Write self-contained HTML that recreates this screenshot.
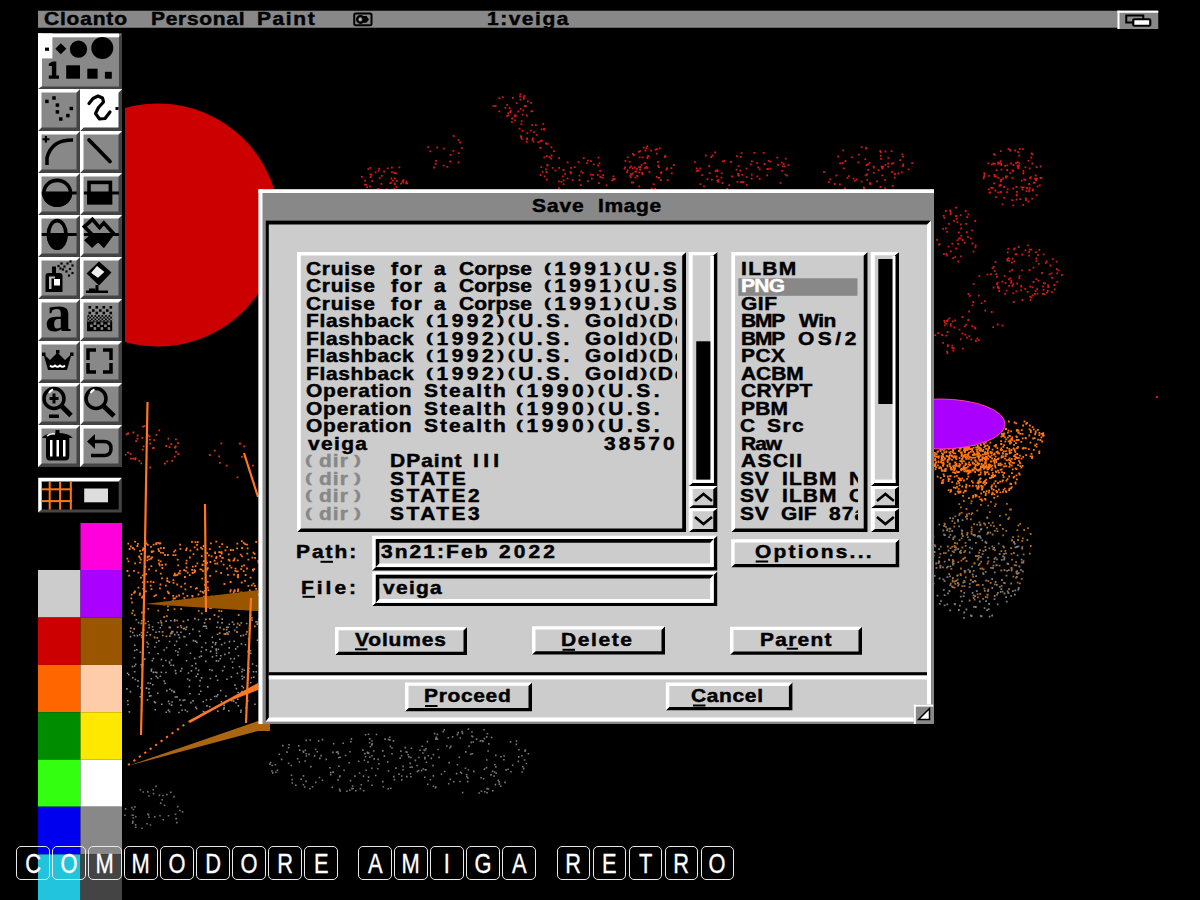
<!DOCTYPE html>
<html><head><meta charset="utf-8"><style>
html,body{margin:0;padding:0;background:#000;}
body{width:1200px;height:900px;position:relative;overflow:hidden;}
.p{display:inline-block;font-weight:bold;transform:translateY(-1.6px) scaleY(0.72);transform-origin:50% 50%;}
</style></head><body>
<svg width="1200" height="900" style="position:absolute;left:0;top:0"><rect x="0.00" y="0.00" width="1200.00" height="900.00" fill="#000"/><clipPath id="cc"><rect x="125" y="0" width="400" height="900"/></clipPath><circle cx="158" cy="225" r="121.5" fill="#cc0000" clip-path="url(#cc)"/><path fill="#d51818" d="M380.5 182.9h1.8v1.8h-1.8zM380.9 174.9h1.8v1.8h-1.8zM369.7 176.1h1.8v1.8h-1.8zM402.3 181.6h1.8v1.8h-1.8zM401.6 180.2h1.8v1.8h-1.8zM392.1 179.8h1.8v1.8h-1.8zM364.0 183.8h1.8v1.8h-1.8zM393.8 182.6h1.8v1.8h-1.8zM367.4 168.2h1.8v1.8h-1.8zM370.5 173.9h1.8v1.8h-1.8zM390.5 177.6h1.8v1.8h-1.8zM393.8 172.1h1.8v1.8h-1.8zM390.5 181.8h1.8v1.8h-1.8zM376.6 189.8h1.8v1.8h-1.8zM393.4 187.7h1.8v1.8h-1.8zM374.8 171.5h1.8v1.8h-1.8zM378.8 177.0h1.8v1.8h-1.8zM396.0 180.3h1.8v1.8h-1.8zM377.8 169.7h1.8v1.8h-1.8zM377.2 187.9h1.8v1.8h-1.8zM371.4 180.2h1.8v1.8h-1.8zM391.0 166.7h1.8v1.8h-1.8zM385.7 188.6h1.8v1.8h-1.8zM361.0 175.9h1.8v1.8h-1.8zM383.2 170.6h1.8v1.8h-1.8zM393.9 177.4h1.8v1.8h-1.8zM365.3 184.0h1.8v1.8h-1.8zM395.5 186.0h1.8v1.8h-1.8zM405.6 180.8h1.8v1.8h-1.8zM386.8 167.4h1.8v1.8h-1.8zM395.3 172.5h1.8v1.8h-1.8zM378.2 167.8h1.8v1.8h-1.8zM369.6 173.4h1.8v1.8h-1.8zM398.5 166.5h1.8v1.8h-1.8zM364.1 179.8h1.8v1.8h-1.8zM405.2 182.4h1.8v1.8h-1.8zM369.4 166.9h1.8v1.8h-1.8zM391.1 171.3h1.8v1.8h-1.8zM369.0 185.5h1.8v1.8h-1.8zM402.5 179.3h1.8v1.8h-1.8zM389.4 182.2h1.8v1.8h-1.8zM406.2 182.4h1.8v1.8h-1.8zM393.9 183.1h1.8v1.8h-1.8zM366.2 186.3h1.8v1.8h-1.8zM400.2 182.6h1.8v1.8h-1.8z"/><path fill="#d51818" d="M427.1 146.3h1.8v1.8h-1.8zM452.8 135.1h1.8v1.8h-1.8zM442.7 164.7h1.8v1.8h-1.8zM433.1 166.6h1.8v1.8h-1.8zM452.5 150.0h1.8v1.8h-1.8zM449.3 160.6h1.8v1.8h-1.8zM446.5 165.9h1.8v1.8h-1.8zM436.3 146.6h1.8v1.8h-1.8zM457.9 152.3h1.8v1.8h-1.8zM434.7 163.0h1.8v1.8h-1.8zM460.9 147.2h1.8v1.8h-1.8zM429.4 150.5h1.8v1.8h-1.8zM442.9 147.8h1.8v1.8h-1.8zM459.3 141.6h1.8v1.8h-1.8zM457.6 139.3h1.8v1.8h-1.8zM435.1 159.9h1.8v1.8h-1.8zM457.7 161.6h1.8v1.8h-1.8zM449.8 154.0h1.8v1.8h-1.8z"/><path fill="#d51818" d="M514.1 114.2h1.8v1.8h-1.8zM509.5 111.1h1.8v1.8h-1.8zM519.8 108.0h1.8v1.8h-1.8zM521.7 113.7h1.8v1.8h-1.8zM530.5 110.4h1.8v1.8h-1.8zM506.2 103.9h1.8v1.8h-1.8zM511.8 117.4h1.8v1.8h-1.8zM507.4 112.2h1.8v1.8h-1.8zM523.6 95.0h1.8v1.8h-1.8zM498.4 110.4h1.8v1.8h-1.8zM517.5 110.6h1.8v1.8h-1.8zM506.3 114.9h1.8v1.8h-1.8zM515.8 102.3h1.8v1.8h-1.8zM531.3 110.3h1.8v1.8h-1.8zM504.5 106.9h1.8v1.8h-1.8zM508.8 107.3h1.8v1.8h-1.8zM492.5 105.2h1.8v1.8h-1.8zM522.9 97.9h1.8v1.8h-1.8zM511.2 117.7h1.8v1.8h-1.8zM520.8 120.2h1.8v1.8h-1.8zM494.7 105.1h1.8v1.8h-1.8zM507.5 114.6h1.8v1.8h-1.8zM519.5 93.3h1.8v1.8h-1.8zM522.8 96.5h1.8v1.8h-1.8zM519.2 95.5h1.8v1.8h-1.8zM514.1 119.4h1.8v1.8h-1.8zM509.9 110.1h1.8v1.8h-1.8zM522.4 109.5h1.8v1.8h-1.8zM511.0 121.3h1.8v1.8h-1.8zM524.9 105.1h1.8v1.8h-1.8zM530.3 101.9h1.8v1.8h-1.8zM523.6 105.3h1.8v1.8h-1.8zM513.8 115.5h1.8v1.8h-1.8zM515.0 114.8h1.8v1.8h-1.8zM498.5 97.3h1.8v1.8h-1.8zM519.5 98.7h1.8v1.8h-1.8zM501.8 96.3h1.8v1.8h-1.8zM526.0 114.6h1.8v1.8h-1.8zM526.9 100.4h1.8v1.8h-1.8zM512.0 96.9h1.8v1.8h-1.8z"/><path fill="#d51818" d="M537.4 141.2h1.8v1.8h-1.8zM525.8 140.9h1.8v1.8h-1.8zM540.7 128.4h1.8v1.8h-1.8zM520.9 137.9h1.8v1.8h-1.8zM531.1 124.3h1.8v1.8h-1.8zM535.8 133.9h1.8v1.8h-1.8zM542.4 122.9h1.8v1.8h-1.8zM539.7 140.1h1.8v1.8h-1.8zM543.3 128.6h1.8v1.8h-1.8zM525.9 138.4h1.8v1.8h-1.8zM533.1 131.2h1.8v1.8h-1.8zM543.1 127.9h1.8v1.8h-1.8zM518.7 127.8h1.8v1.8h-1.8zM520.0 135.3h1.8v1.8h-1.8zM535.0 124.3h1.8v1.8h-1.8zM531.9 137.6h1.8v1.8h-1.8zM532.6 140.7h1.8v1.8h-1.8zM531.5 139.0h1.8v1.8h-1.8zM541.1 139.8h1.8v1.8h-1.8zM526.2 137.5h1.8v1.8h-1.8zM520.5 123.3h1.8v1.8h-1.8zM520.2 136.4h1.8v1.8h-1.8zM521.8 129.9h1.8v1.8h-1.8zM530.1 129.7h1.8v1.8h-1.8zM526.4 132.2h1.8v1.8h-1.8z"/><path fill="#d51818" d="M553.1 150.2h1.8v1.8h-1.8zM548.6 156.1h1.8v1.8h-1.8zM545.1 142.6h1.8v1.8h-1.8zM543.4 156.4h1.8v1.8h-1.8zM539.3 147.0h1.8v1.8h-1.8zM550.7 154.6h1.8v1.8h-1.8zM546.0 155.3h1.8v1.8h-1.8zM546.8 142.9h1.8v1.8h-1.8zM539.5 146.7h1.8v1.8h-1.8zM550.5 146.5h1.8v1.8h-1.8z"/><path fill="#d51818" d="M546.4 164.6h1.8v1.8h-1.8zM541.7 171.0h1.8v1.8h-1.8zM543.8 175.4h1.8v1.8h-1.8zM539.6 174.1h1.8v1.8h-1.8zM550.3 157.8h1.8v1.8h-1.8zM562.6 169.1h1.8v1.8h-1.8zM540.5 166.3h1.8v1.8h-1.8zM558.2 167.0h1.8v1.8h-1.8zM562.7 179.4h1.8v1.8h-1.8zM562.0 175.5h1.8v1.8h-1.8zM566.7 177.8h1.8v1.8h-1.8zM558.2 157.2h1.8v1.8h-1.8zM562.6 183.2h1.8v1.8h-1.8zM551.8 166.9h1.8v1.8h-1.8zM566.7 161.4h1.8v1.8h-1.8zM558.0 187.3h1.8v1.8h-1.8zM546.0 178.7h1.8v1.8h-1.8zM569.6 171.1h1.8v1.8h-1.8zM560.5 180.9h1.8v1.8h-1.8zM545.7 171.1h1.8v1.8h-1.8zM558.0 180.5h1.8v1.8h-1.8zM554.6 169.8h1.8v1.8h-1.8zM545.0 168.5h1.8v1.8h-1.8zM564.2 173.0h1.8v1.8h-1.8zM546.8 164.0h1.8v1.8h-1.8z"/><path fill="#d51818" d="M613.9 178.2h1.8v1.8h-1.8zM597.6 156.7h1.8v1.8h-1.8zM601.8 177.0h1.8v1.8h-1.8zM612.5 175.5h1.8v1.8h-1.8zM590.9 177.7h1.8v1.8h-1.8zM571.8 179.2h1.8v1.8h-1.8zM597.1 164.6h1.8v1.8h-1.8zM605.6 184.4h1.8v1.8h-1.8zM573.9 166.3h1.8v1.8h-1.8zM596.9 174.0h1.8v1.8h-1.8zM586.1 162.3h1.8v1.8h-1.8zM612.9 178.8h1.8v1.8h-1.8zM577.7 161.3h1.8v1.8h-1.8zM611.2 179.4h1.8v1.8h-1.8zM612.4 178.0h1.8v1.8h-1.8zM578.6 174.7h1.8v1.8h-1.8zM570.2 167.0h1.8v1.8h-1.8zM591.0 177.7h1.8v1.8h-1.8zM580.4 170.7h1.8v1.8h-1.8zM599.5 176.1h1.8v1.8h-1.8zM602.2 174.2h1.8v1.8h-1.8zM587.0 180.2h1.8v1.8h-1.8zM592.8 163.4h1.8v1.8h-1.8zM581.9 172.0h1.8v1.8h-1.8zM590.1 173.8h1.8v1.8h-1.8zM592.0 174.0h1.8v1.8h-1.8zM590.1 160.2h1.8v1.8h-1.8zM598.1 182.2h1.8v1.8h-1.8zM599.2 169.9h1.8v1.8h-1.8zM598.6 162.5h1.8v1.8h-1.8zM570.1 172.5h1.8v1.8h-1.8zM578.6 179.1h1.8v1.8h-1.8zM582.9 157.3h1.8v1.8h-1.8zM580.0 184.2h1.8v1.8h-1.8zM586.9 159.7h1.8v1.8h-1.8z"/><path fill="#d51818" d="M626.2 171.3h1.8v1.8h-1.8zM636.1 167.9h1.8v1.8h-1.8zM641.3 171.9h1.8v1.8h-1.8zM631.8 172.5h1.8v1.8h-1.8zM641.5 173.4h1.8v1.8h-1.8zM638.8 156.5h1.8v1.8h-1.8zM630.8 173.7h1.8v1.8h-1.8zM629.8 176.5h1.8v1.8h-1.8zM636.4 174.9h1.8v1.8h-1.8zM631.0 181.6h1.8v1.8h-1.8zM640.7 164.0h1.8v1.8h-1.8zM632.4 181.7h1.8v1.8h-1.8zM629.4 174.9h1.8v1.8h-1.8zM639.4 166.1h1.8v1.8h-1.8zM623.6 167.8h1.8v1.8h-1.8zM634.6 176.8h1.8v1.8h-1.8zM638.2 166.3h1.8v1.8h-1.8zM638.4 171.4h1.8v1.8h-1.8zM633.7 166.6h1.8v1.8h-1.8zM630.1 173.3h1.8v1.8h-1.8zM624.5 160.0h1.8v1.8h-1.8zM632.0 153.0h1.8v1.8h-1.8z"/><path fill="#d51818" d="M642.8 146.8h1.8v1.8h-1.8zM636.6 175.0h1.8v1.8h-1.8zM658.0 166.2h1.8v1.8h-1.8zM644.6 149.6h1.8v1.8h-1.8zM670.9 172.5h1.8v1.8h-1.8zM664.0 156.1h1.8v1.8h-1.8zM645.6 147.3h1.8v1.8h-1.8zM660.1 179.2h1.8v1.8h-1.8zM624.3 166.4h1.8v1.8h-1.8zM656.0 148.2h1.8v1.8h-1.8zM626.8 156.5h1.8v1.8h-1.8zM639.1 150.3h1.8v1.8h-1.8zM648.6 170.9h1.8v1.8h-1.8zM658.5 176.8h1.8v1.8h-1.8zM666.8 179.3h1.8v1.8h-1.8zM628.8 160.7h1.8v1.8h-1.8zM632.9 154.1h1.8v1.8h-1.8zM646.5 167.1h1.8v1.8h-1.8zM654.6 148.8h1.8v1.8h-1.8zM629.0 166.7h1.8v1.8h-1.8zM644.4 162.2h1.8v1.8h-1.8zM646.9 156.0h1.8v1.8h-1.8zM660.0 172.1h1.8v1.8h-1.8zM646.5 157.1h1.8v1.8h-1.8zM646.4 145.3h1.8v1.8h-1.8zM631.9 167.5h1.8v1.8h-1.8zM626.7 169.4h1.8v1.8h-1.8zM650.2 149.8h1.8v1.8h-1.8zM643.5 162.2h1.8v1.8h-1.8zM655.9 175.9h1.8v1.8h-1.8zM647.4 154.9h1.8v1.8h-1.8zM645.4 166.0h1.8v1.8h-1.8zM660.5 171.2h1.8v1.8h-1.8zM637.8 150.9h1.8v1.8h-1.8zM641.7 156.4h1.8v1.8h-1.8zM630.4 165.4h1.8v1.8h-1.8zM639.2 168.6h1.8v1.8h-1.8zM657.1 160.9h1.8v1.8h-1.8zM672.9 164.1h1.8v1.8h-1.8zM665.5 168.6h1.8v1.8h-1.8zM658.9 147.4h1.8v1.8h-1.8zM635.2 170.6h1.8v1.8h-1.8zM654.3 187.7h1.8v1.8h-1.8zM652.8 183.3h1.8v1.8h-1.8zM659.8 179.4h1.8v1.8h-1.8zM657.1 164.7h1.8v1.8h-1.8zM655.9 152.8h1.8v1.8h-1.8zM664.5 155.0h1.8v1.8h-1.8zM650.9 187.7h1.8v1.8h-1.8zM643.9 167.3h1.8v1.8h-1.8zM666.2 167.3h1.8v1.8h-1.8zM634.4 170.7h1.8v1.8h-1.8zM657.7 177.0h1.8v1.8h-1.8zM638.4 185.5h1.8v1.8h-1.8zM670.5 167.2h1.8v1.8h-1.8z"/><path fill="#d51818" d="M749.9 163.5h1.8v1.8h-1.8zM780.8 161.7h1.8v1.8h-1.8zM763.7 163.1h1.8v1.8h-1.8zM716.5 179.9h1.8v1.8h-1.8zM781.4 169.9h1.8v1.8h-1.8zM717.4 181.0h1.8v1.8h-1.8zM738.1 174.8h1.8v1.8h-1.8zM779.6 182.0h1.8v1.8h-1.8zM728.4 190.7h1.8v1.8h-1.8zM740.1 181.3h1.8v1.8h-1.8zM716.5 169.3h1.8v1.8h-1.8zM703.1 185.4h1.8v1.8h-1.8zM776.4 156.8h1.8v1.8h-1.8zM704.9 154.6h1.8v1.8h-1.8zM777.3 164.1h1.8v1.8h-1.8zM737.7 165.2h1.8v1.8h-1.8zM736.0 155.3h1.8v1.8h-1.8zM740.7 152.3h1.8v1.8h-1.8zM737.3 174.7h1.8v1.8h-1.8zM757.3 166.5h1.8v1.8h-1.8zM708.8 172.2h1.8v1.8h-1.8zM726.3 188.1h1.8v1.8h-1.8zM767.2 168.3h1.8v1.8h-1.8zM723.5 160.0h1.8v1.8h-1.8zM708.3 165.1h1.8v1.8h-1.8zM750.8 177.7h1.8v1.8h-1.8zM753.4 190.2h1.8v1.8h-1.8zM714.7 170.2h1.8v1.8h-1.8zM784.8 157.8h1.8v1.8h-1.8zM720.8 172.5h1.8v1.8h-1.8zM745.8 176.2h1.8v1.8h-1.8zM731.1 175.6h1.8v1.8h-1.8zM741.9 181.2h1.8v1.8h-1.8zM693.9 161.2h1.8v1.8h-1.8zM739.9 155.9h1.8v1.8h-1.8zM706.5 178.2h1.8v1.8h-1.8zM717.5 178.9h1.8v1.8h-1.8zM766.3 174.4h1.8v1.8h-1.8zM758.8 168.4h1.8v1.8h-1.8zM697.2 169.6h1.8v1.8h-1.8zM756.3 162.2h1.8v1.8h-1.8zM736.5 180.9h1.8v1.8h-1.8zM710.9 178.7h1.8v1.8h-1.8zM787.7 164.2h1.8v1.8h-1.8zM745.6 167.7h1.8v1.8h-1.8zM784.6 173.7h1.8v1.8h-1.8zM769.5 160.8h1.8v1.8h-1.8zM739.4 169.8h1.8v1.8h-1.8zM699.6 183.3h1.8v1.8h-1.8zM762.8 151.9h1.8v1.8h-1.8zM766.5 168.1h1.8v1.8h-1.8zM756.4 175.5h1.8v1.8h-1.8zM695.8 167.5h1.8v1.8h-1.8zM782.8 163.3h1.8v1.8h-1.8zM711.6 154.6h1.8v1.8h-1.8zM701.3 174.3h1.8v1.8h-1.8zM786.3 174.8h1.8v1.8h-1.8zM745.7 191.0h1.8v1.8h-1.8zM721.8 160.4h1.8v1.8h-1.8zM758.8 178.0h1.8v1.8h-1.8zM710.4 156.1h1.8v1.8h-1.8zM750.9 173.8h1.8v1.8h-1.8zM699.3 167.4h1.8v1.8h-1.8zM720.5 176.7h1.8v1.8h-1.8zM735.6 168.7h1.8v1.8h-1.8zM728.3 184.2h1.8v1.8h-1.8zM781.9 165.5h1.8v1.8h-1.8zM767.7 159.9h1.8v1.8h-1.8zM742.6 180.9h1.8v1.8h-1.8zM783.9 165.5h1.8v1.8h-1.8zM737.2 173.0h1.8v1.8h-1.8zM695.7 170.2h1.8v1.8h-1.8zM716.0 175.4h1.8v1.8h-1.8zM714.2 151.6h1.8v1.8h-1.8zM741.4 174.0h1.8v1.8h-1.8zM721.6 182.1h1.8v1.8h-1.8zM730.1 161.1h1.8v1.8h-1.8zM753.5 151.9h1.8v1.8h-1.8zM715.5 169.7h1.8v1.8h-1.8zM769.6 167.7h1.8v1.8h-1.8zM751.0 160.4h1.8v1.8h-1.8zM748.4 188.9h1.8v1.8h-1.8zM725.3 190.6h1.8v1.8h-1.8zM716.6 170.3h1.8v1.8h-1.8zM745.8 184.0h1.8v1.8h-1.8z"/><path fill="#d51818" d="M842.3 149.5h1.8v1.8h-1.8zM884.2 179.0h1.8v1.8h-1.8zM876.9 189.1h1.8v1.8h-1.8zM872.9 171.9h1.8v1.8h-1.8zM894.0 173.1h1.8v1.8h-1.8zM902.2 155.7h1.8v1.8h-1.8zM860.8 146.2h1.8v1.8h-1.8zM891.0 162.7h1.8v1.8h-1.8zM884.3 187.6h1.8v1.8h-1.8zM865.8 164.1h1.8v1.8h-1.8zM850.9 156.4h1.8v1.8h-1.8zM846.6 177.0h1.8v1.8h-1.8zM867.2 169.0h1.8v1.8h-1.8zM860.7 180.8h1.8v1.8h-1.8zM882.2 165.9h1.8v1.8h-1.8zM887.3 165.8h1.8v1.8h-1.8zM839.0 183.6h1.8v1.8h-1.8zM879.8 155.0h1.8v1.8h-1.8zM897.5 172.6h1.8v1.8h-1.8zM833.9 183.1h1.8v1.8h-1.8zM876.2 180.4h1.8v1.8h-1.8zM872.7 165.7h1.8v1.8h-1.8zM829.4 178.5h1.8v1.8h-1.8zM867.0 163.6h1.8v1.8h-1.8zM877.7 169.2h1.8v1.8h-1.8zM887.3 162.6h1.8v1.8h-1.8zM865.2 147.1h1.8v1.8h-1.8zM852.7 177.7h1.8v1.8h-1.8zM902.4 163.5h1.8v1.8h-1.8zM862.9 186.6h1.8v1.8h-1.8zM855.8 178.6h1.8v1.8h-1.8zM907.7 168.5h1.8v1.8h-1.8zM899.1 159.2h1.8v1.8h-1.8zM873.0 166.8h1.8v1.8h-1.8zM869.3 183.1h1.8v1.8h-1.8zM911.2 162.2h1.8v1.8h-1.8zM847.8 175.2h1.8v1.8h-1.8zM835.5 174.6h1.8v1.8h-1.8zM884.5 163.9h1.8v1.8h-1.8zM879.4 150.1h1.8v1.8h-1.8zM884.6 150.6h1.8v1.8h-1.8zM844.5 160.1h1.8v1.8h-1.8zM853.8 180.0h1.8v1.8h-1.8zM868.7 161.9h1.8v1.8h-1.8zM879.5 186.1h1.8v1.8h-1.8zM866.2 173.6h1.8v1.8h-1.8zM900.9 171.5h1.8v1.8h-1.8zM844.2 187.4h1.8v1.8h-1.8zM901.5 153.4h1.8v1.8h-1.8zM864.7 174.4h1.8v1.8h-1.8zM893.9 176.8h1.8v1.8h-1.8zM858.0 153.8h1.8v1.8h-1.8zM869.1 182.1h1.8v1.8h-1.8zM837.3 155.6h1.8v1.8h-1.8zM865.4 147.8h1.8v1.8h-1.8zM857.4 161.4h1.8v1.8h-1.8zM880.1 158.0h1.8v1.8h-1.8zM839.2 162.5h1.8v1.8h-1.8zM864.4 158.2h1.8v1.8h-1.8zM866.4 178.9h1.8v1.8h-1.8zM891.8 185.0h1.8v1.8h-1.8zM841.8 162.1h1.8v1.8h-1.8zM828.0 181.3h1.8v1.8h-1.8zM842.9 167.5h1.8v1.8h-1.8zM879.9 151.4h1.8v1.8h-1.8zM881.3 167.6h1.8v1.8h-1.8zM823.1 171.1h1.8v1.8h-1.8zM890.7 150.3h1.8v1.8h-1.8zM891.2 171.0h1.8v1.8h-1.8zM881.3 174.5h1.8v1.8h-1.8zM902.1 165.2h1.8v1.8h-1.8zM892.5 162.3h1.8v1.8h-1.8zM887.4 157.0h1.8v1.8h-1.8zM863.4 187.4h1.8v1.8h-1.8zM880.7 165.6h1.8v1.8h-1.8z"/><path fill="#d51818" d="M992.6 162.6h1.8v1.8h-1.8zM1015.7 193.8h1.8v1.8h-1.8zM1020.5 186.5h1.8v1.8h-1.8zM1011.3 199.2h1.8v1.8h-1.8zM1004.2 165.0h1.8v1.8h-1.8zM1029.1 177.2h1.8v1.8h-1.8zM1006.4 164.4h1.8v1.8h-1.8zM1006.8 188.5h1.8v1.8h-1.8zM1018.2 154.7h1.8v1.8h-1.8zM1020.8 179.7h1.8v1.8h-1.8zM994.4 189.6h1.8v1.8h-1.8zM1006.2 169.1h1.8v1.8h-1.8zM1024.9 197.4h1.8v1.8h-1.8zM998.5 184.6h1.8v1.8h-1.8zM1001.6 203.4h1.8v1.8h-1.8zM1003.4 196.9h1.8v1.8h-1.8zM999.9 191.1h1.8v1.8h-1.8zM1031.7 153.4h1.8v1.8h-1.8zM1003.3 186.1h1.8v1.8h-1.8zM1010.1 162.6h1.8v1.8h-1.8zM1040.5 177.1h1.8v1.8h-1.8zM987.9 188.5h1.8v1.8h-1.8zM988.6 191.7h1.8v1.8h-1.8zM1000.3 178.9h1.8v1.8h-1.8zM1034.2 178.1h1.8v1.8h-1.8zM993.9 153.9h1.8v1.8h-1.8zM1032.1 188.6h1.8v1.8h-1.8zM997.3 191.5h1.8v1.8h-1.8zM1021.7 188.7h1.8v1.8h-1.8zM983.4 172.2h1.8v1.8h-1.8zM1028.3 189.3h1.8v1.8h-1.8zM1022.0 148.2h1.8v1.8h-1.8zM1015.5 186.1h1.8v1.8h-1.8zM1039.8 165.6h1.8v1.8h-1.8zM1005.1 176.8h1.8v1.8h-1.8zM1028.7 167.6h1.8v1.8h-1.8zM1031.5 162.6h1.8v1.8h-1.8zM1017.4 165.3h1.8v1.8h-1.8zM1015.2 162.2h1.8v1.8h-1.8zM989.2 191.6h1.8v1.8h-1.8zM1018.1 164.7h1.8v1.8h-1.8zM1015.8 194.6h1.8v1.8h-1.8zM993.5 173.9h1.8v1.8h-1.8zM1022.7 186.4h1.8v1.8h-1.8zM1007.5 147.9h1.8v1.8h-1.8zM1033.8 181.7h1.8v1.8h-1.8zM1012.3 170.1h1.8v1.8h-1.8zM1017.4 167.2h1.8v1.8h-1.8zM994.0 163.0h1.8v1.8h-1.8zM1000.4 164.1h1.8v1.8h-1.8zM991.9 187.0h1.8v1.8h-1.8zM990.3 187.0h1.8v1.8h-1.8zM993.2 182.5h1.8v1.8h-1.8zM1035.3 179.5h1.8v1.8h-1.8zM997.5 177.0h1.8v1.8h-1.8zM1014.3 149.6h1.8v1.8h-1.8zM999.7 179.3h1.8v1.8h-1.8zM1002.3 177.6h1.8v1.8h-1.8zM1025.6 190.2h1.8v1.8h-1.8zM1028.7 186.9h1.8v1.8h-1.8zM1006.0 175.6h1.8v1.8h-1.8zM1006.4 169.5h1.8v1.8h-1.8zM1009.3 149.7h1.8v1.8h-1.8zM1005.0 175.5h1.8v1.8h-1.8zM993.6 175.5h1.8v1.8h-1.8zM1022.5 172.6h1.8v1.8h-1.8zM1030.7 152.6h1.8v1.8h-1.8zM1009.0 149.1h1.8v1.8h-1.8zM1022.3 203.9h1.8v1.8h-1.8zM982.7 177.5h1.8v1.8h-1.8zM1022.5 169.9h1.8v1.8h-1.8zM1018.9 147.9h1.8v1.8h-1.8zM1028.3 183.1h1.8v1.8h-1.8zM1012.5 164.1h1.8v1.8h-1.8zM1024.5 166.5h1.8v1.8h-1.8zM1016.6 165.6h1.8v1.8h-1.8zM983.2 175.6h1.8v1.8h-1.8zM1016.0 190.9h1.8v1.8h-1.8zM995.1 175.4h1.8v1.8h-1.8zM1024.5 178.9h1.8v1.8h-1.8zM1027.4 200.6h1.8v1.8h-1.8zM999.9 150.3h1.8v1.8h-1.8zM1025.0 199.2h1.8v1.8h-1.8zM1028.4 190.5h1.8v1.8h-1.8zM1000.2 162.4h1.8v1.8h-1.8zM1027.6 160.0h1.8v1.8h-1.8zM987.3 162.4h1.8v1.8h-1.8zM1035.7 194.3h1.8v1.8h-1.8zM999.1 162.3h1.8v1.8h-1.8zM1016.6 161.3h1.8v1.8h-1.8zM1034.8 174.6h1.8v1.8h-1.8zM995.2 196.2h1.8v1.8h-1.8zM1000.2 180.5h1.8v1.8h-1.8zM1011.7 169.4h1.8v1.8h-1.8zM1018.4 162.3h1.8v1.8h-1.8zM992.9 153.2h1.8v1.8h-1.8zM991.0 163.4h1.8v1.8h-1.8zM1011.5 177.2h1.8v1.8h-1.8zM1023.3 178.4h1.8v1.8h-1.8zM997.3 162.9h1.8v1.8h-1.8zM983.7 173.7h1.8v1.8h-1.8zM1021.7 186.5h1.8v1.8h-1.8zM1009.4 172.3h1.8v1.8h-1.8zM1029.9 176.3h1.8v1.8h-1.8zM1026.1 187.1h1.8v1.8h-1.8zM1015.7 198.6h1.8v1.8h-1.8zM1000.5 168.8h1.8v1.8h-1.8zM997.3 161.5h1.8v1.8h-1.8zM1031.2 197.7h1.8v1.8h-1.8zM1012.5 187.6h1.8v1.8h-1.8zM1031.8 189.6h1.8v1.8h-1.8zM1030.3 156.8h1.8v1.8h-1.8zM999.4 184.9h1.8v1.8h-1.8zM1036.0 177.7h1.8v1.8h-1.8zM995.6 169.2h1.8v1.8h-1.8zM999.8 160.2h1.8v1.8h-1.8zM1035.7 166.1h1.8v1.8h-1.8zM1012.3 204.5h1.8v1.8h-1.8zM1033.0 182.0h1.8v1.8h-1.8zM999.9 184.1h1.8v1.8h-1.8zM1036.7 185.5h1.8v1.8h-1.8zM1034.2 177.7h1.8v1.8h-1.8zM1022.5 171.9h1.8v1.8h-1.8zM1019.3 198.2h1.8v1.8h-1.8zM988.0 175.0h1.8v1.8h-1.8zM1016.9 164.4h1.8v1.8h-1.8zM1006.0 191.3h1.8v1.8h-1.8zM1039.0 184.5h1.8v1.8h-1.8zM1017.2 151.2h1.8v1.8h-1.8zM1039.5 177.1h1.8v1.8h-1.8z"/><path fill="#d51818" d="M955.5 214.9h1.8v1.8h-1.8zM955.2 215.2h1.8v1.8h-1.8zM957.1 243.0h1.8v1.8h-1.8zM956.5 239.5h1.8v1.8h-1.8zM946.3 254.8h1.8v1.8h-1.8zM949.2 209.8h1.8v1.8h-1.8zM953.3 220.0h1.8v1.8h-1.8zM942.3 227.9h1.8v1.8h-1.8zM959.8 214.3h1.8v1.8h-1.8zM954.3 256.3h1.8v1.8h-1.8zM966.0 231.2h1.8v1.8h-1.8zM958.0 231.6h1.8v1.8h-1.8zM955.3 247.6h1.8v1.8h-1.8zM955.2 206.8h1.8v1.8h-1.8zM955.7 218.0h1.8v1.8h-1.8zM965.2 223.0h1.8v1.8h-1.8zM957.4 260.6h1.8v1.8h-1.8zM943.5 216.9h1.8v1.8h-1.8zM944.9 210.1h1.8v1.8h-1.8zM936.2 238.9h1.8v1.8h-1.8zM949.4 209.5h1.8v1.8h-1.8zM938.7 243.2h1.8v1.8h-1.8zM945.0 227.4h1.8v1.8h-1.8zM960.1 255.5h1.8v1.8h-1.8zM974.5 246.5h1.8v1.8h-1.8zM958.2 237.6h1.8v1.8h-1.8zM972.6 250.8h1.8v1.8h-1.8zM951.3 242.7h1.8v1.8h-1.8zM960.4 235.0h1.8v1.8h-1.8zM949.8 213.1h1.8v1.8h-1.8zM949.8 211.3h1.8v1.8h-1.8zM971.5 242.6h1.8v1.8h-1.8zM943.0 253.2h1.8v1.8h-1.8zM964.8 210.1h1.8v1.8h-1.8zM974.8 244.5h1.8v1.8h-1.8zM974.4 220.1h1.8v1.8h-1.8zM963.8 241.9h1.8v1.8h-1.8zM959.1 237.4h1.8v1.8h-1.8zM967.4 213.4h1.8v1.8h-1.8zM942.7 215.0h1.8v1.8h-1.8zM948.0 223.0h1.8v1.8h-1.8zM961.6 239.1h1.8v1.8h-1.8zM956.5 221.3h1.8v1.8h-1.8zM950.0 250.5h1.8v1.8h-1.8zM967.1 235.9h1.8v1.8h-1.8zM952.2 257.2h1.8v1.8h-1.8zM947.6 245.7h1.8v1.8h-1.8zM971.2 229.5h1.8v1.8h-1.8zM966.3 216.3h1.8v1.8h-1.8zM969.9 237.5h1.8v1.8h-1.8zM938.2 243.6h1.8v1.8h-1.8zM945.4 253.3h1.8v1.8h-1.8zM946.1 230.9h1.8v1.8h-1.8zM960.3 227.6h1.8v1.8h-1.8zM959.9 223.5h1.8v1.8h-1.8z"/><path fill="#d51818" d="M1041.1 272.1h1.8v1.8h-1.8zM1026.9 244.4h1.8v1.8h-1.8zM1050.6 272.5h1.8v1.8h-1.8zM990.1 273.3h1.8v1.8h-1.8zM1034.7 290.0h1.8v1.8h-1.8zM1004.1 292.9h1.8v1.8h-1.8zM1021.5 299.1h1.8v1.8h-1.8zM1020.3 284.7h1.8v1.8h-1.8zM1015.6 253.2h1.8v1.8h-1.8zM1047.4 286.2h1.8v1.8h-1.8zM1053.5 284.1h1.8v1.8h-1.8zM1013.0 248.5h1.8v1.8h-1.8zM1008.3 260.0h1.8v1.8h-1.8zM1004.6 282.2h1.8v1.8h-1.8zM1032.6 266.8h1.8v1.8h-1.8zM1028.6 269.1h1.8v1.8h-1.8zM1029.3 285.8h1.8v1.8h-1.8zM1045.9 260.5h1.8v1.8h-1.8zM998.1 290.1h1.8v1.8h-1.8zM1026.7 290.9h1.8v1.8h-1.8zM991.6 267.2h1.8v1.8h-1.8zM1024.6 249.5h1.8v1.8h-1.8zM1011.4 285.0h1.8v1.8h-1.8zM1043.6 293.3h1.8v1.8h-1.8zM1006.8 251.5h1.8v1.8h-1.8zM1036.2 288.2h1.8v1.8h-1.8zM1028.2 250.9h1.8v1.8h-1.8zM1042.1 285.5h1.8v1.8h-1.8zM1037.9 263.0h1.8v1.8h-1.8zM1031.5 286.4h1.8v1.8h-1.8zM1013.9 247.4h1.8v1.8h-1.8zM1032.5 281.1h1.8v1.8h-1.8zM1024.3 288.0h1.8v1.8h-1.8zM1008.9 270.4h1.8v1.8h-1.8zM1016.2 282.7h1.8v1.8h-1.8zM1056.0 268.3h1.8v1.8h-1.8zM1053.9 288.4h1.8v1.8h-1.8zM1042.9 282.3h1.8v1.8h-1.8zM1057.7 269.5h1.8v1.8h-1.8zM1021.4 253.6h1.8v1.8h-1.8zM1034.1 293.1h1.8v1.8h-1.8zM1037.5 279.9h1.8v1.8h-1.8zM1018.7 275.3h1.8v1.8h-1.8zM996.8 286.8h1.8v1.8h-1.8zM1014.6 253.4h1.8v1.8h-1.8zM1006.6 257.9h1.8v1.8h-1.8zM1042.6 288.9h1.8v1.8h-1.8zM997.0 285.6h1.8v1.8h-1.8zM1044.9 262.0h1.8v1.8h-1.8zM994.6 261.1h1.8v1.8h-1.8zM1008.0 278.4h1.8v1.8h-1.8zM1017.8 246.1h1.8v1.8h-1.8zM1028.8 248.8h1.8v1.8h-1.8zM1042.8 253.5h1.8v1.8h-1.8zM1007.9 257.3h1.8v1.8h-1.8zM1012.4 292.5h1.8v1.8h-1.8zM1044.1 282.5h1.8v1.8h-1.8zM1030.5 248.8h1.8v1.8h-1.8zM1011.0 261.8h1.8v1.8h-1.8zM1001.3 280.7h1.8v1.8h-1.8zM1006.4 259.6h1.8v1.8h-1.8zM1007.4 247.9h1.8v1.8h-1.8zM1036.6 292.7h1.8v1.8h-1.8zM1028.2 254.8h1.8v1.8h-1.8zM986.6 273.8h1.8v1.8h-1.8zM1051.2 276.9h1.8v1.8h-1.8zM1041.9 293.0h1.8v1.8h-1.8zM1049.5 264.6h1.8v1.8h-1.8zM1047.2 284.6h1.8v1.8h-1.8zM992.9 266.0h1.8v1.8h-1.8zM993.7 270.3h1.8v1.8h-1.8zM1037.1 254.2h1.8v1.8h-1.8zM992.7 286.6h1.8v1.8h-1.8zM1031.8 294.4h1.8v1.8h-1.8zM998.1 287.3h1.8v1.8h-1.8zM1051.1 291.3h1.8v1.8h-1.8zM1018.4 277.3h1.8v1.8h-1.8zM1020.3 289.5h1.8v1.8h-1.8zM1048.5 273.5h1.8v1.8h-1.8zM996.1 283.2h1.8v1.8h-1.8zM1012.3 283.6h1.8v1.8h-1.8zM1029.2 295.8h1.8v1.8h-1.8zM1049.6 264.5h1.8v1.8h-1.8zM1030.6 296.6h1.8v1.8h-1.8zM1010.4 280.1h1.8v1.8h-1.8zM1047.0 289.9h1.8v1.8h-1.8zM1035.1 251.2h1.8v1.8h-1.8zM996.0 276.0h1.8v1.8h-1.8zM1029.6 299.2h1.8v1.8h-1.8zM1005.7 289.8h1.8v1.8h-1.8zM1038.4 249.0h1.8v1.8h-1.8zM1003.8 275.0h1.8v1.8h-1.8zM1011.2 269.0h1.8v1.8h-1.8zM1035.4 257.6h1.8v1.8h-1.8zM1035.6 260.3h1.8v1.8h-1.8zM1010.4 281.9h1.8v1.8h-1.8zM1009.4 277.4h1.8v1.8h-1.8zM1056.3 272.4h1.8v1.8h-1.8zM1020.3 285.6h1.8v1.8h-1.8zM1015.6 290.4h1.8v1.8h-1.8zM996.7 281.7h1.8v1.8h-1.8zM1011.7 257.8h1.8v1.8h-1.8zM1055.7 260.8h1.8v1.8h-1.8zM1056.4 280.9h1.8v1.8h-1.8zM1051.9 258.2h1.8v1.8h-1.8zM1046.0 291.7h1.8v1.8h-1.8zM1020.9 269.5h1.8v1.8h-1.8zM1061.0 274.0h1.8v1.8h-1.8zM1013.4 260.4h1.8v1.8h-1.8zM1035.5 278.3h1.8v1.8h-1.8z"/><path fill="#d51818" d="M992.3 326.3h1.8v1.8h-1.8zM984.4 309.6h1.8v1.8h-1.8zM1008.3 284.9h1.8v1.8h-1.8zM1001.6 324.6h1.8v1.8h-1.8zM972.8 283.3h1.8v1.8h-1.8zM978.4 275.3h1.8v1.8h-1.8zM995.4 273.3h1.8v1.8h-1.8zM996.8 323.6h1.8v1.8h-1.8zM968.9 295.0h1.8v1.8h-1.8zM968.2 310.6h1.8v1.8h-1.8zM977.9 294.8h1.8v1.8h-1.8zM990.9 311.1h1.8v1.8h-1.8zM984.0 300.3h1.8v1.8h-1.8zM980.7 302.3h1.8v1.8h-1.8zM972.4 301.1h1.8v1.8h-1.8zM967.5 293.1h1.8v1.8h-1.8zM1012.9 301.1h1.8v1.8h-1.8zM971.6 304.5h1.8v1.8h-1.8z"/><path fill="#d51818" d="M946.8 319.2h1.8v1.8h-1.8zM947.0 344.2h1.8v1.8h-1.8zM964.4 333.7h1.8v1.8h-1.8zM945.5 322.9h1.8v1.8h-1.8zM976.4 337.8h1.8v1.8h-1.8zM948.5 317.4h1.8v1.8h-1.8zM946.5 352.3h1.8v1.8h-1.8zM941.3 334.1h1.8v1.8h-1.8zM961.5 332.8h1.8v1.8h-1.8zM954.2 319.5h1.8v1.8h-1.8zM946.2 350.8h1.8v1.8h-1.8zM947.0 345.3h1.8v1.8h-1.8zM937.2 332.2h1.8v1.8h-1.8zM961.9 347.8h1.8v1.8h-1.8zM942.2 342.0h1.8v1.8h-1.8zM964.0 325.4h1.8v1.8h-1.8zM965.2 323.8h1.8v1.8h-1.8zM945.5 334.8h1.8v1.8h-1.8zM934.3 334.2h1.8v1.8h-1.8zM945.9 320.3h1.8v1.8h-1.8zM951.4 344.8h1.8v1.8h-1.8zM952.4 349.6h1.8v1.8h-1.8zM943.9 321.7h1.8v1.8h-1.8zM977.8 339.2h1.8v1.8h-1.8zM971.3 325.3h1.8v1.8h-1.8zM970.5 338.4h1.8v1.8h-1.8zM968.5 335.3h1.8v1.8h-1.8zM974.5 327.6h1.8v1.8h-1.8zM946.4 320.1h1.8v1.8h-1.8zM973.8 326.6h1.8v1.8h-1.8zM943.9 324.4h1.8v1.8h-1.8zM951.9 320.4h1.8v1.8h-1.8zM953.4 326.6h1.8v1.8h-1.8zM949.9 323.3h1.8v1.8h-1.8zM958.6 328.7h1.8v1.8h-1.8zM959.9 338.5h1.8v1.8h-1.8zM961.5 316.1h1.8v1.8h-1.8zM949.9 324.9h1.8v1.8h-1.8zM967.4 319.1h1.8v1.8h-1.8zM946.7 331.1h1.8v1.8h-1.8zM953.0 347.3h1.8v1.8h-1.8zM951.4 346.9h1.8v1.8h-1.8zM943.4 320.0h1.8v1.8h-1.8zM975.0 340.1h1.8v1.8h-1.8zM966.0 336.7h1.8v1.8h-1.8z"/><rect x="1156.00" y="396.00" width="2.00" height="2.00" fill="#d51818"/><path fill="#dd3311" d="M158.4 429.5h1.8v1.8h-1.8zM167.5 437.8h1.8v1.8h-1.8zM168.6 446.2h1.8v1.8h-1.8zM125.7 433.4h1.8v1.8h-1.8zM170.5 443.2h1.8v1.8h-1.8zM141.8 448.7h1.8v1.8h-1.8zM141.5 437.0h1.8v1.8h-1.8zM152.2 447.2h1.8v1.8h-1.8zM174.8 445.5h1.8v1.8h-1.8zM171.3 460.0h1.8v1.8h-1.8zM173.8 455.8h1.8v1.8h-1.8zM152.8 447.1h1.8v1.8h-1.8zM147.2 434.4h1.8v1.8h-1.8zM148.7 435.5h1.8v1.8h-1.8zM175.1 451.0h1.8v1.8h-1.8zM143.7 425.2h1.8v1.8h-1.8zM148.9 438.7h1.8v1.8h-1.8zM132.5 431.6h1.8v1.8h-1.8zM121.9 450.2h1.8v1.8h-1.8zM149.3 466.6h1.8v1.8h-1.8zM149.3 442.7h1.8v1.8h-1.8zM174.1 446.6h1.8v1.8h-1.8zM153.5 439.3h1.8v1.8h-1.8zM140.4 462.4h1.8v1.8h-1.8zM164.0 462.6h1.8v1.8h-1.8zM142.7 445.5h1.8v1.8h-1.8zM134.7 457.3h1.8v1.8h-1.8zM127.1 451.8h1.8v1.8h-1.8zM166.4 460.5h1.8v1.8h-1.8zM134.3 458.4h1.8v1.8h-1.8zM136.7 434.6h1.8v1.8h-1.8zM130.0 457.8h1.8v1.8h-1.8zM175.0 438.4h1.8v1.8h-1.8zM135.2 440.2h1.8v1.8h-1.8zM177.5 453.1h1.8v1.8h-1.8zM142.1 425.8h1.8v1.8h-1.8zM138.5 459.9h1.8v1.8h-1.8zM177.1 442.2h1.8v1.8h-1.8zM136.6 437.7h1.8v1.8h-1.8zM124.5 454.0h1.8v1.8h-1.8zM132.3 457.7h1.8v1.8h-1.8zM127.2 432.6h1.8v1.8h-1.8zM155.6 434.0h1.8v1.8h-1.8zM165.4 445.1h1.8v1.8h-1.8zM129.7 452.9h1.8v1.8h-1.8z"/><path fill="#dd3311" d="M239.5 442.8h1.8v1.8h-1.8zM252.0 464.8h1.8v1.8h-1.8zM238.8 442.8h1.8v1.8h-1.8zM218.2 455.4h1.8v1.8h-1.8zM243.3 445.5h1.8v1.8h-1.8zM220.5 442.5h1.8v1.8h-1.8zM225.8 464.8h1.8v1.8h-1.8zM208.9 454.1h1.8v1.8h-1.8zM236.6 476.5h1.8v1.8h-1.8zM241.0 456.0h1.8v1.8h-1.8zM213.9 449.8h1.8v1.8h-1.8zM218.9 462.0h1.8v1.8h-1.8z"/><path fill="#ff7722" d="M159.6 583.6h1.8v1.8h-1.8zM230.5 566.7h1.8v1.8h-1.8zM137.6 586.8h1.8v1.8h-1.8zM227.9 553.5h1.8v1.8h-1.8zM202.5 592.0h1.8v1.8h-1.8zM242.8 570.3h1.8v1.8h-1.8zM188.9 574.2h1.8v1.8h-1.8zM151.0 551.2h1.8v1.8h-1.8zM149.9 580.7h1.8v1.8h-1.8zM173.9 572.7h1.8v1.8h-1.8zM179.1 570.0h1.8v1.8h-1.8zM145.7 542.6h1.8v1.8h-1.8zM257.6 561.7h1.8v1.8h-1.8zM140.0 576.7h1.8v1.8h-1.8zM229.9 549.1h1.8v1.8h-1.8zM204.8 560.0h1.8v1.8h-1.8zM194.6 541.2h1.8v1.8h-1.8zM130.4 597.4h1.8v1.8h-1.8zM240.3 568.2h1.8v1.8h-1.8zM200.9 555.2h1.8v1.8h-1.8zM228.9 564.7h1.8v1.8h-1.8zM250.9 584.5h1.8v1.8h-1.8zM234.1 595.9h1.8v1.8h-1.8zM159.5 542.2h1.8v1.8h-1.8zM152.5 550.5h1.8v1.8h-1.8zM137.0 543.0h1.8v1.8h-1.8zM199.6 590.5h1.8v1.8h-1.8zM186.5 594.9h1.8v1.8h-1.8zM246.1 543.7h1.8v1.8h-1.8zM204.9 563.0h1.8v1.8h-1.8zM141.8 595.6h1.8v1.8h-1.8zM159.9 572.7h1.8v1.8h-1.8zM210.6 595.5h1.8v1.8h-1.8zM214.4 562.8h1.8v1.8h-1.8zM185.2 549.3h1.8v1.8h-1.8zM253.5 597.5h1.8v1.8h-1.8zM155.3 542.2h1.8v1.8h-1.8zM159.8 560.4h1.8v1.8h-1.8zM245.2 592.5h1.8v1.8h-1.8zM236.5 542.7h1.8v1.8h-1.8zM229.8 581.2h1.8v1.8h-1.8zM211.4 597.2h1.8v1.8h-1.8zM133.4 548.4h1.8v1.8h-1.8zM225.7 594.5h1.8v1.8h-1.8zM215.3 557.3h1.8v1.8h-1.8zM204.1 584.0h1.8v1.8h-1.8zM139.9 558.8h1.8v1.8h-1.8zM159.9 547.2h1.8v1.8h-1.8zM189.5 549.8h1.8v1.8h-1.8zM157.5 548.3h1.8v1.8h-1.8zM215.4 540.7h1.8v1.8h-1.8zM220.7 551.3h1.8v1.8h-1.8zM130.8 593.8h1.8v1.8h-1.8zM155.1 594.2h1.8v1.8h-1.8zM240.4 591.5h1.8v1.8h-1.8zM144.4 565.9h1.8v1.8h-1.8zM138.8 593.9h1.8v1.8h-1.8zM237.2 576.4h1.8v1.8h-1.8zM185.7 559.7h1.8v1.8h-1.8zM234.6 567.7h1.8v1.8h-1.8zM208.9 548.3h1.8v1.8h-1.8zM155.3 543.3h1.8v1.8h-1.8zM220.2 572.1h1.8v1.8h-1.8zM145.1 590.5h1.8v1.8h-1.8zM161.2 563.9h1.8v1.8h-1.8zM146.6 555.7h1.8v1.8h-1.8zM236.8 559.4h1.8v1.8h-1.8zM148.1 568.5h1.8v1.8h-1.8zM168.0 592.4h1.8v1.8h-1.8zM141.1 596.8h1.8v1.8h-1.8zM133.5 591.9h1.8v1.8h-1.8zM214.2 552.2h1.8v1.8h-1.8zM189.0 556.6h1.8v1.8h-1.8zM160.0 551.7h1.8v1.8h-1.8zM174.1 597.5h1.8v1.8h-1.8zM257.7 593.7h1.8v1.8h-1.8zM138.9 556.8h1.8v1.8h-1.8zM244.3 543.3h1.8v1.8h-1.8zM221.9 557.0h1.8v1.8h-1.8zM255.2 540.9h1.8v1.8h-1.8zM232.5 559.8h1.8v1.8h-1.8zM144.5 540.1h1.8v1.8h-1.8zM235.9 570.5h1.8v1.8h-1.8zM150.5 565.2h1.8v1.8h-1.8zM246.4 552.7h1.8v1.8h-1.8zM201.4 548.0h1.8v1.8h-1.8zM149.8 584.7h1.8v1.8h-1.8zM219.9 551.4h1.8v1.8h-1.8zM136.5 545.1h1.8v1.8h-1.8zM206.3 568.7h1.8v1.8h-1.8zM162.2 551.9h1.8v1.8h-1.8zM206.8 581.0h1.8v1.8h-1.8zM233.1 573.8h1.8v1.8h-1.8zM152.7 543.8h1.8v1.8h-1.8zM222.7 563.7h1.8v1.8h-1.8zM221.3 543.2h1.8v1.8h-1.8zM233.0 559.4h1.8v1.8h-1.8zM237.1 590.1h1.8v1.8h-1.8zM191.1 540.9h1.8v1.8h-1.8zM246.1 567.6h1.8v1.8h-1.8zM241.1 555.4h1.8v1.8h-1.8zM150.6 588.2h1.8v1.8h-1.8zM174.5 549.5h1.8v1.8h-1.8zM175.0 574.5h1.8v1.8h-1.8zM126.6 570.1h1.8v1.8h-1.8zM184.8 569.9h1.8v1.8h-1.8zM141.9 581.4h1.8v1.8h-1.8zM233.8 590.2h1.8v1.8h-1.8zM168.4 581.2h1.8v1.8h-1.8zM176.3 583.6h1.8v1.8h-1.8zM134.1 590.6h1.8v1.8h-1.8zM251.9 568.7h1.8v1.8h-1.8zM193.8 570.8h1.8v1.8h-1.8zM196.9 541.2h1.8v1.8h-1.8zM253.7 553.0h1.8v1.8h-1.8zM150.1 546.0h1.8v1.8h-1.8zM159.1 587.4h1.8v1.8h-1.8zM130.0 545.6h1.8v1.8h-1.8zM218.3 551.3h1.8v1.8h-1.8zM128.3 574.8h1.8v1.8h-1.8zM202.1 570.3h1.8v1.8h-1.8zM218.7 546.0h1.8v1.8h-1.8zM240.8 581.6h1.8v1.8h-1.8zM132.0 547.1h1.8v1.8h-1.8zM191.2 569.0h1.8v1.8h-1.8zM162.9 547.1h1.8v1.8h-1.8zM179.5 547.9h1.8v1.8h-1.8zM204.1 589.9h1.8v1.8h-1.8zM145.4 573.2h1.8v1.8h-1.8zM224.5 549.5h1.8v1.8h-1.8zM235.0 594.4h1.8v1.8h-1.8zM177.3 564.4h1.8v1.8h-1.8zM236.8 570.5h1.8v1.8h-1.8zM178.2 594.6h1.8v1.8h-1.8zM228.6 559.6h1.8v1.8h-1.8zM157.7 559.4h1.8v1.8h-1.8zM183.5 596.9h1.8v1.8h-1.8zM232.2 592.9h1.8v1.8h-1.8zM233.6 589.2h1.8v1.8h-1.8zM133.1 570.0h1.8v1.8h-1.8zM252.4 594.2h1.8v1.8h-1.8zM158.9 564.5h1.8v1.8h-1.8zM209.5 561.1h1.8v1.8h-1.8zM196.1 544.0h1.8v1.8h-1.8zM183.2 569.3h1.8v1.8h-1.8zM128.7 548.1h1.8v1.8h-1.8zM254.0 585.0h1.8v1.8h-1.8zM249.7 576.7h1.8v1.8h-1.8zM232.8 591.3h1.8v1.8h-1.8zM242.8 542.0h1.8v1.8h-1.8zM210.7 555.4h1.8v1.8h-1.8zM215.6 555.9h1.8v1.8h-1.8zM197.6 593.6h1.8v1.8h-1.8zM208.0 554.5h1.8v1.8h-1.8zM194.7 565.2h1.8v1.8h-1.8zM251.5 556.7h1.8v1.8h-1.8zM166.3 577.6h1.8v1.8h-1.8zM141.9 574.5h1.8v1.8h-1.8zM252.2 569.8h1.8v1.8h-1.8zM161.4 567.1h1.8v1.8h-1.8zM196.5 548.6h1.8v1.8h-1.8zM142.4 547.6h1.8v1.8h-1.8zM164.8 563.6h1.8v1.8h-1.8zM164.1 554.1h1.8v1.8h-1.8zM137.6 571.7h1.8v1.8h-1.8zM236.8 575.4h1.8v1.8h-1.8zM201.3 577.7h1.8v1.8h-1.8zM152.6 581.2h1.8v1.8h-1.8zM186.8 571.8h1.8v1.8h-1.8zM206.9 567.2h1.8v1.8h-1.8zM167.0 554.1h1.8v1.8h-1.8zM155.2 569.7h1.8v1.8h-1.8zM176.6 574.0h1.8v1.8h-1.8zM127.6 560.5h1.8v1.8h-1.8zM239.8 553.8h1.8v1.8h-1.8zM199.5 568.5h1.8v1.8h-1.8zM163.6 597.3h1.8v1.8h-1.8zM165.0 584.8h1.8v1.8h-1.8zM146.9 543.9h1.8v1.8h-1.8zM241.0 565.5h1.8v1.8h-1.8zM134.2 562.5h1.8v1.8h-1.8zM184.1 582.7h1.8v1.8h-1.8zM140.4 553.1h1.8v1.8h-1.8zM252.6 582.8h1.8v1.8h-1.8zM146.4 559.5h1.8v1.8h-1.8zM172.5 579.2h1.8v1.8h-1.8zM207.4 589.3h1.8v1.8h-1.8zM234.4 570.0h1.8v1.8h-1.8zM223.5 583.1h1.8v1.8h-1.8zM226.3 567.6h1.8v1.8h-1.8zM229.6 581.1h1.8v1.8h-1.8zM246.7 547.4h1.8v1.8h-1.8zM240.9 540.3h1.8v1.8h-1.8zM227.1 574.0h1.8v1.8h-1.8zM191.7 595.8h1.8v1.8h-1.8zM201.5 564.2h1.8v1.8h-1.8zM229.4 590.6h1.8v1.8h-1.8zM206.2 562.0h1.8v1.8h-1.8zM185.7 566.6h1.8v1.8h-1.8zM221.4 557.0h1.8v1.8h-1.8zM177.6 572.2h1.8v1.8h-1.8zM176.8 558.7h1.8v1.8h-1.8zM229.9 589.3h1.8v1.8h-1.8zM191.9 565.8h1.8v1.8h-1.8zM150.3 557.6h1.8v1.8h-1.8zM145.1 573.4h1.8v1.8h-1.8zM202.8 545.1h1.8v1.8h-1.8zM247.5 558.8h1.8v1.8h-1.8zM237.3 588.6h1.8v1.8h-1.8zM252.6 551.8h1.8v1.8h-1.8zM182.3 592.8h1.8v1.8h-1.8zM127.4 542.8h1.8v1.8h-1.8zM200.6 568.8h1.8v1.8h-1.8zM247.5 584.9h1.8v1.8h-1.8zM197.1 597.9h1.8v1.8h-1.8zM194.3 570.0h1.8v1.8h-1.8zM216.5 562.6h1.8v1.8h-1.8zM173.2 574.5h1.8v1.8h-1.8zM172.3 595.0h1.8v1.8h-1.8zM215.3 570.5h1.8v1.8h-1.8zM139.1 561.7h1.8v1.8h-1.8zM178.9 572.6h1.8v1.8h-1.8zM201.8 591.0h1.8v1.8h-1.8zM253.3 568.2h1.8v1.8h-1.8zM184.1 576.2h1.8v1.8h-1.8zM257.5 559.9h1.8v1.8h-1.8zM196.0 587.3h1.8v1.8h-1.8zM148.5 558.4h1.8v1.8h-1.8zM255.2 587.9h1.8v1.8h-1.8zM193.7 546.4h1.8v1.8h-1.8zM244.1 580.0h1.8v1.8h-1.8zM234.3 597.4h1.8v1.8h-1.8zM243.2 564.4h1.8v1.8h-1.8zM146.6 556.8h1.8v1.8h-1.8zM193.5 569.3h1.8v1.8h-1.8zM150.8 550.6h1.8v1.8h-1.8zM209.2 575.0h1.8v1.8h-1.8zM172.6 597.6h1.8v1.8h-1.8zM210.0 542.5h1.8v1.8h-1.8zM180.3 585.7h1.8v1.8h-1.8zM166.5 580.1h1.8v1.8h-1.8zM126.5 557.7h1.8v1.8h-1.8zM237.2 574.0h1.8v1.8h-1.8zM214.2 551.4h1.8v1.8h-1.8zM191.7 572.1h1.8v1.8h-1.8zM161.1 577.5h1.8v1.8h-1.8zM196.2 597.8h1.8v1.8h-1.8zM201.8 563.8h1.8v1.8h-1.8zM142.0 549.1h1.8v1.8h-1.8zM226.3 546.2h1.8v1.8h-1.8zM139.2 549.9h1.8v1.8h-1.8zM195.0 587.7h1.8v1.8h-1.8zM206.9 586.8h1.8v1.8h-1.8zM134.2 540.7h1.8v1.8h-1.8zM227.7 558.7h1.8v1.8h-1.8zM220.4 560.5h1.8v1.8h-1.8zM148.4 555.5h1.8v1.8h-1.8zM139.1 592.4h1.8v1.8h-1.8zM202.9 560.2h1.8v1.8h-1.8zM185.4 562.4h1.8v1.8h-1.8zM133.2 591.7h1.8v1.8h-1.8zM202.9 595.7h1.8v1.8h-1.8zM184.0 576.0h1.8v1.8h-1.8zM158.9 542.6h1.8v1.8h-1.8zM248.9 589.6h1.8v1.8h-1.8zM167.6 592.1h1.8v1.8h-1.8zM233.7 557.6h1.8v1.8h-1.8zM205.5 595.7h1.8v1.8h-1.8zM191.4 595.1h1.8v1.8h-1.8zM158.1 562.6h1.8v1.8h-1.8zM220.8 552.8h1.8v1.8h-1.8zM166.8 590.8h1.8v1.8h-1.8zM189.9 586.0h1.8v1.8h-1.8zM158.1 550.1h1.8v1.8h-1.8zM173.3 550.8h1.8v1.8h-1.8zM254.2 556.9h1.8v1.8h-1.8zM200.1 546.7h1.8v1.8h-1.8zM196.5 562.4h1.8v1.8h-1.8zM179.2 543.8h1.8v1.8h-1.8zM142.3 587.9h1.8v1.8h-1.8zM172.4 554.2h1.8v1.8h-1.8zM151.2 556.4h1.8v1.8h-1.8zM157.3 542.0h1.8v1.8h-1.8zM213.7 559.8h1.8v1.8h-1.8zM146.6 580.9h1.8v1.8h-1.8zM138.2 555.6h1.8v1.8h-1.8zM236.2 547.4h1.8v1.8h-1.8zM184.5 588.5h1.8v1.8h-1.8zM232.3 549.2h1.8v1.8h-1.8zM172.6 581.9h1.8v1.8h-1.8zM175.7 595.6h1.8v1.8h-1.8zM153.5 595.2h1.8v1.8h-1.8zM192.6 553.2h1.8v1.8h-1.8zM185.8 547.6h1.8v1.8h-1.8zM219.3 555.1h1.8v1.8h-1.8zM244.7 574.1h1.8v1.8h-1.8zM174.6 554.3h1.8v1.8h-1.8zM206.3 552.3h1.8v1.8h-1.8zM241.2 547.1h1.8v1.8h-1.8zM193.7 571.5h1.8v1.8h-1.8z"/><path fill="#cc7722" d="M161.7 630.9h1.8v1.8h-1.8zM176.8 626.3h1.8v1.8h-1.8zM200.9 612.4h1.8v1.8h-1.8zM177.5 603.4h1.8v1.8h-1.8zM149.4 634.0h1.8v1.8h-1.8zM168.4 626.5h1.8v1.8h-1.8zM140.4 622.5h1.8v1.8h-1.8zM173.7 620.0h1.8v1.8h-1.8zM165.2 602.6h1.8v1.8h-1.8zM167.1 609.1h1.8v1.8h-1.8zM142.6 628.7h1.8v1.8h-1.8zM163.3 616.1h1.8v1.8h-1.8zM246.0 631.0h1.8v1.8h-1.8zM242.5 634.5h1.8v1.8h-1.8zM143.4 611.1h1.8v1.8h-1.8zM129.9 627.2h1.8v1.8h-1.8zM213.6 614.1h1.8v1.8h-1.8zM180.5 626.4h1.8v1.8h-1.8zM218.3 609.9h1.8v1.8h-1.8zM237.8 614.1h1.8v1.8h-1.8zM209.0 607.3h1.8v1.8h-1.8zM141.2 636.5h1.8v1.8h-1.8zM222.9 628.5h1.8v1.8h-1.8zM131.3 601.6h1.8v1.8h-1.8zM147.4 607.9h1.8v1.8h-1.8zM166.0 615.2h1.8v1.8h-1.8zM131.2 612.4h1.8v1.8h-1.8zM210.3 607.2h1.8v1.8h-1.8zM236.8 622.8h1.8v1.8h-1.8zM220.6 610.2h1.8v1.8h-1.8zM183.4 627.4h1.8v1.8h-1.8zM172.1 600.0h1.8v1.8h-1.8zM236.1 631.1h1.8v1.8h-1.8zM163.8 601.7h1.8v1.8h-1.8zM238.7 624.3h1.8v1.8h-1.8zM132.2 609.8h1.8v1.8h-1.8zM140.7 631.7h1.8v1.8h-1.8zM153.7 636.6h1.8v1.8h-1.8zM224.9 603.4h1.8v1.8h-1.8zM217.7 615.7h1.8v1.8h-1.8zM224.7 633.1h1.8v1.8h-1.8zM163.1 603.6h1.8v1.8h-1.8zM250.9 617.0h1.8v1.8h-1.8zM248.8 627.7h1.8v1.8h-1.8zM223.5 633.2h1.8v1.8h-1.8zM208.9 618.1h1.8v1.8h-1.8zM133.2 627.9h1.8v1.8h-1.8zM182.5 620.5h1.8v1.8h-1.8zM248.5 605.1h1.8v1.8h-1.8zM226.6 601.7h1.8v1.8h-1.8zM218.8 632.2h1.8v1.8h-1.8zM160.5 621.9h1.8v1.8h-1.8zM254.0 625.5h1.8v1.8h-1.8zM197.8 610.0h1.8v1.8h-1.8zM133.8 614.3h1.8v1.8h-1.8zM180.3 608.1h1.8v1.8h-1.8zM167.0 605.5h1.8v1.8h-1.8zM219.3 626.8h1.8v1.8h-1.8zM157.4 609.7h1.8v1.8h-1.8zM194.0 617.8h1.8v1.8h-1.8zM249.5 614.1h1.8v1.8h-1.8zM165.5 635.4h1.8v1.8h-1.8zM144.7 622.5h1.8v1.8h-1.8zM170.0 632.6h1.8v1.8h-1.8zM198.4 630.4h1.8v1.8h-1.8zM148.3 626.7h1.8v1.8h-1.8zM205.0 618.4h1.8v1.8h-1.8zM227.1 633.2h1.8v1.8h-1.8zM141.1 611.6h1.8v1.8h-1.8zM173.6 608.3h1.8v1.8h-1.8z"/><path fill="#8c8c8c" d="M134.0 644.4h1.6v1.6h-1.6zM152.0 684.0h1.6v1.6h-1.6zM185.1 628.6h1.6v1.6h-1.6zM168.8 662.1h1.6v1.6h-1.6zM173.9 633.8h1.6v1.6h-1.6zM135.5 619.0h1.6v1.6h-1.6zM257.0 688.5h1.6v1.6h-1.6zM137.1 685.4h1.6v1.6h-1.6zM255.4 671.0h1.6v1.6h-1.6zM140.4 664.0h1.6v1.6h-1.6zM183.3 635.8h1.6v1.6h-1.6zM197.7 618.8h1.6v1.6h-1.6zM247.4 678.6h1.6v1.6h-1.6zM208.9 705.9h1.6v1.6h-1.6zM212.1 641.6h1.6v1.6h-1.6zM158.5 631.0h1.6v1.6h-1.6zM129.7 690.8h1.6v1.6h-1.6zM236.8 645.9h1.6v1.6h-1.6zM150.5 678.0h1.6v1.6h-1.6zM237.6 705.1h1.6v1.6h-1.6zM148.2 691.8h1.6v1.6h-1.6zM235.6 687.8h1.6v1.6h-1.6zM169.1 635.3h1.6v1.6h-1.6zM234.9 648.1h1.6v1.6h-1.6zM174.6 669.8h1.6v1.6h-1.6zM174.7 696.2h1.6v1.6h-1.6zM157.6 621.9h1.6v1.6h-1.6zM200.8 677.1h1.6v1.6h-1.6zM234.2 684.3h1.6v1.6h-1.6zM245.5 706.8h1.6v1.6h-1.6zM191.3 665.0h1.6v1.6h-1.6zM146.8 646.2h1.6v1.6h-1.6zM202.7 625.5h1.6v1.6h-1.6zM216.8 633.4h1.6v1.6h-1.6zM184.5 709.2h1.6v1.6h-1.6zM137.8 621.8h1.6v1.6h-1.6zM184.0 635.9h1.6v1.6h-1.6zM221.4 618.3h1.6v1.6h-1.6zM237.0 698.4h1.6v1.6h-1.6zM229.9 658.0h1.6v1.6h-1.6zM163.4 680.2h1.6v1.6h-1.6zM193.9 657.6h1.6v1.6h-1.6zM170.7 659.2h1.6v1.6h-1.6zM213.9 695.7h1.6v1.6h-1.6zM245.3 633.5h1.6v1.6h-1.6zM165.0 659.7h1.6v1.6h-1.6zM200.4 650.7h1.6v1.6h-1.6zM151.8 626.0h1.6v1.6h-1.6zM168.7 661.3h1.6v1.6h-1.6zM254.2 703.4h1.6v1.6h-1.6zM240.2 709.6h1.6v1.6h-1.6zM253.0 676.3h1.6v1.6h-1.6zM233.1 623.6h1.6v1.6h-1.6zM215.3 675.3h1.6v1.6h-1.6zM165.2 671.7h1.6v1.6h-1.6zM251.8 663.2h1.6v1.6h-1.6zM211.5 646.1h1.6v1.6h-1.6zM171.3 701.2h1.6v1.6h-1.6zM129.7 635.8h1.6v1.6h-1.6zM215.6 660.1h1.6v1.6h-1.6zM137.2 680.1h1.6v1.6h-1.6zM175.1 672.6h1.6v1.6h-1.6zM181.0 667.8h1.6v1.6h-1.6zM200.6 655.3h1.6v1.6h-1.6zM141.1 635.0h1.6v1.6h-1.6zM243.5 669.5h1.6v1.6h-1.6zM140.8 699.0h1.6v1.6h-1.6zM159.5 626.9h1.6v1.6h-1.6zM196.1 641.6h1.6v1.6h-1.6zM190.6 670.1h1.6v1.6h-1.6zM155.9 671.8h1.6v1.6h-1.6zM140.9 666.2h1.6v1.6h-1.6zM203.7 625.5h1.6v1.6h-1.6zM179.9 624.9h1.6v1.6h-1.6zM184.0 699.2h1.6v1.6h-1.6zM198.7 685.2h1.6v1.6h-1.6zM225.9 628.8h1.6v1.6h-1.6zM256.8 685.8h1.6v1.6h-1.6zM139.5 696.0h1.6v1.6h-1.6zM177.7 634.1h1.6v1.6h-1.6zM252.7 670.9h1.6v1.6h-1.6zM228.3 630.9h1.6v1.6h-1.6zM228.5 623.4h1.6v1.6h-1.6zM157.3 653.0h1.6v1.6h-1.6zM128.0 673.9h1.6v1.6h-1.6zM154.1 646.2h1.6v1.6h-1.6zM219.4 658.0h1.6v1.6h-1.6zM243.3 676.4h1.6v1.6h-1.6zM241.1 670.9h1.6v1.6h-1.6zM247.1 699.9h1.6v1.6h-1.6zM148.2 688.1h1.6v1.6h-1.6zM171.1 689.8h1.6v1.6h-1.6zM215.8 695.6h1.6v1.6h-1.6zM142.2 653.1h1.6v1.6h-1.6zM223.3 707.1h1.6v1.6h-1.6zM221.3 622.1h1.6v1.6h-1.6zM205.7 627.4h1.6v1.6h-1.6zM198.4 693.5h1.6v1.6h-1.6zM140.9 705.0h1.6v1.6h-1.6zM215.1 641.9h1.6v1.6h-1.6zM151.5 660.0h1.6v1.6h-1.6zM236.6 672.6h1.6v1.6h-1.6zM141.0 620.0h1.6v1.6h-1.6zM140.6 693.3h1.6v1.6h-1.6zM150.5 670.1h1.6v1.6h-1.6zM164.3 682.6h1.6v1.6h-1.6zM176.3 631.6h1.6v1.6h-1.6zM241.6 668.6h1.6v1.6h-1.6zM217.0 694.0h1.6v1.6h-1.6zM251.2 619.3h1.6v1.6h-1.6zM171.2 632.2h1.6v1.6h-1.6zM192.2 700.1h1.6v1.6h-1.6zM231.7 621.3h1.6v1.6h-1.6zM150.1 694.9h1.6v1.6h-1.6zM215.7 654.9h1.6v1.6h-1.6zM188.8 632.9h1.6v1.6h-1.6zM237.6 655.0h1.6v1.6h-1.6zM241.2 675.4h1.6v1.6h-1.6zM136.0 649.0h1.6v1.6h-1.6zM154.6 702.0h1.6v1.6h-1.6zM203.8 622.1h1.6v1.6h-1.6zM148.4 651.9h1.6v1.6h-1.6zM187.7 672.2h1.6v1.6h-1.6zM177.2 651.2h1.6v1.6h-1.6zM126.8 672.4h1.6v1.6h-1.6zM170.1 619.9h1.6v1.6h-1.6zM186.6 710.7h1.6v1.6h-1.6zM132.0 631.7h1.6v1.6h-1.6zM214.6 643.6h1.6v1.6h-1.6zM162.1 665.0h1.6v1.6h-1.6zM160.6 671.5h1.6v1.6h-1.6zM195.7 708.0h1.6v1.6h-1.6zM257.0 621.2h1.6v1.6h-1.6zM200.0 690.5h1.6v1.6h-1.6zM241.2 690.8h1.6v1.6h-1.6zM209.6 677.7h1.6v1.6h-1.6zM173.9 644.5h1.6v1.6h-1.6zM231.0 700.0h1.6v1.6h-1.6zM249.9 682.0h1.6v1.6h-1.6zM166.1 689.8h1.6v1.6h-1.6zM223.6 665.8h1.6v1.6h-1.6zM209.8 650.9h1.6v1.6h-1.6zM198.7 656.2h1.6v1.6h-1.6zM134.0 649.7h1.6v1.6h-1.6zM168.7 710.9h1.6v1.6h-1.6zM189.6 652.5h1.6v1.6h-1.6zM158.1 640.1h1.6v1.6h-1.6zM172.1 630.7h1.6v1.6h-1.6zM127.0 699.9h1.6v1.6h-1.6zM185.8 659.9h1.6v1.6h-1.6zM201.1 646.4h1.6v1.6h-1.6zM148.3 624.2h1.6v1.6h-1.6zM165.8 647.0h1.6v1.6h-1.6zM221.9 669.8h1.6v1.6h-1.6zM249.7 650.0h1.6v1.6h-1.6zM247.6 672.8h1.6v1.6h-1.6zM136.6 634.8h1.6v1.6h-1.6zM202.6 710.8h1.6v1.6h-1.6zM173.1 690.8h1.6v1.6h-1.6zM182.5 699.6h1.6v1.6h-1.6zM134.9 663.5h1.6v1.6h-1.6zM244.7 643.9h1.6v1.6h-1.6zM160.0 620.2h1.6v1.6h-1.6zM147.7 643.2h1.6v1.6h-1.6zM219.0 638.5h1.6v1.6h-1.6zM178.7 636.8h1.6v1.6h-1.6zM205.6 699.2h1.6v1.6h-1.6zM211.5 636.5h1.6v1.6h-1.6zM222.9 708.5h1.6v1.6h-1.6zM205.3 625.5h1.6v1.6h-1.6zM232.9 700.3h1.6v1.6h-1.6zM171.0 630.8h1.6v1.6h-1.6zM150.8 668.5h1.6v1.6h-1.6zM241.6 678.1h1.6v1.6h-1.6zM247.8 637.9h1.6v1.6h-1.6zM169.1 688.4h1.6v1.6h-1.6zM211.7 656.1h1.6v1.6h-1.6zM215.6 649.8h1.6v1.6h-1.6zM133.6 656.9h1.6v1.6h-1.6zM132.0 676.9h1.6v1.6h-1.6zM170.2 664.5h1.6v1.6h-1.6zM204.9 642.2h1.6v1.6h-1.6zM187.2 619.3h1.6v1.6h-1.6zM248.1 671.0h1.6v1.6h-1.6zM256.4 623.3h1.6v1.6h-1.6zM207.0 686.1h1.6v1.6h-1.6zM169.4 626.8h1.6v1.6h-1.6zM146.6 631.4h1.6v1.6h-1.6zM227.3 626.4h1.6v1.6h-1.6zM233.5 657.8h1.6v1.6h-1.6zM197.1 673.3h1.6v1.6h-1.6zM199.3 679.8h1.6v1.6h-1.6zM205.4 649.1h1.6v1.6h-1.6zM223.8 642.2h1.6v1.6h-1.6zM219.9 689.8h1.6v1.6h-1.6zM228.4 647.1h1.6v1.6h-1.6zM228.0 709.9h1.6v1.6h-1.6zM185.8 644.2h1.6v1.6h-1.6zM195.1 706.4h1.6v1.6h-1.6zM143.4 618.8h1.6v1.6h-1.6zM188.8 679.6h1.6v1.6h-1.6zM228.2 652.1h1.6v1.6h-1.6zM256.6 639.4h1.6v1.6h-1.6zM225.9 626.5h1.6v1.6h-1.6zM129.7 630.6h1.6v1.6h-1.6zM133.9 665.2h1.6v1.6h-1.6zM199.3 635.1h1.6v1.6h-1.6zM250.0 652.4h1.6v1.6h-1.6zM145.7 634.7h1.6v1.6h-1.6zM223.4 704.6h1.6v1.6h-1.6zM147.4 620.7h1.6v1.6h-1.6zM228.7 640.8h1.6v1.6h-1.6zM255.7 664.9h1.6v1.6h-1.6zM210.0 650.4h1.6v1.6h-1.6zM231.7 661.2h1.6v1.6h-1.6zM168.7 702.9h1.6v1.6h-1.6zM140.2 686.9h1.6v1.6h-1.6zM134.6 678.7h1.6v1.6h-1.6zM179.0 699.2h1.6v1.6h-1.6zM133.9 671.0h1.6v1.6h-1.6zM180.1 704.4h1.6v1.6h-1.6zM250.7 676.9h1.6v1.6h-1.6zM155.6 641.7h1.6v1.6h-1.6zM160.6 658.8h1.6v1.6h-1.6zM156.5 637.1h1.6v1.6h-1.6zM226.2 678.4h1.6v1.6h-1.6zM165.4 711.5h1.6v1.6h-1.6zM154.6 671.5h1.6v1.6h-1.6zM146.7 699.1h1.6v1.6h-1.6zM240.7 643.1h1.6v1.6h-1.6zM225.2 695.3h1.6v1.6h-1.6zM163.3 649.2h1.6v1.6h-1.6zM190.1 701.8h1.6v1.6h-1.6zM147.3 682.2h1.6v1.6h-1.6zM204.9 660.6h1.6v1.6h-1.6zM202.5 701.0h1.6v1.6h-1.6zM153.7 701.1h1.6v1.6h-1.6zM173.6 691.3h1.6v1.6h-1.6zM240.0 635.1h1.6v1.6h-1.6zM240.0 711.5h1.6v1.6h-1.6zM165.3 620.3h1.6v1.6h-1.6zM140.7 709.6h1.6v1.6h-1.6zM127.2 703.7h1.6v1.6h-1.6zM145.9 687.2h1.6v1.6h-1.6zM138.9 633.9h1.6v1.6h-1.6zM216.1 626.5h1.6v1.6h-1.6zM170.8 704.3h1.6v1.6h-1.6zM220.6 700.9h1.6v1.6h-1.6zM255.3 621.1h1.6v1.6h-1.6zM157.0 692.5h1.6v1.6h-1.6zM217.0 621.6h1.6v1.6h-1.6zM192.6 639.8h1.6v1.6h-1.6zM182.8 627.9h1.6v1.6h-1.6zM128.6 711.1h1.6v1.6h-1.6zM167.8 700.6h1.6v1.6h-1.6zM141.9 663.8h1.6v1.6h-1.6zM143.9 658.3h1.6v1.6h-1.6zM149.6 682.4h1.6v1.6h-1.6zM145.5 687.4h1.6v1.6h-1.6zM192.1 628.6h1.6v1.6h-1.6zM172.7 664.6h1.6v1.6h-1.6zM247.3 650.8h1.6v1.6h-1.6zM154.4 708.9h1.6v1.6h-1.6zM242.6 686.8h1.6v1.6h-1.6zM162.0 634.7h1.6v1.6h-1.6zM160.9 624.5h1.6v1.6h-1.6zM131.7 665.8h1.6v1.6h-1.6zM179.9 670.3h1.6v1.6h-1.6zM173.9 619.0h1.6v1.6h-1.6zM216.8 679.4h1.6v1.6h-1.6zM197.8 669.6h1.6v1.6h-1.6zM217.1 710.3h1.6v1.6h-1.6zM241.4 685.5h1.6v1.6h-1.6zM178.7 647.9h1.6v1.6h-1.6zM181.3 709.5h1.6v1.6h-1.6zM177.1 654.2h1.6v1.6h-1.6zM180.1 631.4h1.6v1.6h-1.6zM257.8 618.5h1.6v1.6h-1.6zM206.2 705.1h1.6v1.6h-1.6zM159.6 675.4h1.6v1.6h-1.6zM175.8 640.6h1.6v1.6h-1.6zM152.2 628.9h1.6v1.6h-1.6zM237.3 691.7h1.6v1.6h-1.6zM245.9 622.7h1.6v1.6h-1.6zM217.6 648.5h1.6v1.6h-1.6zM211.3 669.6h1.6v1.6h-1.6zM167.7 709.3h1.6v1.6h-1.6zM126.1 688.1h1.6v1.6h-1.6zM238.7 666.0h1.6v1.6h-1.6zM204.2 711.5h1.6v1.6h-1.6zM156.9 677.2h1.6v1.6h-1.6zM224.1 653.6h1.6v1.6h-1.6zM220.0 655.0h1.6v1.6h-1.6zM195.5 675.6h1.6v1.6h-1.6zM215.4 648.3h1.6v1.6h-1.6zM209.0 669.0h1.6v1.6h-1.6zM155.5 675.6h1.6v1.6h-1.6zM161.0 703.4h1.6v1.6h-1.6zM188.5 685.8h1.6v1.6h-1.6zM194.9 662.8h1.6v1.6h-1.6zM155.2 631.4h1.6v1.6h-1.6zM248.4 667.7h1.6v1.6h-1.6zM195.2 667.6h1.6v1.6h-1.6zM233.4 640.4h1.6v1.6h-1.6zM148.8 695.3h1.6v1.6h-1.6zM186.8 678.2h1.6v1.6h-1.6zM235.2 702.0h1.6v1.6h-1.6zM240.5 622.1h1.6v1.6h-1.6zM176.3 696.2h1.6v1.6h-1.6zM233.9 629.6h1.6v1.6h-1.6zM146.3 641.6h1.6v1.6h-1.6zM139.6 651.5h1.6v1.6h-1.6zM232.0 667.0h1.6v1.6h-1.6zM185.8 626.3h1.6v1.6h-1.6zM178.2 711.7h1.6v1.6h-1.6zM217.7 660.2h1.6v1.6h-1.6zM189.1 693.0h1.6v1.6h-1.6zM226.2 632.1h1.6v1.6h-1.6zM215.8 652.5h1.6v1.6h-1.6zM194.7 640.3h1.6v1.6h-1.6zM174.9 650.0h1.6v1.6h-1.6zM176.3 619.7h1.6v1.6h-1.6zM152.5 671.6h1.6v1.6h-1.6zM133.6 634.8h1.6v1.6h-1.6zM220.8 643.8h1.6v1.6h-1.6zM168.8 640.7h1.6v1.6h-1.6zM236.1 626.6h1.6v1.6h-1.6zM210.0 698.7h1.6v1.6h-1.6zM152.6 657.8h1.6v1.6h-1.6zM230.6 676.1h1.6v1.6h-1.6z"/><path fill="#707070" d="M147.7 814.2h1.6v1.6h-1.6zM135.0 816.0h1.6v1.6h-1.6zM148.2 795.2h1.6v1.6h-1.6zM131.8 822.3h1.6v1.6h-1.6zM158.6 794.6h1.6v1.6h-1.6zM134.8 824.1h1.6v1.6h-1.6zM163.7 804.4h1.6v1.6h-1.6zM176.9 805.8h1.6v1.6h-1.6zM135.0 826.4h1.6v1.6h-1.6zM148.2 816.5h1.6v1.6h-1.6zM152.7 792.8h1.6v1.6h-1.6zM131.1 806.8h1.6v1.6h-1.6zM173.2 795.8h1.6v1.6h-1.6zM174.8 813.5h1.6v1.6h-1.6zM132.2 814.4h1.6v1.6h-1.6zM162.3 794.7h1.6v1.6h-1.6zM124.1 814.4h1.6v1.6h-1.6zM132.5 817.2h1.6v1.6h-1.6zM124.8 808.1h1.6v1.6h-1.6zM139.6 788.9h1.6v1.6h-1.6zM147.1 813.3h1.6v1.6h-1.6zM142.5 791.2h1.6v1.6h-1.6zM155.2 785.6h1.6v1.6h-1.6zM162.4 818.9h1.6v1.6h-1.6zM176.0 821.8h1.6v1.6h-1.6zM159.2 815.0h1.6v1.6h-1.6zM152.5 789.0h1.6v1.6h-1.6zM175.3 817.8h1.6v1.6h-1.6zM147.0 791.1h1.6v1.6h-1.6zM175.5 817.9h1.6v1.6h-1.6zM132.1 820.6h1.6v1.6h-1.6zM179.1 809.7h1.6v1.6h-1.6zM159.9 802.3h1.6v1.6h-1.6zM141.1 827.4h1.6v1.6h-1.6zM181.8 811.1h1.6v1.6h-1.6zM149.6 824.2h1.6v1.6h-1.6zM146.2 823.0h1.6v1.6h-1.6zM166.1 793.8h1.6v1.6h-1.6zM132.6 808.7h1.6v1.6h-1.6zM167.7 814.9h1.6v1.6h-1.6zM170.0 791.4h1.6v1.6h-1.6zM161.4 798.9h1.6v1.6h-1.6zM154.0 816.1h1.6v1.6h-1.6zM134.1 806.1h1.6v1.6h-1.6zM131.5 814.4h1.6v1.6h-1.6z"/><path fill="#787878" d="M305.6 752.9h1.6v1.6h-1.6zM362.1 749.3h1.6v1.6h-1.6zM405.4 751.1h1.6v1.6h-1.6zM395.2 767.3h1.6v1.6h-1.6zM296.8 758.0h1.6v1.6h-1.6zM305.6 755.2h1.6v1.6h-1.6zM338.8 788.5h1.6v1.6h-1.6zM331.5 786.4h1.6v1.6h-1.6zM371.2 740.2h1.6v1.6h-1.6zM271.1 770.2h1.6v1.6h-1.6zM275.1 771.5h1.6v1.6h-1.6zM402.3 769.0h1.6v1.6h-1.6zM337.9 756.9h1.6v1.6h-1.6zM364.8 755.9h1.6v1.6h-1.6zM320.3 754.8h1.6v1.6h-1.6zM406.2 751.5h1.6v1.6h-1.6zM368.8 741.9h1.6v1.6h-1.6zM317.8 740.1h1.6v1.6h-1.6zM339.1 775.2h1.6v1.6h-1.6zM367.1 752.3h1.6v1.6h-1.6zM383.6 755.3h1.6v1.6h-1.6zM371.1 767.5h1.6v1.6h-1.6zM367.7 733.4h1.6v1.6h-1.6zM290.7 774.4h1.6v1.6h-1.6zM346.1 790.5h1.6v1.6h-1.6zM336.9 751.1h1.6v1.6h-1.6zM416.5 770.7h1.6v1.6h-1.6zM425.1 769.1h1.6v1.6h-1.6zM338.9 775.9h1.6v1.6h-1.6zM308.3 753.6h1.6v1.6h-1.6zM319.0 757.6h1.6v1.6h-1.6zM391.2 753.0h1.6v1.6h-1.6zM368.0 752.2h1.6v1.6h-1.6zM375.7 733.7h1.6v1.6h-1.6zM338.0 765.4h1.6v1.6h-1.6zM300.4 778.4h1.6v1.6h-1.6zM360.5 783.9h1.6v1.6h-1.6zM398.2 773.3h1.6v1.6h-1.6zM342.4 742.5h1.6v1.6h-1.6zM337.6 752.8h1.6v1.6h-1.6zM364.1 752.8h1.6v1.6h-1.6zM425.2 748.1h1.6v1.6h-1.6zM407.3 753.9h1.6v1.6h-1.6zM337.3 779.1h1.6v1.6h-1.6zM350.1 740.9h1.6v1.6h-1.6zM373.4 758.1h1.6v1.6h-1.6zM271.4 764.7h1.6v1.6h-1.6zM298.9 749.3h1.6v1.6h-1.6zM377.0 767.9h1.6v1.6h-1.6zM339.3 790.1h1.6v1.6h-1.6zM372.9 750.2h1.6v1.6h-1.6zM363.6 759.5h1.6v1.6h-1.6zM282.0 744.8h1.6v1.6h-1.6zM303.9 786.2h1.6v1.6h-1.6zM339.5 756.4h1.6v1.6h-1.6zM321.6 779.4h1.6v1.6h-1.6zM351.2 787.8h1.6v1.6h-1.6zM382.6 786.0h1.6v1.6h-1.6zM343.3 769.5h1.6v1.6h-1.6zM325.5 758.6h1.6v1.6h-1.6zM278.5 753.5h1.6v1.6h-1.6zM302.4 750.5h1.6v1.6h-1.6zM409.5 766.5h1.6v1.6h-1.6zM406.0 775.8h1.6v1.6h-1.6zM393.7 778.8h1.6v1.6h-1.6zM318.7 776.7h1.6v1.6h-1.6zM332.1 751.6h1.6v1.6h-1.6zM389.9 787.5h1.6v1.6h-1.6zM311.7 786.0h1.6v1.6h-1.6zM391.2 747.2h1.6v1.6h-1.6zM365.4 769.4h1.6v1.6h-1.6zM371.1 754.9h1.6v1.6h-1.6zM287.8 762.5h1.6v1.6h-1.6zM393.0 775.8h1.6v1.6h-1.6zM382.0 780.8h1.6v1.6h-1.6zM298.6 761.2h1.6v1.6h-1.6zM367.4 780.0h1.6v1.6h-1.6zM358.7 772.2h1.6v1.6h-1.6zM355.0 790.0h1.6v1.6h-1.6zM269.8 761.7h1.6v1.6h-1.6zM432.2 764.8h1.6v1.6h-1.6zM274.6 763.9h1.6v1.6h-1.6zM286.2 751.3h1.6v1.6h-1.6zM359.6 787.8h1.6v1.6h-1.6zM374.9 774.7h1.6v1.6h-1.6zM402.3 765.6h1.6v1.6h-1.6zM304.4 760.2h1.6v1.6h-1.6zM369.1 756.5h1.6v1.6h-1.6zM313.8 755.1h1.6v1.6h-1.6zM287.8 747.0h1.6v1.6h-1.6zM344.8 754.7h1.6v1.6h-1.6zM351.8 785.2h1.6v1.6h-1.6zM367.2 761.3h1.6v1.6h-1.6zM297.9 745.1h1.6v1.6h-1.6zM369.6 745.9h1.6v1.6h-1.6zM371.4 743.1h1.6v1.6h-1.6zM357.8 760.5h1.6v1.6h-1.6zM400.8 754.9h1.6v1.6h-1.6zM329.0 766.9h1.6v1.6h-1.6zM352.4 787.7h1.6v1.6h-1.6zM335.7 751.5h1.6v1.6h-1.6zM332.2 771.3h1.6v1.6h-1.6zM362.7 775.3h1.6v1.6h-1.6zM309.1 787.9h1.6v1.6h-1.6zM425.6 761.5h1.6v1.6h-1.6zM290.5 764.7h1.6v1.6h-1.6zM364.8 733.9h1.6v1.6h-1.6zM350.6 738.1h1.6v1.6h-1.6zM371.2 784.5h1.6v1.6h-1.6zM392.7 740.1h1.6v1.6h-1.6zM410.2 775.9h1.6v1.6h-1.6zM330.0 771.8h1.6v1.6h-1.6zM418.1 756.7h1.6v1.6h-1.6zM349.1 751.0h1.6v1.6h-1.6zM388.9 736.4h1.6v1.6h-1.6zM410.6 747.4h1.6v1.6h-1.6zM387.7 738.7h1.6v1.6h-1.6zM302.7 751.4h1.6v1.6h-1.6zM384.3 738.3h1.6v1.6h-1.6zM382.0 750.1h1.6v1.6h-1.6zM410.1 756.7h1.6v1.6h-1.6zM377.3 758.6h1.6v1.6h-1.6zM424.0 756.8h1.6v1.6h-1.6zM349.0 789.5h1.6v1.6h-1.6zM354.2 775.3h1.6v1.6h-1.6zM310.1 765.8h1.6v1.6h-1.6zM269.1 763.3h1.6v1.6h-1.6zM321.7 738.8h1.6v1.6h-1.6zM291.4 778.7h1.6v1.6h-1.6zM369.0 738.1h1.6v1.6h-1.6zM422.1 752.2h1.6v1.6h-1.6zM329.1 766.9h1.6v1.6h-1.6zM305.3 739.6h1.6v1.6h-1.6zM315.0 781.6h1.6v1.6h-1.6zM389.1 739.1h1.6v1.6h-1.6zM409.4 762.6h1.6v1.6h-1.6zM378.1 763.0h1.6v1.6h-1.6zM371.0 744.1h1.6v1.6h-1.6zM304.5 749.6h1.6v1.6h-1.6zM329.9 773.9h1.6v1.6h-1.6zM302.6 783.9h1.6v1.6h-1.6zM316.4 751.0h1.6v1.6h-1.6zM387.7 770.2h1.6v1.6h-1.6zM332.9 743.0h1.6v1.6h-1.6zM309.5 739.2h1.6v1.6h-1.6zM401.0 779.1h1.6v1.6h-1.6zM424.5 769.0h1.6v1.6h-1.6zM367.8 776.3h1.6v1.6h-1.6zM399.4 757.3h1.6v1.6h-1.6zM362.9 789.9h1.6v1.6h-1.6zM288.2 743.9h1.6v1.6h-1.6zM302.7 775.1h1.6v1.6h-1.6zM408.2 756.1h1.6v1.6h-1.6zM386.9 761.1h1.6v1.6h-1.6zM366.6 751.4h1.6v1.6h-1.6zM348.4 761.9h1.6v1.6h-1.6zM387.4 788.0h1.6v1.6h-1.6zM276.6 769.6h1.6v1.6h-1.6zM349.7 779.8h1.6v1.6h-1.6zM400.9 775.2h1.6v1.6h-1.6zM389.5 745.6h1.6v1.6h-1.6zM291.5 782.2h1.6v1.6h-1.6zM404.5 746.8h1.6v1.6h-1.6zM409.7 772.9h1.6v1.6h-1.6zM271.9 772.1h1.6v1.6h-1.6zM305.3 780.6h1.6v1.6h-1.6zM314.8 748.4h1.6v1.6h-1.6zM280.8 758.6h1.6v1.6h-1.6zM400.1 750.3h1.6v1.6h-1.6zM295.0 784.4h1.6v1.6h-1.6z"/><path fill="#787878" d="M521.3 771.2h1.6v1.6h-1.6zM451.8 736.1h1.6v1.6h-1.6zM420.8 769.8h1.6v1.6h-1.6zM509.7 741.1h1.6v1.6h-1.6zM470.0 753.4h1.6v1.6h-1.6zM459.9 771.5h1.6v1.6h-1.6zM524.2 750.4h1.6v1.6h-1.6zM498.3 781.1h1.6v1.6h-1.6zM458.5 756.5h1.6v1.6h-1.6zM429.6 779.0h1.6v1.6h-1.6zM450.0 745.6h1.6v1.6h-1.6zM472.5 741.2h1.6v1.6h-1.6zM432.6 753.8h1.6v1.6h-1.6zM517.9 756.1h1.6v1.6h-1.6zM486.7 732.9h1.6v1.6h-1.6zM427.0 783.4h1.6v1.6h-1.6zM457.5 731.8h1.6v1.6h-1.6zM465.9 773.9h1.6v1.6h-1.6zM421.4 745.5h1.6v1.6h-1.6zM479.6 740.1h1.6v1.6h-1.6zM497.5 779.4h1.6v1.6h-1.6zM487.3 750.2h1.6v1.6h-1.6zM468.2 745.6h1.6v1.6h-1.6zM464.7 767.5h1.6v1.6h-1.6zM459.1 780.7h1.6v1.6h-1.6zM527.6 752.9h1.6v1.6h-1.6zM482.8 778.0h1.6v1.6h-1.6zM495.0 754.6h1.6v1.6h-1.6zM452.9 780.9h1.6v1.6h-1.6zM493.8 771.2h1.6v1.6h-1.6zM440.7 773.4h1.6v1.6h-1.6zM500.2 755.9h1.6v1.6h-1.6zM486.3 792.0h1.6v1.6h-1.6zM417.8 769.8h1.6v1.6h-1.6zM435.5 736.6h1.6v1.6h-1.6zM460.7 772.5h1.6v1.6h-1.6zM471.8 736.0h1.6v1.6h-1.6zM424.2 749.7h1.6v1.6h-1.6zM470.5 741.6h1.6v1.6h-1.6zM432.6 785.5h1.6v1.6h-1.6zM438.3 756.6h1.6v1.6h-1.6zM449.1 747.0h1.6v1.6h-1.6zM471.6 752.9h1.6v1.6h-1.6zM490.9 736.7h1.6v1.6h-1.6zM434.7 787.0h1.6v1.6h-1.6zM467.1 777.2h1.6v1.6h-1.6zM510.2 771.0h1.6v1.6h-1.6zM471.2 731.2h1.6v1.6h-1.6zM424.0 776.4h1.6v1.6h-1.6zM495.4 772.5h1.6v1.6h-1.6zM433.8 732.8h1.6v1.6h-1.6zM436.7 738.3h1.6v1.6h-1.6zM475.8 738.3h1.6v1.6h-1.6zM518.1 749.0h1.6v1.6h-1.6zM449.5 778.4h1.6v1.6h-1.6zM482.2 740.6h1.6v1.6h-1.6zM492.0 790.0h1.6v1.6h-1.6zM427.5 755.0h1.6v1.6h-1.6zM442.4 730.9h1.6v1.6h-1.6zM493.3 775.2h1.6v1.6h-1.6zM505.3 769.1h1.6v1.6h-1.6zM414.6 759.6h1.6v1.6h-1.6zM447.5 736.9h1.6v1.6h-1.6zM432.6 775.1h1.6v1.6h-1.6zM461.8 791.8h1.6v1.6h-1.6zM483.2 728.9h1.6v1.6h-1.6zM498.6 783.3h1.6v1.6h-1.6zM471.1 735.2h1.6v1.6h-1.6zM515.7 740.2h1.6v1.6h-1.6zM467.6 728.3h1.6v1.6h-1.6zM436.6 733.6h1.6v1.6h-1.6zM504.2 781.6h1.6v1.6h-1.6zM456.6 733.8h1.6v1.6h-1.6zM467.6 769.0h1.6v1.6h-1.6zM426.6 740.8h1.6v1.6h-1.6zM466.0 776.0h1.6v1.6h-1.6zM473.0 770.6h1.6v1.6h-1.6zM443.4 729.1h1.6v1.6h-1.6zM481.6 740.1h1.6v1.6h-1.6zM465.0 751.1h1.6v1.6h-1.6zM488.1 743.1h1.6v1.6h-1.6zM517.6 760.6h1.6v1.6h-1.6zM490.2 774.1h1.6v1.6h-1.6zM507.3 768.5h1.6v1.6h-1.6zM419.3 749.4h1.6v1.6h-1.6zM522.9 767.8h1.6v1.6h-1.6zM491.8 770.6h1.6v1.6h-1.6zM446.0 745.2h1.6v1.6h-1.6zM447.9 783.0h1.6v1.6h-1.6zM480.7 790.5h1.6v1.6h-1.6zM484.0 791.0h1.6v1.6h-1.6zM485.9 736.1h1.6v1.6h-1.6zM522.0 765.9h1.6v1.6h-1.6zM511.9 764.4h1.6v1.6h-1.6zM456.6 764.0h1.6v1.6h-1.6zM435.0 738.3h1.6v1.6h-1.6zM437.3 748.7h1.6v1.6h-1.6zM424.1 758.0h1.6v1.6h-1.6zM478.3 792.2h1.6v1.6h-1.6zM523.8 759.2h1.6v1.6h-1.6zM503.4 755.2h1.6v1.6h-1.6zM486.0 759.2h1.6v1.6h-1.6zM448.3 761.8h1.6v1.6h-1.6zM422.5 768.2h1.6v1.6h-1.6zM459.5 737.2h1.6v1.6h-1.6zM455.8 772.8h1.6v1.6h-1.6zM443.9 770.7h1.6v1.6h-1.6zM487.7 788.2h1.6v1.6h-1.6zM430.5 757.6h1.6v1.6h-1.6zM486.2 787.8h1.6v1.6h-1.6zM480.2 777.0h1.6v1.6h-1.6zM423.3 749.2h1.6v1.6h-1.6zM521.1 754.9h1.6v1.6h-1.6zM524.5 749.3h1.6v1.6h-1.6zM461.3 730.8h1.6v1.6h-1.6zM495.1 766.1h1.6v1.6h-1.6zM525.6 762.7h1.6v1.6h-1.6zM461.7 732.6h1.6v1.6h-1.6zM466.9 780.8h1.6v1.6h-1.6zM494.6 783.8h1.6v1.6h-1.6zM503.1 759.0h1.6v1.6h-1.6zM494.1 764.0h1.6v1.6h-1.6zM435.1 786.2h1.6v1.6h-1.6zM483.6 737.8h1.6v1.6h-1.6zM485.7 766.8h1.6v1.6h-1.6zM500.0 785.4h1.6v1.6h-1.6zM411.3 766.3h1.6v1.6h-1.6zM515.5 743.6h1.6v1.6h-1.6zM416.2 764.7h1.6v1.6h-1.6zM483.7 768.3h1.6v1.6h-1.6z"/><polygon points="145,604 258,590 258,611" fill="#995500"/><polygon points="127.5,766 258,721 270,721 270,731 258,731" fill="#aa6611"/><polyline points="147.5,402 144,600 141,735" stroke="#ff7722" stroke-width="2.2" fill="none"/><line x1="205" y1="504" x2="206" y2="612" stroke="#ff7722" stroke-width="2.2"/><line x1="251" y1="598" x2="246" y2="723" stroke="#ff7722" stroke-width="2.2"/><line x1="244" y1="453" x2="258" y2="497" stroke="#ff7722" stroke-width="2.2"/><line x1="128" y1="765" x2="188" y2="722" stroke="#ff7722" stroke-width="2" stroke-dasharray="2.2 4.5"/><polygon points="188,721 258,683 258,690 230,701 190,723" fill="#ff7722"/><path fill="#ff7711" d="M948.4 451.5h1.8v1.8h-1.8zM983.7 480.5h1.8v1.8h-1.8zM1020.5 466.8h1.8v1.8h-1.8zM967.2 426.2h1.8v1.8h-1.8zM1007.5 458.9h1.8v1.8h-1.8zM974.9 438.6h1.8v1.8h-1.8zM993.6 429.7h1.8v1.8h-1.8zM981.4 465.2h1.8v1.8h-1.8zM985.7 490.3h1.8v1.8h-1.8zM974.9 464.5h1.8v1.8h-1.8zM997.3 432.5h1.8v1.8h-1.8zM968.9 463.8h1.8v1.8h-1.8zM1003.2 444.2h1.8v1.8h-1.8zM1001.1 471.3h1.8v1.8h-1.8zM948.0 436.8h1.8v1.8h-1.8zM942.2 464.9h1.8v1.8h-1.8zM984.1 480.0h1.8v1.8h-1.8zM1001.1 448.9h1.8v1.8h-1.8zM1005.5 479.8h1.8v1.8h-1.8zM992.1 474.1h1.8v1.8h-1.8zM944.8 469.9h1.8v1.8h-1.8zM953.2 437.9h1.8v1.8h-1.8zM967.1 465.7h1.8v1.8h-1.8zM976.3 453.3h1.8v1.8h-1.8zM950.0 466.4h1.8v1.8h-1.8zM960.3 433.6h1.8v1.8h-1.8zM980.3 492.6h1.8v1.8h-1.8zM967.0 437.6h1.8v1.8h-1.8zM1005.0 490.2h1.8v1.8h-1.8zM968.8 456.5h1.8v1.8h-1.8zM981.2 499.7h1.8v1.8h-1.8zM981.8 485.6h1.8v1.8h-1.8zM987.7 428.5h1.8v1.8h-1.8zM952.2 437.6h1.8v1.8h-1.8zM991.4 464.8h1.8v1.8h-1.8zM1017.9 456.9h1.8v1.8h-1.8zM987.6 464.0h1.8v1.8h-1.8zM980.6 498.6h1.8v1.8h-1.8zM985.0 492.6h1.8v1.8h-1.8zM1010.6 449.1h1.8v1.8h-1.8zM998.2 452.5h1.8v1.8h-1.8zM981.5 466.2h1.8v1.8h-1.8zM978.6 449.8h1.8v1.8h-1.8zM1015.4 456.6h1.8v1.8h-1.8zM993.6 493.5h1.8v1.8h-1.8zM994.8 485.2h1.8v1.8h-1.8zM1009.4 482.8h1.8v1.8h-1.8zM1011.1 438.8h1.8v1.8h-1.8zM1019.5 462.5h1.8v1.8h-1.8zM939.7 450.2h1.8v1.8h-1.8zM942.6 461.5h1.8v1.8h-1.8zM944.7 443.0h1.8v1.8h-1.8zM987.3 466.1h1.8v1.8h-1.8zM954.7 456.2h1.8v1.8h-1.8zM974.9 464.0h1.8v1.8h-1.8zM977.8 456.1h1.8v1.8h-1.8zM997.5 432.0h1.8v1.8h-1.8zM962.8 465.5h1.8v1.8h-1.8zM966.0 448.0h1.8v1.8h-1.8zM964.5 467.4h1.8v1.8h-1.8zM1010.9 457.9h1.8v1.8h-1.8zM969.7 471.3h1.8v1.8h-1.8zM972.8 427.2h1.8v1.8h-1.8zM986.3 452.1h1.8v1.8h-1.8zM961.3 477.5h1.8v1.8h-1.8zM979.3 447.4h1.8v1.8h-1.8zM943.1 438.7h1.8v1.8h-1.8zM978.4 458.9h1.8v1.8h-1.8zM991.5 467.8h1.8v1.8h-1.8zM965.7 434.5h1.8v1.8h-1.8zM947.9 458.8h1.8v1.8h-1.8zM948.6 478.3h1.8v1.8h-1.8zM952.4 432.8h1.8v1.8h-1.8zM973.6 428.3h1.8v1.8h-1.8zM1013.2 443.9h1.8v1.8h-1.8zM976.4 455.5h1.8v1.8h-1.8zM960.5 430.2h1.8v1.8h-1.8zM939.8 477.0h1.8v1.8h-1.8zM996.7 495.4h1.8v1.8h-1.8zM942.7 473.4h1.8v1.8h-1.8zM977.6 482.8h1.8v1.8h-1.8zM963.1 479.6h1.8v1.8h-1.8zM1002.8 476.2h1.8v1.8h-1.8zM1014.1 458.3h1.8v1.8h-1.8zM1013.8 448.3h1.8v1.8h-1.8zM1001.3 429.6h1.8v1.8h-1.8zM978.4 442.1h1.8v1.8h-1.8zM978.0 486.4h1.8v1.8h-1.8zM999.4 464.4h1.8v1.8h-1.8zM1010.6 438.1h1.8v1.8h-1.8zM959.3 491.4h1.8v1.8h-1.8zM984.6 426.6h1.8v1.8h-1.8zM987.1 435.4h1.8v1.8h-1.8zM1010.3 483.1h1.8v1.8h-1.8zM964.1 489.7h1.8v1.8h-1.8zM955.9 482.6h1.8v1.8h-1.8zM995.6 458.7h1.8v1.8h-1.8zM942.4 456.1h1.8v1.8h-1.8zM935.7 453.2h1.8v1.8h-1.8zM942.0 481.9h1.8v1.8h-1.8zM961.7 427.3h1.8v1.8h-1.8zM995.5 471.3h1.8v1.8h-1.8zM968.0 497.2h1.8v1.8h-1.8zM1000.9 463.7h1.8v1.8h-1.8zM968.5 425.1h1.8v1.8h-1.8zM991.3 484.5h1.8v1.8h-1.8zM963.6 432.9h1.8v1.8h-1.8zM977.0 429.0h1.8v1.8h-1.8zM978.2 481.3h1.8v1.8h-1.8zM1014.8 467.5h1.8v1.8h-1.8zM983.8 480.7h1.8v1.8h-1.8zM1013.2 455.2h1.8v1.8h-1.8zM947.4 445.3h1.8v1.8h-1.8zM947.4 443.7h1.8v1.8h-1.8zM974.2 471.1h1.8v1.8h-1.8zM983.0 463.9h1.8v1.8h-1.8zM967.1 473.0h1.8v1.8h-1.8zM1002.0 479.4h1.8v1.8h-1.8zM1014.6 456.0h1.8v1.8h-1.8zM972.2 495.0h1.8v1.8h-1.8zM984.2 472.8h1.8v1.8h-1.8zM968.6 485.0h1.8v1.8h-1.8zM966.9 438.5h1.8v1.8h-1.8zM976.1 450.4h1.8v1.8h-1.8zM1002.0 452.8h1.8v1.8h-1.8zM981.9 456.2h1.8v1.8h-1.8zM988.2 446.1h1.8v1.8h-1.8zM1002.7 435.1h1.8v1.8h-1.8zM966.7 444.4h1.8v1.8h-1.8zM997.6 463.0h1.8v1.8h-1.8zM992.8 453.5h1.8v1.8h-1.8zM959.4 437.5h1.8v1.8h-1.8zM967.9 448.3h1.8v1.8h-1.8zM986.7 471.3h1.8v1.8h-1.8zM1005.7 459.4h1.8v1.8h-1.8zM958.4 438.6h1.8v1.8h-1.8zM979.9 471.5h1.8v1.8h-1.8zM1019.4 465.3h1.8v1.8h-1.8zM1008.2 489.2h1.8v1.8h-1.8zM952.9 486.4h1.8v1.8h-1.8zM1003.8 487.8h1.8v1.8h-1.8zM977.7 485.0h1.8v1.8h-1.8zM963.1 460.2h1.8v1.8h-1.8zM978.4 495.9h1.8v1.8h-1.8zM971.9 484.9h1.8v1.8h-1.8zM980.0 444.1h1.8v1.8h-1.8zM985.3 478.7h1.8v1.8h-1.8zM957.7 477.3h1.8v1.8h-1.8zM958.5 441.7h1.8v1.8h-1.8zM984.9 455.8h1.8v1.8h-1.8zM956.7 432.2h1.8v1.8h-1.8zM978.7 468.5h1.8v1.8h-1.8zM963.8 466.9h1.8v1.8h-1.8zM941.2 470.0h1.8v1.8h-1.8zM990.8 469.2h1.8v1.8h-1.8zM959.4 464.0h1.8v1.8h-1.8zM981.6 487.0h1.8v1.8h-1.8zM986.6 468.7h1.8v1.8h-1.8zM958.2 481.9h1.8v1.8h-1.8zM1008.9 451.0h1.8v1.8h-1.8zM997.1 469.8h1.8v1.8h-1.8zM976.8 433.5h1.8v1.8h-1.8zM1008.3 434.9h1.8v1.8h-1.8zM987.4 452.2h1.8v1.8h-1.8zM1008.6 452.5h1.8v1.8h-1.8zM979.2 477.7h1.8v1.8h-1.8zM991.7 448.8h1.8v1.8h-1.8zM998.1 471.8h1.8v1.8h-1.8zM1005.1 450.2h1.8v1.8h-1.8zM976.6 451.7h1.8v1.8h-1.8zM953.7 468.2h1.8v1.8h-1.8zM988.1 491.7h1.8v1.8h-1.8zM968.0 472.1h1.8v1.8h-1.8zM1009.1 459.4h1.8v1.8h-1.8zM980.0 465.6h1.8v1.8h-1.8zM959.5 439.7h1.8v1.8h-1.8zM1008.5 466.0h1.8v1.8h-1.8zM976.0 434.2h1.8v1.8h-1.8zM981.2 488.7h1.8v1.8h-1.8zM949.3 443.2h1.8v1.8h-1.8zM1002.7 488.9h1.8v1.8h-1.8zM1014.5 451.0h1.8v1.8h-1.8zM995.0 444.0h1.8v1.8h-1.8zM993.7 452.7h1.8v1.8h-1.8zM983.0 491.1h1.8v1.8h-1.8zM988.5 455.7h1.8v1.8h-1.8zM979.8 469.0h1.8v1.8h-1.8zM962.4 467.3h1.8v1.8h-1.8zM992.0 492.7h1.8v1.8h-1.8zM940.2 443.6h1.8v1.8h-1.8zM947.7 480.1h1.8v1.8h-1.8zM1021.7 464.9h1.8v1.8h-1.8zM981.3 488.1h1.8v1.8h-1.8zM934.3 459.3h1.8v1.8h-1.8zM933.2 463.9h1.8v1.8h-1.8zM962.9 449.8h1.8v1.8h-1.8zM988.2 447.2h1.8v1.8h-1.8zM1008.4 461.9h1.8v1.8h-1.8zM984.6 498.8h1.8v1.8h-1.8zM965.5 483.8h1.8v1.8h-1.8zM957.7 487.9h1.8v1.8h-1.8zM1005.2 465.3h1.8v1.8h-1.8zM999.5 491.4h1.8v1.8h-1.8zM1013.1 462.0h1.8v1.8h-1.8zM976.5 487.6h1.8v1.8h-1.8zM942.9 449.8h1.8v1.8h-1.8zM992.3 476.2h1.8v1.8h-1.8zM1010.0 487.6h1.8v1.8h-1.8zM987.9 473.3h1.8v1.8h-1.8zM944.0 458.0h1.8v1.8h-1.8zM986.1 456.1h1.8v1.8h-1.8zM979.8 477.5h1.8v1.8h-1.8zM952.0 448.9h1.8v1.8h-1.8zM942.3 481.4h1.8v1.8h-1.8zM956.0 432.0h1.8v1.8h-1.8zM1000.5 456.7h1.8v1.8h-1.8zM1004.8 453.4h1.8v1.8h-1.8zM1018.8 473.6h1.8v1.8h-1.8zM982.7 465.1h1.8v1.8h-1.8zM972.0 481.8h1.8v1.8h-1.8zM1019.1 454.7h1.8v1.8h-1.8zM949.3 475.3h1.8v1.8h-1.8zM1001.5 434.2h1.8v1.8h-1.8zM959.6 439.6h1.8v1.8h-1.8zM994.5 474.5h1.8v1.8h-1.8zM959.2 437.6h1.8v1.8h-1.8zM991.5 427.8h1.8v1.8h-1.8zM997.2 458.1h1.8v1.8h-1.8zM1015.9 478.5h1.8v1.8h-1.8zM960.7 455.1h1.8v1.8h-1.8zM969.9 444.0h1.8v1.8h-1.8zM980.3 484.9h1.8v1.8h-1.8zM941.4 457.3h1.8v1.8h-1.8zM1012.7 476.6h1.8v1.8h-1.8zM956.0 443.6h1.8v1.8h-1.8zM959.1 432.0h1.8v1.8h-1.8zM1009.0 463.6h1.8v1.8h-1.8zM961.4 433.2h1.8v1.8h-1.8zM966.5 449.1h1.8v1.8h-1.8zM1016.5 453.3h1.8v1.8h-1.8zM981.2 486.8h1.8v1.8h-1.8zM997.8 457.5h1.8v1.8h-1.8zM940.9 482.1h1.8v1.8h-1.8zM995.6 451.2h1.8v1.8h-1.8zM975.5 439.3h1.8v1.8h-1.8zM957.6 433.5h1.8v1.8h-1.8zM992.8 474.9h1.8v1.8h-1.8zM983.1 481.1h1.8v1.8h-1.8zM994.2 465.1h1.8v1.8h-1.8zM953.7 475.7h1.8v1.8h-1.8zM1008.3 475.6h1.8v1.8h-1.8zM1010.0 451.8h1.8v1.8h-1.8zM954.7 487.1h1.8v1.8h-1.8zM960.6 468.1h1.8v1.8h-1.8zM972.1 462.6h1.8v1.8h-1.8zM969.9 448.4h1.8v1.8h-1.8zM947.8 489.2h1.8v1.8h-1.8zM982.3 427.5h1.8v1.8h-1.8zM955.5 438.4h1.8v1.8h-1.8zM965.6 426.1h1.8v1.8h-1.8zM991.0 493.4h1.8v1.8h-1.8zM970.9 480.2h1.8v1.8h-1.8zM993.2 435.5h1.8v1.8h-1.8zM1002.7 433.2h1.8v1.8h-1.8zM961.0 453.0h1.8v1.8h-1.8zM1010.8 464.6h1.8v1.8h-1.8zM974.4 442.4h1.8v1.8h-1.8zM980.8 463.1h1.8v1.8h-1.8zM995.4 490.1h1.8v1.8h-1.8zM999.6 462.5h1.8v1.8h-1.8zM974.4 493.9h1.8v1.8h-1.8zM984.2 461.6h1.8v1.8h-1.8zM1010.8 486.2h1.8v1.8h-1.8zM995.0 459.3h1.8v1.8h-1.8zM961.4 485.6h1.8v1.8h-1.8zM965.6 484.2h1.8v1.8h-1.8zM955.3 464.6h1.8v1.8h-1.8zM990.3 465.7h1.8v1.8h-1.8zM985.1 471.8h1.8v1.8h-1.8zM951.3 439.7h1.8v1.8h-1.8zM974.7 495.7h1.8v1.8h-1.8zM974.5 440.0h1.8v1.8h-1.8zM958.5 462.9h1.8v1.8h-1.8zM1008.4 449.7h1.8v1.8h-1.8zM994.7 466.7h1.8v1.8h-1.8zM968.1 439.9h1.8v1.8h-1.8zM973.6 444.2h1.8v1.8h-1.8zM989.8 429.5h1.8v1.8h-1.8zM1006.6 478.2h1.8v1.8h-1.8zM991.6 491.8h1.8v1.8h-1.8zM991.3 430.1h1.8v1.8h-1.8zM979.6 473.5h1.8v1.8h-1.8zM960.5 437.6h1.8v1.8h-1.8zM990.8 474.7h1.8v1.8h-1.8zM965.2 455.8h1.8v1.8h-1.8zM963.3 448.1h1.8v1.8h-1.8zM976.4 486.7h1.8v1.8h-1.8zM940.5 455.3h1.8v1.8h-1.8zM1015.6 468.2h1.8v1.8h-1.8zM982.4 482.2h1.8v1.8h-1.8zM954.1 437.7h1.8v1.8h-1.8zM945.9 438.2h1.8v1.8h-1.8zM985.1 482.3h1.8v1.8h-1.8zM966.0 445.5h1.8v1.8h-1.8zM989.8 477.1h1.8v1.8h-1.8zM983.5 427.8h1.8v1.8h-1.8zM968.7 425.6h1.8v1.8h-1.8zM984.9 441.7h1.8v1.8h-1.8zM962.7 491.6h1.8v1.8h-1.8zM1011.0 472.2h1.8v1.8h-1.8zM986.4 466.5h1.8v1.8h-1.8zM960.6 460.7h1.8v1.8h-1.8zM1016.3 447.2h1.8v1.8h-1.8zM958.6 466.0h1.8v1.8h-1.8zM1001.4 480.5h1.8v1.8h-1.8zM951.1 458.9h1.8v1.8h-1.8zM971.1 435.0h1.8v1.8h-1.8zM980.3 449.8h1.8v1.8h-1.8zM1003.3 472.1h1.8v1.8h-1.8zM955.5 464.0h1.8v1.8h-1.8zM967.6 446.4h1.8v1.8h-1.8zM965.1 485.9h1.8v1.8h-1.8zM968.7 429.6h1.8v1.8h-1.8zM957.2 480.3h1.8v1.8h-1.8zM1017.1 445.9h1.8v1.8h-1.8zM967.3 453.6h1.8v1.8h-1.8zM943.5 470.3h1.8v1.8h-1.8zM976.4 469.2h1.8v1.8h-1.8zM1020.6 457.7h1.8v1.8h-1.8zM999.2 480.8h1.8v1.8h-1.8zM960.0 447.8h1.8v1.8h-1.8zM1013.4 475.7h1.8v1.8h-1.8zM981.9 437.1h1.8v1.8h-1.8zM1002.2 474.2h1.8v1.8h-1.8zM1014.7 482.8h1.8v1.8h-1.8zM1000.9 468.5h1.8v1.8h-1.8zM979.9 448.1h1.8v1.8h-1.8zM987.4 468.3h1.8v1.8h-1.8zM994.9 485.8h1.8v1.8h-1.8zM987.2 448.5h1.8v1.8h-1.8zM996.2 491.5h1.8v1.8h-1.8zM954.6 471.9h1.8v1.8h-1.8zM993.8 475.1h1.8v1.8h-1.8zM993.1 459.7h1.8v1.8h-1.8zM975.7 494.6h1.8v1.8h-1.8zM1011.3 439.3h1.8v1.8h-1.8zM934.6 468.3h1.8v1.8h-1.8zM958.8 449.6h1.8v1.8h-1.8zM940.8 469.0h1.8v1.8h-1.8zM976.4 448.4h1.8v1.8h-1.8zM993.3 496.9h1.8v1.8h-1.8zM1009.8 483.3h1.8v1.8h-1.8zM966.1 478.0h1.8v1.8h-1.8zM977.0 488.0h1.8v1.8h-1.8zM995.3 461.1h1.8v1.8h-1.8zM993.6 444.9h1.8v1.8h-1.8zM996.1 491.0h1.8v1.8h-1.8zM967.4 475.8h1.8v1.8h-1.8zM942.5 478.9h1.8v1.8h-1.8zM1000.2 440.2h1.8v1.8h-1.8zM1017.2 464.2h1.8v1.8h-1.8zM944.5 439.6h1.8v1.8h-1.8zM1002.6 455.5h1.8v1.8h-1.8zM1001.6 434.0h1.8v1.8h-1.8zM975.3 484.9h1.8v1.8h-1.8zM959.1 478.0h1.8v1.8h-1.8zM967.2 470.7h1.8v1.8h-1.8zM984.1 497.9h1.8v1.8h-1.8zM947.6 478.1h1.8v1.8h-1.8zM1007.7 440.5h1.8v1.8h-1.8zM979.5 498.4h1.8v1.8h-1.8zM993.0 426.3h1.8v1.8h-1.8zM972.6 429.3h1.8v1.8h-1.8zM986.7 444.4h1.8v1.8h-1.8zM962.5 442.5h1.8v1.8h-1.8zM986.8 450.3h1.8v1.8h-1.8zM952.7 456.6h1.8v1.8h-1.8zM989.4 441.8h1.8v1.8h-1.8zM1001.0 432.9h1.8v1.8h-1.8zM990.2 452.2h1.8v1.8h-1.8zM1013.9 449.6h1.8v1.8h-1.8zM961.9 434.5h1.8v1.8h-1.8zM1018.1 472.5h1.8v1.8h-1.8zM949.0 454.4h1.8v1.8h-1.8zM956.8 490.5h1.8v1.8h-1.8zM986.4 427.3h1.8v1.8h-1.8zM983.9 483.6h1.8v1.8h-1.8zM978.1 474.0h1.8v1.8h-1.8zM974.6 467.4h1.8v1.8h-1.8zM984.2 444.7h1.8v1.8h-1.8zM988.6 466.2h1.8v1.8h-1.8zM976.9 445.1h1.8v1.8h-1.8zM950.3 467.7h1.8v1.8h-1.8zM992.2 426.9h1.8v1.8h-1.8zM964.9 490.1h1.8v1.8h-1.8zM1002.4 446.0h1.8v1.8h-1.8zM1009.1 442.8h1.8v1.8h-1.8zM962.1 494.9h1.8v1.8h-1.8zM964.9 456.5h1.8v1.8h-1.8zM943.1 443.9h1.8v1.8h-1.8zM946.9 458.9h1.8v1.8h-1.8zM941.5 479.9h1.8v1.8h-1.8zM967.6 447.1h1.8v1.8h-1.8zM960.4 479.4h1.8v1.8h-1.8zM1014.3 453.9h1.8v1.8h-1.8zM1008.5 487.7h1.8v1.8h-1.8zM1011.8 468.4h1.8v1.8h-1.8zM943.3 475.3h1.8v1.8h-1.8zM965.7 467.0h1.8v1.8h-1.8zM937.7 456.9h1.8v1.8h-1.8zM984.5 440.0h1.8v1.8h-1.8zM984.7 494.3h1.8v1.8h-1.8zM984.7 445.1h1.8v1.8h-1.8zM1011.3 436.6h1.8v1.8h-1.8zM952.6 471.5h1.8v1.8h-1.8zM967.2 426.5h1.8v1.8h-1.8zM985.4 481.9h1.8v1.8h-1.8zM959.7 490.6h1.8v1.8h-1.8zM990.9 487.9h1.8v1.8h-1.8zM941.2 461.9h1.8v1.8h-1.8zM1005.4 491.1h1.8v1.8h-1.8zM1011.7 462.0h1.8v1.8h-1.8zM983.4 446.4h1.8v1.8h-1.8zM1006.2 446.9h1.8v1.8h-1.8zM980.5 426.7h1.8v1.8h-1.8zM950.1 489.9h1.8v1.8h-1.8zM979.8 467.6h1.8v1.8h-1.8zM935.3 461.5h1.8v1.8h-1.8zM1013.6 440.3h1.8v1.8h-1.8zM934.6 459.5h1.8v1.8h-1.8zM962.1 456.7h1.8v1.8h-1.8zM950.6 437.0h1.8v1.8h-1.8zM947.0 475.6h1.8v1.8h-1.8zM976.6 481.9h1.8v1.8h-1.8zM949.7 475.1h1.8v1.8h-1.8zM964.6 464.3h1.8v1.8h-1.8zM1004.2 462.8h1.8v1.8h-1.8zM970.0 429.8h1.8v1.8h-1.8zM979.8 481.1h1.8v1.8h-1.8zM959.3 460.3h1.8v1.8h-1.8zM943.9 440.2h1.8v1.8h-1.8zM988.2 489.8h1.8v1.8h-1.8zM970.9 429.7h1.8v1.8h-1.8zM969.0 430.9h1.8v1.8h-1.8zM972.2 496.4h1.8v1.8h-1.8zM987.2 458.0h1.8v1.8h-1.8zM1006.1 453.3h1.8v1.8h-1.8zM988.2 467.2h1.8v1.8h-1.8zM988.8 432.1h1.8v1.8h-1.8zM997.1 482.1h1.8v1.8h-1.8zM949.1 433.0h1.8v1.8h-1.8zM957.7 490.5h1.8v1.8h-1.8zM978.6 478.9h1.8v1.8h-1.8zM993.3 482.6h1.8v1.8h-1.8zM959.7 447.8h1.8v1.8h-1.8zM989.1 477.1h1.8v1.8h-1.8zM995.0 470.5h1.8v1.8h-1.8zM965.2 486.7h1.8v1.8h-1.8zM990.6 486.1h1.8v1.8h-1.8zM936.7 475.8h1.8v1.8h-1.8zM934.4 465.2h1.8v1.8h-1.8zM958.3 465.0h1.8v1.8h-1.8zM963.7 454.1h1.8v1.8h-1.8zM983.9 471.0h1.8v1.8h-1.8zM964.7 426.4h1.8v1.8h-1.8zM956.0 474.9h1.8v1.8h-1.8zM954.2 472.2h1.8v1.8h-1.8zM967.7 439.8h1.8v1.8h-1.8zM1002.1 490.9h1.8v1.8h-1.8zM974.8 460.7h1.8v1.8h-1.8zM1000.5 435.7h1.8v1.8h-1.8zM956.2 485.9h1.8v1.8h-1.8zM1003.0 450.4h1.8v1.8h-1.8zM955.6 470.5h1.8v1.8h-1.8zM943.5 451.7h1.8v1.8h-1.8zM973.9 425.1h1.8v1.8h-1.8zM994.6 480.2h1.8v1.8h-1.8zM1001.8 434.9h1.8v1.8h-1.8zM946.7 445.2h1.8v1.8h-1.8zM954.5 493.2h1.8v1.8h-1.8zM950.8 454.6h1.8v1.8h-1.8zM984.3 473.8h1.8v1.8h-1.8zM1010.2 441.6h1.8v1.8h-1.8zM1003.2 465.6h1.8v1.8h-1.8zM946.6 465.4h1.8v1.8h-1.8zM950.2 489.2h1.8v1.8h-1.8zM958.7 484.4h1.8v1.8h-1.8zM1010.5 449.0h1.8v1.8h-1.8zM952.3 465.2h1.8v1.8h-1.8zM951.3 481.3h1.8v1.8h-1.8zM983.1 443.1h1.8v1.8h-1.8zM958.8 479.2h1.8v1.8h-1.8zM950.0 489.6h1.8v1.8h-1.8zM955.1 457.2h1.8v1.8h-1.8zM957.8 491.9h1.8v1.8h-1.8zM998.0 488.7h1.8v1.8h-1.8zM997.6 464.3h1.8v1.8h-1.8zM1015.6 474.5h1.8v1.8h-1.8zM991.0 476.5h1.8v1.8h-1.8zM999.6 468.9h1.8v1.8h-1.8zM974.0 429.9h1.8v1.8h-1.8zM1015.0 442.3h1.8v1.8h-1.8zM937.0 450.5h1.8v1.8h-1.8zM1014.6 481.5h1.8v1.8h-1.8zM959.9 468.7h1.8v1.8h-1.8zM977.5 426.8h1.8v1.8h-1.8zM967.7 469.6h1.8v1.8h-1.8zM1005.3 438.4h1.8v1.8h-1.8zM941.5 440.5h1.8v1.8h-1.8zM988.3 464.1h1.8v1.8h-1.8zM982.7 465.9h1.8v1.8h-1.8zM968.7 432.9h1.8v1.8h-1.8zM991.8 471.9h1.8v1.8h-1.8zM992.8 488.9h1.8v1.8h-1.8zM957.3 428.9h1.8v1.8h-1.8zM949.5 490.9h1.8v1.8h-1.8zM952.2 471.5h1.8v1.8h-1.8zM977.5 480.3h1.8v1.8h-1.8zM1022.3 456.0h1.8v1.8h-1.8zM972.8 446.7h1.8v1.8h-1.8z"/><path fill="#ff7711" d="M1022.3 447.8h1.8v1.8h-1.8zM1004.8 455.2h1.8v1.8h-1.8zM1035.6 445.8h1.8v1.8h-1.8zM1016.0 436.3h1.8v1.8h-1.8zM996.5 447.3h1.8v1.8h-1.8zM1002.5 433.2h1.8v1.8h-1.8zM1032.8 428.4h1.8v1.8h-1.8zM1009.5 451.8h1.8v1.8h-1.8zM1040.6 432.9h1.8v1.8h-1.8zM1034.7 431.6h1.8v1.8h-1.8zM1024.8 447.2h1.8v1.8h-1.8zM1001.9 452.2h1.8v1.8h-1.8zM1041.3 440.6h1.8v1.8h-1.8zM1022.2 424.6h1.8v1.8h-1.8zM1041.2 440.7h1.8v1.8h-1.8zM999.8 449.2h1.8v1.8h-1.8zM997.9 432.0h1.8v1.8h-1.8zM996.6 451.7h1.8v1.8h-1.8zM1042.1 434.1h1.8v1.8h-1.8zM1007.0 431.8h1.8v1.8h-1.8zM1008.4 448.0h1.8v1.8h-1.8zM1037.0 428.9h1.8v1.8h-1.8zM1023.6 420.6h1.8v1.8h-1.8zM1039.5 438.9h1.8v1.8h-1.8zM1008.6 457.4h1.8v1.8h-1.8zM1016.4 457.1h1.8v1.8h-1.8zM1031.1 457.1h1.8v1.8h-1.8zM1004.4 440.8h1.8v1.8h-1.8zM1024.6 437.0h1.8v1.8h-1.8zM1038.5 431.9h1.8v1.8h-1.8zM1031.4 455.5h1.8v1.8h-1.8zM995.8 430.7h1.8v1.8h-1.8zM1003.5 432.6h1.8v1.8h-1.8zM1025.0 437.4h1.8v1.8h-1.8zM1019.4 433.0h1.8v1.8h-1.8zM1016.5 447.3h1.8v1.8h-1.8zM1029.9 429.4h1.8v1.8h-1.8zM1016.1 429.0h1.8v1.8h-1.8zM1015.4 422.4h1.8v1.8h-1.8zM1032.9 448.9h1.8v1.8h-1.8zM1015.9 430.0h1.8v1.8h-1.8zM1010.2 430.4h1.8v1.8h-1.8zM1000.9 455.3h1.8v1.8h-1.8zM1042.3 432.3h1.8v1.8h-1.8zM1000.4 447.4h1.8v1.8h-1.8zM1026.1 422.1h1.8v1.8h-1.8zM994.7 445.6h1.8v1.8h-1.8zM997.4 452.5h1.8v1.8h-1.8zM1009.2 441.3h1.8v1.8h-1.8zM1017.9 431.6h1.8v1.8h-1.8zM1015.4 435.4h1.8v1.8h-1.8zM1037.1 438.8h1.8v1.8h-1.8zM1017.4 432.0h1.8v1.8h-1.8zM1007.6 429.8h1.8v1.8h-1.8zM1018.1 459.9h1.8v1.8h-1.8zM1035.6 443.2h1.8v1.8h-1.8zM1038.5 450.5h1.8v1.8h-1.8zM1021.8 437.5h1.8v1.8h-1.8zM1000.6 443.3h1.8v1.8h-1.8zM1013.7 421.6h1.8v1.8h-1.8zM1004.1 457.7h1.8v1.8h-1.8zM1021.8 447.5h1.8v1.8h-1.8zM1021.6 433.0h1.8v1.8h-1.8zM1025.2 454.3h1.8v1.8h-1.8zM1012.6 447.6h1.8v1.8h-1.8zM1034.2 433.5h1.8v1.8h-1.8zM1020.9 429.3h1.8v1.8h-1.8zM1028.4 434.6h1.8v1.8h-1.8zM1034.9 430.4h1.8v1.8h-1.8zM1040.5 436.5h1.8v1.8h-1.8zM1005.1 428.2h1.8v1.8h-1.8zM1028.6 428.4h1.8v1.8h-1.8zM1038.3 452.2h1.8v1.8h-1.8zM1025.3 422.9h1.8v1.8h-1.8zM1017.6 429.4h1.8v1.8h-1.8zM995.0 444.6h1.8v1.8h-1.8zM1042.3 435.0h1.8v1.8h-1.8zM1029.5 455.4h1.8v1.8h-1.8zM1002.4 435.3h1.8v1.8h-1.8zM1022.8 447.1h1.8v1.8h-1.8zM1000.1 442.9h1.8v1.8h-1.8zM1016.2 453.3h1.8v1.8h-1.8zM996.6 433.6h1.8v1.8h-1.8zM1009.1 435.3h1.8v1.8h-1.8zM1029.9 431.2h1.8v1.8h-1.8zM1042.9 434.5h1.8v1.8h-1.8zM1030.6 453.0h1.8v1.8h-1.8zM1033.8 437.2h1.8v1.8h-1.8zM1004.1 436.4h1.8v1.8h-1.8zM1029.6 441.8h1.8v1.8h-1.8zM1027.9 448.2h1.8v1.8h-1.8zM1004.6 428.0h1.8v1.8h-1.8zM1038.4 434.2h1.8v1.8h-1.8zM1001.6 456.3h1.8v1.8h-1.8zM1005.2 427.9h1.8v1.8h-1.8zM1031.8 426.3h1.8v1.8h-1.8zM1005.1 453.2h1.8v1.8h-1.8zM1010.0 460.6h1.8v1.8h-1.8zM1018.9 461.7h1.8v1.8h-1.8zM1020.4 440.9h1.8v1.8h-1.8zM1006.9 436.7h1.8v1.8h-1.8zM1009.1 439.6h1.8v1.8h-1.8zM1029.0 424.6h1.8v1.8h-1.8zM1007.9 420.6h1.8v1.8h-1.8zM1039.4 439.1h1.8v1.8h-1.8zM1017.7 439.1h1.8v1.8h-1.8zM1034.2 444.4h1.8v1.8h-1.8zM1032.3 437.6h1.8v1.8h-1.8zM1015.8 439.1h1.8v1.8h-1.8zM996.7 450.6h1.8v1.8h-1.8z"/><path fill="#b06a22" d="M943.6 522.8h1.8v1.8h-1.8zM1004.4 549.9h1.8v1.8h-1.8zM1001.6 590.8h1.8v1.8h-1.8zM1020.8 577.9h1.8v1.8h-1.8zM976.9 596.5h1.8v1.8h-1.8zM953.7 545.1h1.8v1.8h-1.8zM1013.1 541.1h1.8v1.8h-1.8zM977.8 535.2h1.8v1.8h-1.8zM1006.0 502.9h1.8v1.8h-1.8zM1015.2 576.7h1.8v1.8h-1.8zM979.5 567.8h1.8v1.8h-1.8zM955.2 579.9h1.8v1.8h-1.8zM1029.7 533.1h1.8v1.8h-1.8zM1021.4 546.3h1.8v1.8h-1.8zM970.6 530.9h1.8v1.8h-1.8zM976.4 509.8h1.8v1.8h-1.8zM952.0 586.2h1.8v1.8h-1.8zM981.4 567.6h1.8v1.8h-1.8zM992.5 564.8h1.8v1.8h-1.8zM944.0 523.4h1.8v1.8h-1.8zM1001.0 579.1h1.8v1.8h-1.8zM948.6 530.5h1.8v1.8h-1.8zM950.5 568.0h1.8v1.8h-1.8zM994.0 549.2h1.8v1.8h-1.8zM960.5 559.8h1.8v1.8h-1.8zM983.1 522.4h1.8v1.8h-1.8zM993.0 525.2h1.8v1.8h-1.8zM1010.9 567.7h1.8v1.8h-1.8zM960.0 567.6h1.8v1.8h-1.8zM984.2 523.6h1.8v1.8h-1.8zM960.0 506.4h1.8v1.8h-1.8zM948.1 558.8h1.8v1.8h-1.8zM1016.5 529.3h1.8v1.8h-1.8zM987.5 560.4h1.8v1.8h-1.8zM1007.0 562.8h1.8v1.8h-1.8zM1016.2 570.2h1.8v1.8h-1.8zM957.4 561.3h1.8v1.8h-1.8zM933.8 544.2h1.8v1.8h-1.8zM982.7 568.4h1.8v1.8h-1.8zM972.3 575.8h1.8v1.8h-1.8zM1017.5 524.6h1.8v1.8h-1.8zM963.6 557.2h1.8v1.8h-1.8zM998.8 553.1h1.8v1.8h-1.8zM1005.1 513.8h1.8v1.8h-1.8zM1003.9 582.2h1.8v1.8h-1.8zM1015.2 561.3h1.8v1.8h-1.8zM973.8 562.3h1.8v1.8h-1.8zM980.0 504.0h1.8v1.8h-1.8zM961.5 546.6h1.8v1.8h-1.8zM966.1 518.0h1.8v1.8h-1.8zM974.0 534.7h1.8v1.8h-1.8zM984.4 546.2h1.8v1.8h-1.8zM987.4 580.3h1.8v1.8h-1.8zM986.7 562.6h1.8v1.8h-1.8zM962.9 500.1h1.8v1.8h-1.8zM968.9 571.1h1.8v1.8h-1.8zM970.7 526.5h1.8v1.8h-1.8zM948.3 573.2h1.8v1.8h-1.8zM964.1 556.7h1.8v1.8h-1.8zM1015.3 564.4h1.8v1.8h-1.8zM1029.9 545.1h1.8v1.8h-1.8zM1010.7 569.6h1.8v1.8h-1.8zM960.0 549.7h1.8v1.8h-1.8zM965.0 515.9h1.8v1.8h-1.8zM991.8 521.8h1.8v1.8h-1.8zM1023.3 529.1h1.8v1.8h-1.8zM963.5 551.2h1.8v1.8h-1.8zM964.3 549.9h1.8v1.8h-1.8zM965.6 508.1h1.8v1.8h-1.8zM938.4 523.8h1.8v1.8h-1.8zM1022.6 560.3h1.8v1.8h-1.8zM987.3 531.4h1.8v1.8h-1.8zM976.9 558.8h1.8v1.8h-1.8zM945.1 526.0h1.8v1.8h-1.8zM957.9 583.4h1.8v1.8h-1.8zM953.8 580.6h1.8v1.8h-1.8zM973.7 598.7h1.8v1.8h-1.8zM979.2 549.2h1.8v1.8h-1.8zM1017.8 572.1h1.8v1.8h-1.8zM1008.3 516.8h1.8v1.8h-1.8zM1008.2 588.2h1.8v1.8h-1.8zM978.5 530.7h1.8v1.8h-1.8zM952.0 577.1h1.8v1.8h-1.8zM992.3 548.2h1.8v1.8h-1.8zM953.7 586.7h1.8v1.8h-1.8zM1010.2 547.3h1.8v1.8h-1.8zM1019.3 523.0h1.8v1.8h-1.8zM1007.4 518.1h1.8v1.8h-1.8zM1021.4 540.0h1.8v1.8h-1.8zM1017.6 535.4h1.8v1.8h-1.8zM993.9 583.4h1.8v1.8h-1.8zM953.1 551.2h1.8v1.8h-1.8zM956.9 574.5h1.8v1.8h-1.8zM961.9 535.1h1.8v1.8h-1.8zM975.9 584.3h1.8v1.8h-1.8zM949.7 547.2h1.8v1.8h-1.8zM970.9 528.8h1.8v1.8h-1.8zM956.3 542.6h1.8v1.8h-1.8zM987.3 504.7h1.8v1.8h-1.8zM989.0 511.3h1.8v1.8h-1.8zM982.3 598.0h1.8v1.8h-1.8zM951.4 545.8h1.8v1.8h-1.8zM974.0 579.9h1.8v1.8h-1.8zM970.4 502.5h1.8v1.8h-1.8zM939.5 552.9h1.8v1.8h-1.8zM989.8 582.0h1.8v1.8h-1.8zM964.6 570.4h1.8v1.8h-1.8zM954.4 582.9h1.8v1.8h-1.8zM979.6 524.4h1.8v1.8h-1.8zM986.5 593.8h1.8v1.8h-1.8zM958.8 512.7h1.8v1.8h-1.8zM954.5 515.5h1.8v1.8h-1.8zM980.2 560.7h1.8v1.8h-1.8zM976.2 555.2h1.8v1.8h-1.8zM1017.2 539.1h1.8v1.8h-1.8zM958.4 503.2h1.8v1.8h-1.8zM990.0 524.5h1.8v1.8h-1.8zM973.4 562.6h1.8v1.8h-1.8zM994.1 505.2h1.8v1.8h-1.8zM951.7 550.4h1.8v1.8h-1.8zM977.7 584.0h1.8v1.8h-1.8zM970.8 500.2h1.8v1.8h-1.8zM1009.1 508.6h1.8v1.8h-1.8zM951.9 560.6h1.8v1.8h-1.8zM962.7 595.2h1.8v1.8h-1.8zM990.1 566.9h1.8v1.8h-1.8zM972.7 597.0h1.8v1.8h-1.8zM999.3 524.1h1.8v1.8h-1.8zM1010.1 508.6h1.8v1.8h-1.8zM962.3 558.1h1.8v1.8h-1.8zM986.4 516.5h1.8v1.8h-1.8zM1016.8 581.7h1.8v1.8h-1.8zM952.7 560.2h1.8v1.8h-1.8zM961.1 533.2h1.8v1.8h-1.8zM1013.0 552.1h1.8v1.8h-1.8zM978.2 551.8h1.8v1.8h-1.8zM951.8 580.7h1.8v1.8h-1.8zM961.5 585.2h1.8v1.8h-1.8zM966.6 532.1h1.8v1.8h-1.8zM1022.7 553.5h1.8v1.8h-1.8zM961.2 529.9h1.8v1.8h-1.8zM996.2 593.8h1.8v1.8h-1.8zM1002.3 534.4h1.8v1.8h-1.8zM949.5 527.7h1.8v1.8h-1.8zM977.8 556.9h1.8v1.8h-1.8zM963.7 585.2h1.8v1.8h-1.8zM953.4 525.8h1.8v1.8h-1.8zM998.6 564.7h1.8v1.8h-1.8zM969.9 579.1h1.8v1.8h-1.8zM951.0 585.4h1.8v1.8h-1.8zM1019.0 582.4h1.8v1.8h-1.8zM984.8 596.0h1.8v1.8h-1.8zM983.5 587.8h1.8v1.8h-1.8zM975.0 555.1h1.8v1.8h-1.8zM994.9 503.2h1.8v1.8h-1.8zM976.7 593.5h1.8v1.8h-1.8zM932.8 554.7h1.8v1.8h-1.8zM1011.1 558.7h1.8v1.8h-1.8zM987.5 588.7h1.8v1.8h-1.8zM990.0 501.0h1.8v1.8h-1.8zM952.3 538.3h1.8v1.8h-1.8zM987.0 532.0h1.8v1.8h-1.8zM979.3 593.0h1.8v1.8h-1.8zM935.6 566.9h1.8v1.8h-1.8zM1010.6 567.1h1.8v1.8h-1.8zM982.5 550.3h1.8v1.8h-1.8zM994.6 556.7h1.8v1.8h-1.8zM959.6 573.1h1.8v1.8h-1.8zM955.1 546.6h1.8v1.8h-1.8zM971.3 512.3h1.8v1.8h-1.8zM1002.4 545.6h1.8v1.8h-1.8zM946.9 545.6h1.8v1.8h-1.8zM949.9 582.8h1.8v1.8h-1.8zM993.8 595.1h1.8v1.8h-1.8zM963.9 571.5h1.8v1.8h-1.8zM953.8 522.2h1.8v1.8h-1.8zM978.9 562.8h1.8v1.8h-1.8zM1011.2 539.2h1.8v1.8h-1.8zM1012.5 575.7h1.8v1.8h-1.8zM954.0 542.1h1.8v1.8h-1.8zM960.3 590.1h1.8v1.8h-1.8zM964.9 576.5h1.8v1.8h-1.8zM1010.9 539.6h1.8v1.8h-1.8zM965.6 560.1h1.8v1.8h-1.8zM960.7 511.9h1.8v1.8h-1.8zM951.9 559.0h1.8v1.8h-1.8zM986.8 593.9h1.8v1.8h-1.8zM938.0 560.6h1.8v1.8h-1.8zM951.7 579.5h1.8v1.8h-1.8zM1005.1 552.4h1.8v1.8h-1.8zM1022.0 537.5h1.8v1.8h-1.8zM966.1 515.3h1.8v1.8h-1.8zM960.1 552.0h1.8v1.8h-1.8zM1000.7 585.0h1.8v1.8h-1.8zM973.2 523.2h1.8v1.8h-1.8zM970.7 532.9h1.8v1.8h-1.8zM966.3 534.0h1.8v1.8h-1.8zM954.0 546.3h1.8v1.8h-1.8zM964.6 542.0h1.8v1.8h-1.8zM943.0 552.3h1.8v1.8h-1.8zM1000.4 569.6h1.8v1.8h-1.8zM966.0 513.4h1.8v1.8h-1.8zM949.2 517.3h1.8v1.8h-1.8zM960.8 537.4h1.8v1.8h-1.8zM939.4 564.7h1.8v1.8h-1.8zM942.4 529.6h1.8v1.8h-1.8zM960.0 574.3h1.8v1.8h-1.8zM1026.5 539.1h1.8v1.8h-1.8zM972.6 534.1h1.8v1.8h-1.8zM975.0 541.9h1.8v1.8h-1.8zM1027.1 527.3h1.8v1.8h-1.8zM978.5 521.4h1.8v1.8h-1.8zM993.9 530.0h1.8v1.8h-1.8zM999.0 514.9h1.8v1.8h-1.8zM1028.9 552.8h1.8v1.8h-1.8zM939.6 565.4h1.8v1.8h-1.8zM968.2 512.8h1.8v1.8h-1.8zM996.6 530.2h1.8v1.8h-1.8zM1005.4 530.0h1.8v1.8h-1.8zM1010.6 552.9h1.8v1.8h-1.8z"/><path fill="#7a7a7a" d="M984.8 571.0h1.8v1.8h-1.8zM959.2 551.6h1.8v1.8h-1.8zM987.1 590.1h1.8v1.8h-1.8zM963.0 616.9h1.8v1.8h-1.8zM1012.2 536.3h1.8v1.8h-1.8zM1006.4 562.7h1.8v1.8h-1.8zM979.8 537.0h1.8v1.8h-1.8zM1013.9 542.9h1.8v1.8h-1.8zM969.2 538.9h1.8v1.8h-1.8zM1014.0 593.8h1.8v1.8h-1.8zM933.5 551.1h1.8v1.8h-1.8zM984.7 549.1h1.8v1.8h-1.8zM960.9 529.4h1.8v1.8h-1.8zM979.9 528.8h1.8v1.8h-1.8zM988.7 615.8h1.8v1.8h-1.8zM963.3 611.6h1.8v1.8h-1.8zM984.6 541.1h1.8v1.8h-1.8zM960.9 532.4h1.8v1.8h-1.8zM975.9 590.3h1.8v1.8h-1.8zM1002.2 555.5h1.8v1.8h-1.8zM935.3 562.6h1.8v1.8h-1.8zM1016.5 572.9h1.8v1.8h-1.8zM970.5 513.5h1.8v1.8h-1.8zM957.2 584.7h1.8v1.8h-1.8zM946.4 603.5h1.8v1.8h-1.8zM953.9 535.6h1.8v1.8h-1.8zM951.8 561.7h1.8v1.8h-1.8zM1003.1 546.5h1.8v1.8h-1.8zM925.9 562.9h1.8v1.8h-1.8zM986.2 609.3h1.8v1.8h-1.8zM943.7 604.5h1.8v1.8h-1.8zM994.7 581.1h1.8v1.8h-1.8zM948.2 536.2h1.8v1.8h-1.8zM943.7 594.2h1.8v1.8h-1.8zM978.9 600.6h1.8v1.8h-1.8zM1018.5 565.6h1.8v1.8h-1.8zM970.8 615.1h1.8v1.8h-1.8zM933.8 551.3h1.8v1.8h-1.8zM959.1 551.1h1.8v1.8h-1.8zM976.8 535.7h1.8v1.8h-1.8zM1002.0 528.0h1.8v1.8h-1.8zM951.5 520.3h1.8v1.8h-1.8zM932.7 582.5h1.8v1.8h-1.8zM993.6 558.0h1.8v1.8h-1.8zM998.9 585.9h1.8v1.8h-1.8zM952.0 563.7h1.8v1.8h-1.8zM980.7 615.4h1.8v1.8h-1.8zM956.7 578.7h1.8v1.8h-1.8zM988.2 603.1h1.8v1.8h-1.8zM985.2 600.2h1.8v1.8h-1.8zM938.5 556.4h1.8v1.8h-1.8zM924.4 563.8h1.8v1.8h-1.8zM1021.9 570.6h1.8v1.8h-1.8zM975.2 575.2h1.8v1.8h-1.8zM976.3 523.7h1.8v1.8h-1.8zM948.4 558.9h1.8v1.8h-1.8zM977.6 535.1h1.8v1.8h-1.8zM968.4 539.0h1.8v1.8h-1.8zM934.4 545.4h1.8v1.8h-1.8zM947.1 592.5h1.8v1.8h-1.8zM1010.3 582.6h1.8v1.8h-1.8zM964.7 544.9h1.8v1.8h-1.8zM929.7 550.3h1.8v1.8h-1.8zM1010.3 594.9h1.8v1.8h-1.8zM980.0 556.0h1.8v1.8h-1.8zM972.2 580.9h1.8v1.8h-1.8zM971.7 581.2h1.8v1.8h-1.8zM946.0 566.8h1.8v1.8h-1.8zM961.1 600.5h1.8v1.8h-1.8zM940.1 600.3h1.8v1.8h-1.8zM969.0 546.7h1.8v1.8h-1.8zM972.8 569.9h1.8v1.8h-1.8zM963.8 580.9h1.8v1.8h-1.8zM957.0 519.1h1.8v1.8h-1.8zM995.8 564.3h1.8v1.8h-1.8zM1016.0 575.9h1.8v1.8h-1.8zM929.3 592.9h1.8v1.8h-1.8zM949.3 584.2h1.8v1.8h-1.8zM1017.4 588.6h1.8v1.8h-1.8zM937.6 562.2h1.8v1.8h-1.8zM929.9 583.6h1.8v1.8h-1.8zM989.4 531.8h1.8v1.8h-1.8zM986.5 596.5h1.8v1.8h-1.8zM997.8 542.8h1.8v1.8h-1.8zM951.3 530.1h1.8v1.8h-1.8zM933.7 575.0h1.8v1.8h-1.8zM973.2 606.0h1.8v1.8h-1.8zM981.7 553.3h1.8v1.8h-1.8zM938.8 602.9h1.8v1.8h-1.8zM977.9 564.1h1.8v1.8h-1.8zM943.1 533.7h1.8v1.8h-1.8zM991.7 533.6h1.8v1.8h-1.8zM991.4 587.1h1.8v1.8h-1.8zM961.7 519.3h1.8v1.8h-1.8zM983.7 607.3h1.8v1.8h-1.8zM948.7 527.8h1.8v1.8h-1.8zM1006.2 570.0h1.8v1.8h-1.8zM953.8 602.9h1.8v1.8h-1.8zM962.4 581.8h1.8v1.8h-1.8zM958.6 539.2h1.8v1.8h-1.8zM979.3 535.6h1.8v1.8h-1.8zM927.2 551.0h1.8v1.8h-1.8zM1005.2 596.2h1.8v1.8h-1.8zM1017.8 587.1h1.8v1.8h-1.8zM1015.7 572.4h1.8v1.8h-1.8zM957.0 582.1h1.8v1.8h-1.8zM942.9 588.9h1.8v1.8h-1.8zM956.3 574.8h1.8v1.8h-1.8zM943.8 560.7h1.8v1.8h-1.8zM1003.5 558.0h1.8v1.8h-1.8zM949.2 575.4h1.8v1.8h-1.8zM1000.9 558.9h1.8v1.8h-1.8zM943.2 525.1h1.8v1.8h-1.8zM936.6 594.7h1.8v1.8h-1.8zM968.9 582.9h1.8v1.8h-1.8zM1005.6 574.7h1.8v1.8h-1.8zM988.5 547.4h1.8v1.8h-1.8zM929.7 582.5h1.8v1.8h-1.8zM968.7 586.2h1.8v1.8h-1.8zM938.3 560.7h1.8v1.8h-1.8zM1017.6 545.4h1.8v1.8h-1.8zM974.9 606.1h1.8v1.8h-1.8zM963.7 570.1h1.8v1.8h-1.8zM925.3 583.0h1.8v1.8h-1.8zM959.0 604.8h1.8v1.8h-1.8zM968.8 551.6h1.8v1.8h-1.8zM987.3 556.7h1.8v1.8h-1.8zM958.0 609.1h1.8v1.8h-1.8zM1003.6 569.1h1.8v1.8h-1.8zM997.0 592.0h1.8v1.8h-1.8zM992.1 567.1h1.8v1.8h-1.8zM974.6 580.5h1.8v1.8h-1.8zM991.3 578.1h1.8v1.8h-1.8zM952.9 562.7h1.8v1.8h-1.8zM986.5 533.0h1.8v1.8h-1.8zM971.7 592.0h1.8v1.8h-1.8zM978.0 554.9h1.8v1.8h-1.8zM971.2 547.8h1.8v1.8h-1.8zM1003.2 553.0h1.8v1.8h-1.8zM932.5 535.6h1.8v1.8h-1.8zM982.6 573.2h1.8v1.8h-1.8zM958.2 525.5h1.8v1.8h-1.8zM967.0 536.5h1.8v1.8h-1.8zM949.5 565.5h1.8v1.8h-1.8zM946.5 576.2h1.8v1.8h-1.8zM947.6 549.6h1.8v1.8h-1.8zM965.5 608.6h1.8v1.8h-1.8zM1012.0 590.2h1.8v1.8h-1.8zM947.1 565.7h1.8v1.8h-1.8zM999.8 590.9h1.8v1.8h-1.8zM927.9 563.9h1.8v1.8h-1.8zM948.6 590.1h1.8v1.8h-1.8zM993.2 547.0h1.8v1.8h-1.8zM1020.8 558.8h1.8v1.8h-1.8zM1022.4 561.7h1.8v1.8h-1.8zM969.9 614.6h1.8v1.8h-1.8zM954.1 548.9h1.8v1.8h-1.8zM1013.8 564.3h1.8v1.8h-1.8zM986.2 526.8h1.8v1.8h-1.8zM1014.4 589.5h1.8v1.8h-1.8zM983.9 590.0h1.8v1.8h-1.8zM954.9 548.8h1.8v1.8h-1.8zM929.3 575.8h1.8v1.8h-1.8zM1006.8 590.4h1.8v1.8h-1.8zM1000.4 588.2h1.8v1.8h-1.8zM946.5 528.2h1.8v1.8h-1.8zM993.9 571.4h1.8v1.8h-1.8zM1003.5 556.5h1.8v1.8h-1.8zM943.7 580.3h1.8v1.8h-1.8zM957.2 520.4h1.8v1.8h-1.8zM952.6 536.7h1.8v1.8h-1.8zM938.2 548.3h1.8v1.8h-1.8zM991.3 614.6h1.8v1.8h-1.8zM1016.7 554.4h1.8v1.8h-1.8zM1007.4 563.2h1.8v1.8h-1.8zM985.5 542.1h1.8v1.8h-1.8zM970.0 518.5h1.8v1.8h-1.8zM1016.0 546.1h1.8v1.8h-1.8zM991.5 545.4h1.8v1.8h-1.8zM980.4 528.1h1.8v1.8h-1.8zM959.9 595.8h1.8v1.8h-1.8zM986.4 516.9h1.8v1.8h-1.8zM995.8 527.7h1.8v1.8h-1.8zM981.9 584.0h1.8v1.8h-1.8zM950.2 554.5h1.8v1.8h-1.8zM963.4 580.1h1.8v1.8h-1.8zM996.8 603.5h1.8v1.8h-1.8zM979.9 615.0h1.8v1.8h-1.8zM949.2 609.5h1.8v1.8h-1.8zM963.3 591.9h1.8v1.8h-1.8zM967.5 568.7h1.8v1.8h-1.8zM942.5 578.4h1.8v1.8h-1.8zM1020.1 569.0h1.8v1.8h-1.8zM971.2 565.8h1.8v1.8h-1.8zM996.1 558.5h1.8v1.8h-1.8zM971.8 573.6h1.8v1.8h-1.8zM1007.5 592.1h1.8v1.8h-1.8zM939.9 545.8h1.8v1.8h-1.8zM972.7 594.4h1.8v1.8h-1.8zM1003.2 558.7h1.8v1.8h-1.8zM1020.9 561.6h1.8v1.8h-1.8zM1005.9 600.7h1.8v1.8h-1.8zM1015.5 571.1h1.8v1.8h-1.8zM987.9 522.3h1.8v1.8h-1.8zM927.4 549.7h1.8v1.8h-1.8zM993.6 598.3h1.8v1.8h-1.8zM968.7 599.6h1.8v1.8h-1.8zM987.8 608.2h1.8v1.8h-1.8zM930.9 543.5h1.8v1.8h-1.8zM944.1 534.3h1.8v1.8h-1.8zM1013.3 541.6h1.8v1.8h-1.8zM944.9 552.2h1.8v1.8h-1.8zM1000.5 550.3h1.8v1.8h-1.8zM996.0 584.0h1.8v1.8h-1.8zM958.4 513.9h1.8v1.8h-1.8zM946.2 529.5h1.8v1.8h-1.8zM1014.4 546.4h1.8v1.8h-1.8zM938.7 577.6h1.8v1.8h-1.8zM973.8 534.1h1.8v1.8h-1.8zM1003.6 592.6h1.8v1.8h-1.8zM981.4 539.5h1.8v1.8h-1.8zM952.1 517.5h1.8v1.8h-1.8zM985.3 579.6h1.8v1.8h-1.8zM942.0 566.4h1.8v1.8h-1.8zM1021.3 547.8h1.8v1.8h-1.8zM928.4 581.4h1.8v1.8h-1.8zM957.3 548.1h1.8v1.8h-1.8zM993.4 561.0h1.8v1.8h-1.8zM1003.1 582.0h1.8v1.8h-1.8zM1007.8 569.3h1.8v1.8h-1.8zM928.8 593.2h1.8v1.8h-1.8zM931.0 591.2h1.8v1.8h-1.8zM979.4 523.6h1.8v1.8h-1.8zM974.2 595.3h1.8v1.8h-1.8zM939.4 566.8h1.8v1.8h-1.8zM949.5 534.0h1.8v1.8h-1.8zM954.1 603.4h1.8v1.8h-1.8zM995.4 564.5h1.8v1.8h-1.8zM969.1 570.2h1.8v1.8h-1.8zM982.2 572.2h1.8v1.8h-1.8z"/><path fill="#ff7711" d="M934.5 464.0h1.8v1.8h-1.8zM951.2 445.0h1.8v1.8h-1.8zM975.5 448.8h1.8v1.8h-1.8zM958.7 457.2h1.8v1.8h-1.8zM949.1 462.8h1.8v1.8h-1.8zM955.7 455.5h1.8v1.8h-1.8zM941.9 455.7h1.8v1.8h-1.8zM940.4 458.4h1.8v1.8h-1.8zM985.3 465.2h1.8v1.8h-1.8zM970.2 447.7h1.8v1.8h-1.8zM981.7 465.2h1.8v1.8h-1.8zM985.3 447.9h1.8v1.8h-1.8zM962.4 455.0h1.8v1.8h-1.8zM982.0 450.1h1.8v1.8h-1.8zM956.6 471.2h1.8v1.8h-1.8zM976.8 446.2h1.8v1.8h-1.8zM962.4 468.6h1.8v1.8h-1.8zM948.6 463.3h1.8v1.8h-1.8zM963.9 447.0h1.8v1.8h-1.8zM949.7 467.0h1.8v1.8h-1.8zM985.0 453.4h1.8v1.8h-1.8zM983.9 452.6h1.8v1.8h-1.8zM967.8 457.9h1.8v1.8h-1.8zM937.5 460.6h1.8v1.8h-1.8zM957.1 444.4h1.8v1.8h-1.8zM945.2 451.2h1.8v1.8h-1.8zM945.5 450.4h1.8v1.8h-1.8zM952.8 444.9h1.8v1.8h-1.8zM981.2 458.7h1.8v1.8h-1.8zM967.9 455.6h1.8v1.8h-1.8zM963.5 455.6h1.8v1.8h-1.8zM943.8 448.0h1.8v1.8h-1.8zM963.6 466.6h1.8v1.8h-1.8zM966.2 469.6h1.8v1.8h-1.8zM936.0 456.0h1.8v1.8h-1.8zM950.1 467.5h1.8v1.8h-1.8zM990.8 454.5h1.8v1.8h-1.8zM978.1 455.9h1.8v1.8h-1.8zM941.0 457.1h1.8v1.8h-1.8zM944.7 468.3h1.8v1.8h-1.8zM973.5 467.3h1.8v1.8h-1.8zM967.0 444.6h1.8v1.8h-1.8zM979.6 458.9h1.8v1.8h-1.8zM929.1 458.6h1.8v1.8h-1.8zM978.2 469.0h1.8v1.8h-1.8zM941.9 464.2h1.8v1.8h-1.8zM969.8 456.4h1.8v1.8h-1.8zM955.6 462.9h1.8v1.8h-1.8zM974.5 463.7h1.8v1.8h-1.8zM954.1 447.8h1.8v1.8h-1.8zM984.0 466.7h1.8v1.8h-1.8zM949.1 457.8h1.8v1.8h-1.8zM975.2 446.5h1.8v1.8h-1.8zM968.8 471.3h1.8v1.8h-1.8zM968.0 451.8h1.8v1.8h-1.8zM993.7 458.1h1.8v1.8h-1.8zM966.9 454.1h1.8v1.8h-1.8zM965.1 445.8h1.8v1.8h-1.8zM941.3 448.5h1.8v1.8h-1.8zM981.4 457.2h1.8v1.8h-1.8zM978.4 446.4h1.8v1.8h-1.8zM951.1 468.7h1.8v1.8h-1.8zM949.4 446.2h1.8v1.8h-1.8zM945.7 455.0h1.8v1.8h-1.8zM961.7 468.3h1.8v1.8h-1.8zM982.8 467.8h1.8v1.8h-1.8zM974.8 453.6h1.8v1.8h-1.8zM952.9 447.1h1.8v1.8h-1.8zM983.6 466.6h1.8v1.8h-1.8zM963.9 450.3h1.8v1.8h-1.8zM976.7 462.3h1.8v1.8h-1.8zM965.1 448.5h1.8v1.8h-1.8zM967.4 452.9h1.8v1.8h-1.8zM977.8 463.1h1.8v1.8h-1.8zM972.0 454.1h1.8v1.8h-1.8zM988.4 463.4h1.8v1.8h-1.8zM985.3 464.2h1.8v1.8h-1.8zM976.6 461.5h1.8v1.8h-1.8zM945.6 446.8h1.8v1.8h-1.8zM942.8 463.1h1.8v1.8h-1.8zM981.5 459.6h1.8v1.8h-1.8zM963.5 470.4h1.8v1.8h-1.8zM955.3 445.9h1.8v1.8h-1.8zM934.1 455.7h1.8v1.8h-1.8zM976.7 464.2h1.8v1.8h-1.8zM957.2 465.2h1.8v1.8h-1.8zM960.9 451.5h1.8v1.8h-1.8zM953.8 464.6h1.8v1.8h-1.8zM979.8 449.6h1.8v1.8h-1.8zM941.2 459.0h1.8v1.8h-1.8zM991.0 451.6h1.8v1.8h-1.8zM937.7 461.3h1.8v1.8h-1.8zM973.2 452.6h1.8v1.8h-1.8zM961.4 462.5h1.8v1.8h-1.8zM932.2 457.8h1.8v1.8h-1.8zM974.4 465.7h1.8v1.8h-1.8zM985.5 457.4h1.8v1.8h-1.8zM939.0 466.6h1.8v1.8h-1.8zM978.2 452.6h1.8v1.8h-1.8zM981.4 465.8h1.8v1.8h-1.8zM960.0 444.6h1.8v1.8h-1.8zM951.9 451.4h1.8v1.8h-1.8zM943.8 457.3h1.8v1.8h-1.8zM940.1 461.2h1.8v1.8h-1.8zM989.6 451.0h1.8v1.8h-1.8zM983.0 453.7h1.8v1.8h-1.8zM974.4 456.8h1.8v1.8h-1.8zM985.9 452.7h1.8v1.8h-1.8zM977.2 451.5h1.8v1.8h-1.8zM967.4 457.9h1.8v1.8h-1.8zM979.8 447.6h1.8v1.8h-1.8zM940.2 467.1h1.8v1.8h-1.8zM968.7 469.8h1.8v1.8h-1.8zM940.6 459.8h1.8v1.8h-1.8zM972.0 469.8h1.8v1.8h-1.8zM960.8 453.9h1.8v1.8h-1.8zM977.8 457.1h1.8v1.8h-1.8zM946.5 464.4h1.8v1.8h-1.8zM933.6 451.9h1.8v1.8h-1.8zM987.5 454.2h1.8v1.8h-1.8zM954.6 461.4h1.8v1.8h-1.8zM984.2 462.2h1.8v1.8h-1.8zM942.3 453.3h1.8v1.8h-1.8zM983.7 457.0h1.8v1.8h-1.8zM949.0 465.3h1.8v1.8h-1.8zM977.6 470.0h1.8v1.8h-1.8zM940.9 452.4h1.8v1.8h-1.8zM946.8 461.1h1.8v1.8h-1.8zM952.5 467.0h1.8v1.8h-1.8zM930.3 462.6h1.8v1.8h-1.8zM947.7 455.5h1.8v1.8h-1.8zM974.8 459.8h1.8v1.8h-1.8zM945.0 468.2h1.8v1.8h-1.8zM974.7 453.6h1.8v1.8h-1.8zM966.3 448.9h1.8v1.8h-1.8zM937.9 455.6h1.8v1.8h-1.8zM970.4 459.0h1.8v1.8h-1.8zM948.0 447.9h1.8v1.8h-1.8zM938.2 467.2h1.8v1.8h-1.8zM969.9 451.0h1.8v1.8h-1.8zM985.1 462.3h1.8v1.8h-1.8zM952.9 452.5h1.8v1.8h-1.8zM984.8 460.7h1.8v1.8h-1.8zM990.5 460.6h1.8v1.8h-1.8zM949.3 452.8h1.8v1.8h-1.8zM946.5 460.3h1.8v1.8h-1.8zM967.7 463.5h1.8v1.8h-1.8zM971.2 449.4h1.8v1.8h-1.8zM957.7 449.9h1.8v1.8h-1.8zM971.2 447.9h1.8v1.8h-1.8zM949.9 450.8h1.8v1.8h-1.8zM948.3 455.7h1.8v1.8h-1.8zM989.5 456.1h1.8v1.8h-1.8zM935.4 455.7h1.8v1.8h-1.8zM977.9 462.8h1.8v1.8h-1.8zM965.8 470.8h1.8v1.8h-1.8zM984.6 458.8h1.8v1.8h-1.8zM982.4 448.9h1.8v1.8h-1.8zM958.4 450.5h1.8v1.8h-1.8zM965.2 469.7h1.8v1.8h-1.8zM953.3 469.4h1.8v1.8h-1.8zM944.6 467.9h1.8v1.8h-1.8zM934.5 452.4h1.8v1.8h-1.8zM982.8 457.2h1.8v1.8h-1.8zM965.4 457.9h1.8v1.8h-1.8zM966.2 456.3h1.8v1.8h-1.8zM941.7 455.6h1.8v1.8h-1.8zM964.4 450.2h1.8v1.8h-1.8zM969.8 470.0h1.8v1.8h-1.8zM933.9 454.2h1.8v1.8h-1.8zM955.5 458.2h1.8v1.8h-1.8zM964.1 451.5h1.8v1.8h-1.8zM961.2 458.1h1.8v1.8h-1.8zM960.4 469.4h1.8v1.8h-1.8zM964.4 446.9h1.8v1.8h-1.8zM934.7 462.2h1.8v1.8h-1.8zM954.5 452.5h1.8v1.8h-1.8zM936.3 455.6h1.8v1.8h-1.8zM960.0 451.8h1.8v1.8h-1.8zM954.6 465.6h1.8v1.8h-1.8zM978.5 462.7h1.8v1.8h-1.8zM958.7 447.4h1.8v1.8h-1.8zM975.5 468.6h1.8v1.8h-1.8zM983.9 466.1h1.8v1.8h-1.8zM968.3 461.5h1.8v1.8h-1.8zM961.7 468.0h1.8v1.8h-1.8zM958.0 471.1h1.8v1.8h-1.8zM978.8 455.2h1.8v1.8h-1.8zM962.0 446.3h1.8v1.8h-1.8zM946.1 455.4h1.8v1.8h-1.8zM993.6 453.7h1.8v1.8h-1.8zM981.5 458.7h1.8v1.8h-1.8zM955.5 463.6h1.8v1.8h-1.8zM932.8 463.6h1.8v1.8h-1.8zM992.7 459.9h1.8v1.8h-1.8zM960.6 459.5h1.8v1.8h-1.8zM976.3 453.7h1.8v1.8h-1.8zM964.7 462.6h1.8v1.8h-1.8zM954.1 461.6h1.8v1.8h-1.8zM969.3 464.3h1.8v1.8h-1.8zM942.0 453.6h1.8v1.8h-1.8zM953.6 467.6h1.8v1.8h-1.8zM966.4 446.2h1.8v1.8h-1.8zM943.9 469.2h1.8v1.8h-1.8zM968.5 447.9h1.8v1.8h-1.8zM942.7 459.2h1.8v1.8h-1.8zM983.3 467.8h1.8v1.8h-1.8zM953.7 455.2h1.8v1.8h-1.8zM990.6 452.1h1.8v1.8h-1.8zM989.8 460.5h1.8v1.8h-1.8zM963.8 468.2h1.8v1.8h-1.8zM972.2 450.8h1.8v1.8h-1.8zM934.3 458.1h1.8v1.8h-1.8zM971.5 468.4h1.8v1.8h-1.8zM932.0 464.3h1.8v1.8h-1.8zM972.9 468.9h1.8v1.8h-1.8zM979.2 459.9h1.8v1.8h-1.8zM971.7 461.6h1.8v1.8h-1.8zM948.0 457.0h1.8v1.8h-1.8zM964.9 453.8h1.8v1.8h-1.8zM939.4 448.9h1.8v1.8h-1.8zM973.1 462.7h1.8v1.8h-1.8zM964.2 448.4h1.8v1.8h-1.8zM980.0 454.6h1.8v1.8h-1.8zM935.3 466.2h1.8v1.8h-1.8zM943.4 469.4h1.8v1.8h-1.8zM973.8 454.0h1.8v1.8h-1.8zM930.4 454.1h1.8v1.8h-1.8zM985.2 466.7h1.8v1.8h-1.8zM966.5 446.0h1.8v1.8h-1.8zM953.3 455.4h1.8v1.8h-1.8zM972.5 456.8h1.8v1.8h-1.8zM968.1 446.4h1.8v1.8h-1.8zM950.4 468.6h1.8v1.8h-1.8zM937.1 464.5h1.8v1.8h-1.8zM993.6 461.6h1.8v1.8h-1.8zM939.2 466.3h1.8v1.8h-1.8zM931.8 460.2h1.8v1.8h-1.8zM954.1 467.8h1.8v1.8h-1.8zM985.5 459.5h1.8v1.8h-1.8zM989.7 464.2h1.8v1.8h-1.8zM952.2 449.8h1.8v1.8h-1.8zM994.7 455.8h1.8v1.8h-1.8zM971.4 456.9h1.8v1.8h-1.8zM953.8 446.6h1.8v1.8h-1.8zM958.6 456.9h1.8v1.8h-1.8zM982.0 453.7h1.8v1.8h-1.8zM936.6 450.9h1.8v1.8h-1.8zM961.1 460.4h1.8v1.8h-1.8zM977.7 454.6h1.8v1.8h-1.8zM974.2 459.3h1.8v1.8h-1.8zM991.2 457.6h1.8v1.8h-1.8zM965.2 463.2h1.8v1.8h-1.8zM984.2 451.2h1.8v1.8h-1.8zM951.3 455.5h1.8v1.8h-1.8zM933.7 465.1h1.8v1.8h-1.8zM984.0 458.2h1.8v1.8h-1.8zM993.8 462.9h1.8v1.8h-1.8zM988.3 466.3h1.8v1.8h-1.8zM977.8 447.9h1.8v1.8h-1.8z"/><ellipse cx="940" cy="424" rx="65" ry="25" fill="#aa00ff" stroke="#ff4499" stroke-width="1"/></svg><svg width="1200" height="900" style="position:absolute;left:0;top:0"><rect x="38.00" y="10.75" width="1120.00" height="17.00" fill="#888888"/><rect x="354.25" y="13.5" width="17.25" height="11.75" rx="1.5" fill="none" stroke="#000" stroke-width="2"/><circle cx="360.5" cy="19.4" r="3.3" fill="none" stroke="#000" stroke-width="2.4"/><polygon points="362.5,16 366.5,16 369,19.4 366.5,22.8 362.5,22.8" fill="#000"/><circle cx="360" cy="19.4" r="0.9" fill="#ddd"/><rect x="1117.50" y="10.75" width="40.75" height="18.25" fill="#888888"/><rect x="1117.50" y="10.75" width="40.75" height="2.00" fill="#fff"/><rect x="1117.50" y="10.75" width="2.00" height="18.25" fill="#fff"/><rect x="1126.25" y="15.5" width="17" height="7" fill="#888888" stroke="#000" stroke-width="2"/><rect x="1133.25" y="19.25" width="17" height="6.5" fill="#fff" stroke="#000" stroke-width="2.2" rx="1"/><rect x="38.00" y="33.50" width="84.00" height="55.50" fill="#888888"/><rect x="38.00" y="33.50" width="81.00" height="3.80" fill="#fff"/><rect x="38.00" y="33.50" width="14.40" height="24.90" fill="#fff"/><rect x="38.00" y="33.50" width="4.00" height="55.50" fill="#fff"/><polygon points="122,33.5 122,89 38,89 41.5,86.4 119,86.4 119,37" fill="#444444"/><rect x="45.00" y="47.60" width="4.00" height="3.20" fill="#000"/><polygon points="60.8,43.3 66.3,48.8 60.8,54.3 55.3,48.8" fill="#000"/><circle cx="78.5" cy="49.2" r="8.6" fill="#000"/><circle cx="102.3" cy="48" r="11" fill="#000"/><path d="M52.5,61.4h3.8v14.2h2.7v3.1h-10.2v-3.1h3.1v-9.5h-3.1v-2.4z" fill="#000"/><rect x="66.20" y="65.30" width="13.80" height="13.40" fill="#000"/><rect x="87.30" y="68.70" width="10.30" height="10.00" fill="#000"/><rect x="104.90" y="71.80" width="6.90" height="6.90" fill="#000"/><rect x="38.00" y="89.00" width="42.00" height="42.00" fill="#888888"/><polygon points="80,89 80,131 38,131 41.5,127.5 76.5,127.5 76.5,92.5" fill="#444444"/><polygon points="38,89 80,89 76.5,92.5 41.5,92.5 41.5,127.5 38,131" fill="#fff"/><rect x="80.00" y="89.00" width="42.00" height="42.00" fill="#fff"/><polygon points="122,89 122,131 80,131 83.5,127.5 118.5,127.5 118.5,92.5" fill="#444444"/><polygon points="80,89 122,89 118.5,92.5 83.5,92.5 83.5,127.5 80,131" fill="#fff"/><rect x="38.00" y="131.00" width="42.00" height="42.00" fill="#888888"/><polygon points="80,131 80,173 38,173 41.5,169.5 76.5,169.5 76.5,134.5" fill="#444444"/><polygon points="38,131 80,131 76.5,134.5 41.5,134.5 41.5,169.5 38,173" fill="#fff"/><rect x="80.00" y="131.00" width="42.00" height="42.00" fill="#888888"/><polygon points="122,131 122,173 80,173 83.5,169.5 118.5,169.5 118.5,134.5" fill="#444444"/><polygon points="80,131 122,131 118.5,134.5 83.5,134.5 83.5,169.5 80,173" fill="#fff"/><rect x="38.00" y="173.00" width="42.00" height="42.00" fill="#888888"/><polygon points="80,173 80,215 38,215 41.5,211.5 76.5,211.5 76.5,176.5" fill="#444444"/><polygon points="38,173 80,173 76.5,176.5 41.5,176.5 41.5,211.5 38,215" fill="#fff"/><rect x="80.00" y="173.00" width="42.00" height="42.00" fill="#888888"/><polygon points="122,173 122,215 80,215 83.5,211.5 118.5,211.5 118.5,176.5" fill="#444444"/><polygon points="80,173 122,173 118.5,176.5 83.5,176.5 83.5,211.5 80,215" fill="#fff"/><rect x="38.00" y="215.00" width="42.00" height="42.00" fill="#888888"/><polygon points="80,215 80,257 38,257 41.5,253.5 76.5,253.5 76.5,218.5" fill="#444444"/><polygon points="38,215 80,215 76.5,218.5 41.5,218.5 41.5,253.5 38,257" fill="#fff"/><rect x="80.00" y="215.00" width="42.00" height="42.00" fill="#888888"/><polygon points="122,215 122,257 80,257 83.5,253.5 118.5,253.5 118.5,218.5" fill="#444444"/><polygon points="80,215 122,215 118.5,218.5 83.5,218.5 83.5,253.5 80,257" fill="#fff"/><rect x="38.00" y="257.00" width="42.00" height="42.00" fill="#888888"/><polygon points="80,257 80,299 38,299 41.5,295.5 76.5,295.5 76.5,260.5" fill="#444444"/><polygon points="38,257 80,257 76.5,260.5 41.5,260.5 41.5,295.5 38,299" fill="#fff"/><rect x="80.00" y="257.00" width="42.00" height="42.00" fill="#888888"/><polygon points="122,257 122,299 80,299 83.5,295.5 118.5,295.5 118.5,260.5" fill="#444444"/><polygon points="80,257 122,257 118.5,260.5 83.5,260.5 83.5,295.5 80,299" fill="#fff"/><rect x="38.00" y="299.00" width="42.00" height="42.00" fill="#888888"/><polygon points="80,299 80,341 38,341 41.5,337.5 76.5,337.5 76.5,302.5" fill="#444444"/><polygon points="38,299 80,299 76.5,302.5 41.5,302.5 41.5,337.5 38,341" fill="#fff"/><rect x="80.00" y="299.00" width="42.00" height="42.00" fill="#888888"/><polygon points="122,299 122,341 80,341 83.5,337.5 118.5,337.5 118.5,302.5" fill="#444444"/><polygon points="80,299 122,299 118.5,302.5 83.5,302.5 83.5,337.5 80,341" fill="#fff"/><rect x="38.00" y="341.00" width="42.00" height="42.00" fill="#888888"/><polygon points="80,341 80,383 38,383 41.5,379.5 76.5,379.5 76.5,344.5" fill="#444444"/><polygon points="38,341 80,341 76.5,344.5 41.5,344.5 41.5,379.5 38,383" fill="#fff"/><rect x="80.00" y="341.00" width="42.00" height="42.00" fill="#888888"/><polygon points="122,341 122,383 80,383 83.5,379.5 118.5,379.5 118.5,344.5" fill="#444444"/><polygon points="80,341 122,341 118.5,344.5 83.5,344.5 83.5,379.5 80,383" fill="#fff"/><rect x="38.00" y="383.00" width="42.00" height="42.00" fill="#888888"/><polygon points="80,383 80,425 38,425 41.5,421.5 76.5,421.5 76.5,386.5" fill="#444444"/><polygon points="38,383 80,383 76.5,386.5 41.5,386.5 41.5,421.5 38,425" fill="#fff"/><rect x="80.00" y="383.00" width="42.00" height="42.00" fill="#888888"/><polygon points="122,383 122,425 80,425 83.5,421.5 118.5,421.5 118.5,386.5" fill="#444444"/><polygon points="80,383 122,383 118.5,386.5 83.5,386.5 83.5,421.5 80,425" fill="#fff"/><rect x="38.00" y="425.00" width="42.00" height="42.00" fill="#888888"/><polygon points="80,425 80,467 38,467 41.5,463.5 76.5,463.5 76.5,428.5" fill="#444444"/><polygon points="38,425 80,425 76.5,428.5 41.5,428.5 41.5,463.5 38,467" fill="#fff"/><rect x="80.00" y="425.00" width="42.00" height="42.00" fill="#888888"/><polygon points="122,425 122,467 80,467 83.5,463.5 118.5,463.5 118.5,428.5" fill="#444444"/><polygon points="80,425 122,425 118.5,428.5 83.5,428.5 83.5,463.5 80,467" fill="#fff"/><rect x="122.00" y="33.00" width="3.00" height="434.00" fill="#000"/><rect x="45.15" y="99.65" width="3.50" height="3.50" fill="#000"/><rect x="52.25" y="96.25" width="3.50" height="3.50" fill="#000"/><rect x="55.65" y="103.35" width="3.50" height="3.50" fill="#000"/><rect x="55.65" y="110.15" width="3.50" height="3.50" fill="#000"/><rect x="69.55" y="106.75" width="3.50" height="3.50" fill="#000"/><rect x="66.15" y="113.85" width="3.50" height="3.50" fill="#000"/><rect x="59.05" y="117.25" width="3.50" height="3.50" fill="#000"/><path d="M89,103.5 L93,98.5 L98,96 L102.5,98 L103.5,102 L98.5,107.5 L95.5,113.5 L99.5,119 L105,118.5 L110,112" stroke="#000" stroke-width="3.2" fill="none" stroke-linejoin="round" stroke-linecap="round"/><rect x="115.50" y="107.00" width="3.00" height="3.00" fill="#000"/><path d="M47,165 L47,158 Q49,149 56,144 Q62,140 73,140" stroke="#000" stroke-width="3.5" fill="none"/><rect x="42.50" y="138.30" width="7.00" height="2.00" fill="#000"/><rect x="44.80" y="136.00" width="2.20" height="6.60" fill="#000"/><line x1="89" y1="140" x2="110" y2="161.5" stroke="#000" stroke-width="3.8" stroke-linecap="round"/><clipPath id="bh1"><rect x="0" y="192.8" width="200" height="40"/></clipPath><ellipse cx="57.2" cy="192.8" rx="13.3" ry="12.4" fill="none" stroke="#000" stroke-width="3.6"/><ellipse cx="57.2" cy="192.8" rx="15" ry="14.2" fill="#000" clip-path="url(#bh1)"/><rect x="41.70" y="191.50" width="35.00" height="3.00" fill="#000"/><rect x="89" y="182.4" width="21.4" height="20.2" fill="none" stroke="#000" stroke-width="3.6"/><rect x="87.20" y="192.80" width="25.00" height="11.60" fill="#000"/><rect x="83.90" y="191.50" width="35.00" height="3.00" fill="#000"/><clipPath id="bh2"><rect x="0" y="234.4" width="200" height="40"/></clipPath><ellipse cx="57.2" cy="234.4" rx="8.8" ry="13.8" fill="none" stroke="#000" stroke-width="3.6"/><ellipse cx="57.2" cy="234.4" rx="10.5" ry="15.5" fill="#000" clip-path="url(#bh2)"/><rect x="41.70" y="233.00" width="35.00" height="3.00" fill="#000"/><clipPath id="bh3"><rect x="0" y="0" width="200" height="234.6"/></clipPath><clipPath id="bh4"><rect x="0" y="234.6" width="200" height="40"/></clipPath><polygon points="84.4,226.7 92.4,219.4 99.6,227.6 103.8,222.9 113.6,233.7 103.8,246.7 98.2,241.1 92.1,246.7 85.6,240.2 92,234.5" fill="none" stroke="#000" stroke-width="3.6" stroke-linejoin="miter" clip-path="url(#bh3)"/><polygon points="84.4,226.7 92.4,219.4 99.6,227.6 103.8,222.9 113.6,233.7 103.8,246.7 98.2,241.1 92.1,246.7 85.6,240.2 92,234.5" fill="#000" stroke="#000" stroke-width="2" clip-path="url(#bh4)"/><rect x="83.90" y="233.00" width="35.00" height="3.00" fill="#000"/><path d="M45.5,276 q0,-3 3,-3 h3.5 v-6.5 h4 v6.5 h3.5 q3,0 3,3 v16 h-17z" fill="#000"/><rect x="49.00" y="277.00" width="2.50" height="12.00" fill="#bbbbbb"/><rect x="49.00" y="276.50" width="6.00" height="2.00" fill="#bbbbbb"/><rect x="54.00" y="279.00" width="6.00" height="6.50" fill="#fff"/><rect x="57.40" y="264.90" width="2.20" height="2.20" fill="#000"/><rect x="60.40" y="262.40" width="2.20" height="2.20" fill="#000"/><rect x="63.40" y="265.40" width="2.20" height="2.20" fill="#000"/><rect x="66.40" y="262.40" width="2.20" height="2.20" fill="#000"/><rect x="69.40" y="260.40" width="2.20" height="2.20" fill="#000"/><rect x="71.40" y="264.40" width="2.20" height="2.20" fill="#000"/><rect x="61.90" y="268.40" width="2.20" height="2.20" fill="#000"/><rect x="65.40" y="270.40" width="2.20" height="2.20" fill="#000"/><rect x="68.90" y="267.90" width="2.20" height="2.20" fill="#000"/><rect x="71.40" y="271.90" width="2.20" height="2.20" fill="#000"/><rect x="59.40" y="267.40" width="2.20" height="2.20" fill="#000"/><rect x="67.90" y="274.40" width="2.20" height="2.20" fill="#000"/><polygon points="99,261.5 111.5,272.5 99,285.5 86.5,273.5" fill="#000"/><polygon points="97,266 104.5,272 98,278 91,273" fill="#eeeeee"/><polygon points="91,273 98,278 104.5,272 106,273.5 99,281 89.5,274.5" fill="#000"/><rect x="95.50" y="285.00" width="3.00" height="7.00" fill="#000"/><rect x="86.00" y="290.50" width="22.00" height="2.50" fill="#000"/><rect x="89.00" y="288.50" width="6.50" height="2.50" fill="#000"/><text x="45" y="331" font-family="Liberation Serif" font-weight="bold" font-size="52" fill="#000" transform="translate(45 331) scale(1.02 1) translate(-45 -331)">a</text><rect x="88.50" y="306.00" width="2.60" height="2.60" fill="#000"/><rect x="95.50" y="306.00" width="2.60" height="2.60" fill="#000"/><rect x="102.50" y="306.00" width="2.60" height="2.60" fill="#000"/><rect x="109.50" y="306.00" width="2.60" height="2.60" fill="#000"/><rect x="92.00" y="309.20" width="2.60" height="2.60" fill="#000"/><rect x="99.00" y="309.20" width="2.60" height="2.60" fill="#000"/><rect x="106.00" y="309.20" width="2.60" height="2.60" fill="#000"/><rect x="88.50" y="311.70" width="2.60" height="2.60" fill="#000"/><rect x="95.50" y="311.70" width="2.60" height="2.60" fill="#000"/><rect x="102.50" y="311.70" width="2.60" height="2.60" fill="#000"/><rect x="109.50" y="311.70" width="2.60" height="2.60" fill="#000"/><pattern id="chk" x="0" y="0" width="3.5" height="3.5" patternUnits="userSpaceOnUse"><rect x="0" y="0" width="1.75" height="1.75" fill="#000"/><rect x="1.75" y="1.75" width="1.75" height="1.75" fill="#000"/></pattern><rect x="87" y="315" width="25.2" height="6.5" fill="url(#chk)"/><rect x="87.00" y="321.50" width="25.20" height="9.70" fill="#000"/><rect x="93.60" y="322.30" width="2.60" height="2.60" fill="#888888"/><rect x="100.60" y="322.30" width="2.60" height="2.60" fill="#888888"/><rect x="107.60" y="322.30" width="2.60" height="2.60" fill="#888888"/><rect x="90.10" y="324.50" width="2.60" height="2.60" fill="#888888"/><rect x="97.10" y="324.50" width="2.60" height="2.60" fill="#888888"/><rect x="104.10" y="324.50" width="2.60" height="2.60" fill="#888888"/><rect x="93.60" y="327.20" width="2.60" height="2.60" fill="#888888"/><rect x="100.60" y="327.20" width="2.60" height="2.60" fill="#888888"/><rect x="107.60" y="327.20" width="2.60" height="2.60" fill="#888888"/><polygon points="43.5,354 50,360 57.5,352.5 65,360 71.5,354 67,370 48,370" fill="#000"/><rect x="42.00" y="352.50" width="3.50" height="3.50" fill="#000"/><rect x="56.00" y="350.00" width="3.50" height="3.50" fill="#000"/><rect x="70.00" y="352.50" width="3.50" height="3.50" fill="#000"/><path d="M50,365.5 q2.5,2.5 5,0 q2.5,2.5 5,0 q2.5,2.5 5,0" stroke="#fff" stroke-width="1.8" fill="none"/><path d="M88,360 v-10 h8 M103,350 h8 v10 M111,363 v9 h-8 M96,372 h-8 v-9" stroke="#000" stroke-width="3.5" fill="none"/><circle cx="54" cy="398.5" r="10" fill="#888888" stroke="#000" stroke-width="3.5"/><line x1="62" y1="406.5" x2="71" y2="415.5" stroke="#000" stroke-width="5"/><rect x="49.50" y="397.00" width="9.00" height="3.00" fill="#000"/><rect x="52.50" y="393.50" width="3.00" height="10.00" fill="#000"/><rect x="49.00" y="414.50" width="10.00" height="3.50" fill="#000"/><path d="M49,393 a7,7 0 0 1 4,-3.5" stroke="#fff" stroke-width="2" fill="none"/><circle cx="96" cy="398.5" r="10" fill="#888888" stroke="#000" stroke-width="3.5"/><line x1="104" y1="406.5" x2="114" y2="416" stroke="#000" stroke-width="5"/><path d="M90.5,393 a7,7 0 0 1 4,-3.5" stroke="#fff" stroke-width="2" fill="none"/><path d="M42,438 q3,-5 15,-5 q12,0 15.7,5z" fill="#000"/><rect x="55.50" y="430.00" width="4.00" height="4.00" fill="#000"/><path d="M46,437 h23.3 v19 q0,4.5 -4,4.5 h-15.3 q-4,0 -4,-4.5z" fill="#000"/><rect x="50.00" y="440.00" width="2.50" height="16.50" fill="#fff"/><rect x="56.50" y="440.00" width="2.50" height="16.50" fill="#fff"/><rect x="63.00" y="440.00" width="2.50" height="16.50" fill="#fff"/><path d="M47,436 q4,-3 8,-2" stroke="#fff" stroke-width="1.5" fill="none"/><polygon points="87,441.5 95,434 95,449" fill="#000"/><path d="M94,441.5 h10 q7,0 7,7 q0,7 -7,7 h-13" stroke="#000" stroke-width="3.5" fill="none"/><rect x="38.20" y="477.75" width="83.60" height="34.85" fill="#000"/><polygon points="121.8,477.75 121.8,512.6 38.2,512.6 41.7,509.6 118.7,509.6 118.7,481.4" fill="#444444"/><polygon points="38.2,477.75 121.8,477.75 118.7,481.4 41.7,481.4 41.7,509.6 38.2,512.6" fill="#fff"/><rect x="48.70" y="481.40" width="2.00" height="28.20" fill="#ff7711"/><rect x="59.10" y="481.40" width="2.00" height="28.20" fill="#ff7711"/><rect x="69.80" y="481.40" width="2.00" height="28.20" fill="#ff7711"/><rect x="41.70" y="488.30" width="30.10" height="2.00" fill="#ff7711"/><rect x="41.70" y="500.10" width="30.10" height="2.00" fill="#ff7711"/><rect x="84.20" y="488.50" width="23.80" height="13.80" fill="#dddddd"/><rect x="38.00" y="523.00" width="42.50" height="47.00" fill="#000000"/><rect x="80.50" y="523.00" width="41.50" height="47.00" fill="#ff00dd"/><rect x="38.00" y="570.00" width="42.50" height="47.50" fill="#cccccc"/><rect x="80.50" y="570.00" width="41.50" height="47.50" fill="#aa00ff"/><rect x="38.00" y="617.50" width="42.50" height="47.50" fill="#cc0000"/><rect x="80.50" y="617.50" width="41.50" height="47.50" fill="#995500"/><rect x="38.00" y="665.00" width="42.50" height="47.20" fill="#ff6600"/><rect x="80.50" y="665.00" width="41.50" height="47.20" fill="#ffccaa"/><rect x="38.00" y="712.20" width="42.50" height="47.40" fill="#008c00"/><rect x="80.50" y="712.20" width="41.50" height="47.40" fill="#ffe800"/><rect x="38.00" y="759.60" width="42.50" height="47.10" fill="#33ff11"/><rect x="80.50" y="759.60" width="41.50" height="47.10" fill="#ffffff"/><rect x="38.00" y="806.70" width="42.50" height="47.70" fill="#0000ee"/><rect x="80.50" y="806.70" width="41.50" height="47.70" fill="#888888"/><rect x="38.00" y="854.40" width="42.50" height="45.60" fill="#22c4dd"/><rect x="80.50" y="854.40" width="41.50" height="45.60" fill="#444444"/><rect x="258.50" y="189.30" width="675.50" height="534.70" fill="#888888"/><rect x="258.50" y="189.30" width="675.50" height="3.70" fill="#fff"/><rect x="258.50" y="189.30" width="4.00" height="534.70" fill="#fff"/><rect x="265.70" y="220.50" width="665.30" height="501.00" fill="#cccccc"/><polygon points="931,220.5 931,721.5 265.7,721.5 268.8,717.5 927,717.5 927,224.4" fill="#fff"/><polygon points="265.7,220.5 931,220.5 927,224.4 268.8,224.4 268.8,717.5 265.7,721.5" fill="#000"/><rect x="268.80" y="672.20" width="658.20" height="3.30" fill="#000"/><rect x="268.80" y="675.50" width="658.20" height="3.90" fill="#fff"/><rect x="297.00" y="252.00" width="389.00" height="280.00" fill="#cccccc"/><polygon points="686,252 686,532 297,532 300.8,528.4 682.2,528.4 682.2,255.6" fill="#000"/><polygon points="297,252 686,252 682.2,255.6 300.8,255.6 300.8,528.4 297,532" fill="#fff"/><rect x="688.70" y="252.00" width="28.60" height="234.00" fill="#cccccc"/><polygon points="717.3,252 717.3,486 688.7,486 692.7,482.8 713.3,482.8 713.3,255.2" fill="#000"/><polygon points="688.7,252 717.3,252 713.3,255.2 692.7,255.2 692.7,482.8 688.7,486" fill="#fff"/><rect x="693.00" y="256.00" width="20.75" height="227.00" fill="#cccccc"/><rect x="710.40" y="256.00" width="3.35" height="227.00" fill="#fff"/><rect x="693.00" y="479.60" width="20.75" height="3.40" fill="#fff"/><rect x="696.25" y="341.30" width="14.15" height="138.30" fill="#000"/><rect x="731.30" y="252.00" width="136.20" height="280.00" fill="#cccccc"/><polygon points="867.5,252 867.5,532 731.3,532 735.0999999999999,528.4 863.7,528.4 863.7,255.6" fill="#000"/><polygon points="731.3,252 867.5,252 863.7,255.6 735.0999999999999,255.6 735.0999999999999,528.4 731.3,532" fill="#fff"/><rect x="870.80" y="252.00" width="28.20" height="234.00" fill="#cccccc"/><polygon points="899,252 899,486 870.8,486 874.8,482.8 895,482.8 895,255.2" fill="#000"/><polygon points="870.8,252 899,252 895,255.2 874.8,255.2 874.8,482.8 870.8,486" fill="#fff"/><rect x="892.50" y="256.00" width="3.00" height="227.00" fill="#fff"/><rect x="875.00" y="479.60" width="20.50" height="3.40" fill="#fff"/><rect x="878.30" y="259.00" width="14.20" height="145.00" fill="#000"/><rect x="688.70" y="486.00" width="28.60" height="22.30" fill="#cccccc"/><polygon points="717.3,486 717.3,508.3 688.7,508.3 692.7,505.3 713.3,505.3 713.3,489" fill="#000"/><polygon points="688.7,486 717.3,486 713.3,489 692.7,489 692.7,505.3 688.7,508.3" fill="#fff"/><rect x="688.70" y="508.30" width="28.60" height="23.70" fill="#cccccc"/><polygon points="717.3,508.3 717.3,532 688.7,532 692.7,529 713.3,529 713.3,511.3" fill="#000"/><polygon points="688.7,508.3 717.3,508.3 713.3,511.3 692.7,511.3 692.7,529 688.7,532" fill="#fff"/><polyline points="695.0,501 703.5,494 712.0,501" stroke="#000" stroke-width="2.6" fill="none"/><polyline points="695.0,517 703.5,524 712.0,517" stroke="#000" stroke-width="2.6" fill="none"/><rect x="870.80" y="486.00" width="28.20" height="22.30" fill="#cccccc"/><polygon points="899,486 899,508.3 870.8,508.3 874.8,505.3 895,505.3 895,489" fill="#000"/><polygon points="870.8,486 899,486 895,489 874.8,489 874.8,505.3 870.8,508.3" fill="#fff"/><rect x="870.80" y="508.30" width="28.20" height="23.70" fill="#cccccc"/><polygon points="899,508.3 899,532 870.8,532 874.8,529 895,529 895,511.3" fill="#000"/><polygon points="870.8,508.3 899,508.3 895,511.3 874.8,511.3 874.8,529 870.8,532" fill="#fff"/><polyline points="876.9,501 885.4,494 893.9,501" stroke="#000" stroke-width="2.6" fill="none"/><polyline points="876.9,517 885.4,524 893.9,517" stroke="#000" stroke-width="2.6" fill="none"/><rect x="738.30" y="278.30" width="119.20" height="17.50" fill="#888888"/><rect x="372.20" y="535.80" width="345.00" height="34.60" fill="#cccccc"/><polygon points="717.2,535.8 717.2,570.4 372.2,570.4 375.8,567.1 713.6,567.1 713.6,539.0999999999999" fill="#000"/><polygon points="372.2,535.8 717.2,535.8 713.6,539.0999999999999 375.8,539.0999999999999 375.8,567.1 372.2,570.4" fill="#fff"/><rect x="375.80" y="539.10" width="337.80" height="28.00" fill="#cccccc"/><polygon points="713.6,539.0999999999999 713.6,567.1 375.8,567.1 379.3,563.5 710.1,563.5 710.1,542.6999999999999" fill="#fff"/><polygon points="375.8,539.0999999999999 713.6,539.0999999999999 710.1,542.6999999999999 379.3,542.6999999999999 379.3,563.5 375.8,567.1" fill="#000"/><rect x="372.20" y="571.50" width="345.00" height="34.50" fill="#cccccc"/><polygon points="717.2,571.5 717.2,606 372.2,606 375.8,602.7 713.6,602.7 713.6,574.8" fill="#000"/><polygon points="372.2,571.5 717.2,571.5 713.6,574.8 375.8,574.8 375.8,602.7 372.2,606" fill="#fff"/><rect x="375.80" y="574.80" width="337.80" height="27.90" fill="#cccccc"/><polygon points="713.6,574.8 713.6,602.7 375.8,602.7 379.3,599.1 710.1,599.1 710.1,578.4" fill="#fff"/><polygon points="375.8,574.8 713.6,574.8 710.1,578.4 379.3,578.4 379.3,599.1 375.8,602.7" fill="#000"/><rect x="731.20" y="539.30" width="168.00" height="28.00" fill="#cccccc"/><polygon points="899.2,539.3 899.2,567.3 731.2,567.3 734.7,564.0 895.7,564.0 895.7,542.5999999999999" fill="#000"/><polygon points="731.2,539.3 899.2,539.3 895.7,542.5999999999999 734.7,542.5999999999999 734.7,564.0 731.2,567.3" fill="#fff"/><rect x="335.00" y="627.00" width="132.00" height="28.00" fill="#cccccc"/><polygon points="467,627 467,655 335,655 338.5,651.7 463.5,651.7 463.5,630.3" fill="#000"/><polygon points="335,627 467,627 463.5,630.3 338.5,630.3 338.5,651.7 335,655" fill="#fff"/><rect x="532.00" y="626.25" width="133.00" height="28.25" fill="#cccccc"/><polygon points="665,626.25 665,654.5 532,654.5 535.5,651.2 661.5,651.2 661.5,629.55" fill="#000"/><polygon points="532,626.25 665,626.25 661.5,629.55 535.5,629.55 535.5,651.2 532,654.5" fill="#fff"/><rect x="730.00" y="626.70" width="132.00" height="28.00" fill="#cccccc"/><polygon points="862,626.7 862,654.7 730,654.7 733.5,651.4000000000001 858.5,651.4000000000001 858.5,630.0" fill="#000"/><polygon points="730,626.7 862,626.7 858.5,630.0 733.5,630.0 733.5,651.4000000000001 730,654.7" fill="#fff"/><rect x="405.00" y="682.50" width="127.00" height="28.75" fill="#cccccc"/><polygon points="532,682.5 532,711.25 405,711.25 408.5,707.95 528.5,707.95 528.5,685.8" fill="#000"/><polygon points="405,682.5 532,682.5 528.5,685.8 408.5,685.8 408.5,707.95 405,711.25" fill="#fff"/><rect x="665.80" y="682.60" width="126.60" height="27.70" fill="#cccccc"/><polygon points="792.4,682.6 792.4,710.3 665.8,710.3 669.3,707.0 788.9,707.0 788.9,685.9" fill="#000"/><polygon points="665.8,682.6 792.4,682.6 788.9,685.9 669.3,685.9 669.3,707.0 665.8,710.3" fill="#fff"/><rect x="913.80" y="704.60" width="19.40" height="19.40" fill="#888888"/><rect x="913.80" y="704.60" width="19.40" height="2.00" fill="#fff"/><rect x="913.80" y="704.60" width="2.00" height="19.40" fill="#fff"/><polygon points="918.5,719.5 929.5,708.5 929.5,719.5" fill="#fff" stroke="#000" stroke-width="1.5"/><rect x="320.50" y="560.80" width="12.50" height="2.00" fill="#000"/><rect x="302.50" y="595.80" width="12.50" height="2.00" fill="#000"/><rect x="755.70" y="560.50" width="12.50" height="2.00" fill="#000"/><rect x="355.00" y="648.30" width="12.50" height="2.00" fill="#000"/><rect x="562.50" y="648.80" width="12.50" height="2.00" fill="#000"/><rect x="786.70" y="647.70" width="11.30" height="2.00" fill="#000"/><rect x="425.00" y="705.00" width="12.50" height="2.00" fill="#000"/><rect x="693.00" y="704.50" width="12.50" height="2.00" fill="#000"/></svg><div style="position:absolute;left:43.82px;top:11.17px;font-family:'Liberation Sans';font-weight:bold;font-size:17.75px;line-height:17.75px;letter-spacing:0.703px;-webkit-text-stroke:0.45px #000;color:#000;white-space:pre;transform:scaleX(1.18);transform-origin:0 0">Cloanto</div><div style="position:absolute;left:150.57px;top:11.17px;font-family:'Liberation Sans';font-weight:bold;font-size:17.75px;line-height:17.75px;letter-spacing:0.619px;-webkit-text-stroke:0.45px #000;color:#000;white-space:pre;transform:scaleX(1.18);transform-origin:0 0">Personal</div><div style="position:absolute;left:256.82px;top:11.17px;font-family:'Liberation Sans';font-weight:bold;font-size:17.75px;line-height:17.75px;letter-spacing:1.364px;-webkit-text-stroke:0.45px #000;color:#000;white-space:pre;transform:scaleX(1.18);transform-origin:0 0">Paint</div><div style="position:absolute;left:487.12px;top:11.17px;font-family:'Liberation Sans';font-weight:bold;font-size:17.75px;line-height:17.75px;letter-spacing:1.299px;-webkit-text-stroke:0.45px #000;color:#000;white-space:pre;transform:scaleX(1.18);transform-origin:0 0">1:veiga</div><div style="position:absolute;left:532.12px;top:197.77px;font-family:'Liberation Sans';font-weight:bold;font-size:17.75px;line-height:17.75px;letter-spacing:0.791px;-webkit-text-stroke:0.45px #000;color:#000;white-space:pre;transform:scaleX(1.18);transform-origin:0 0">Save</div><div style="position:absolute;left:598.02px;top:197.77px;font-family:'Liberation Sans';font-weight:bold;font-size:17.75px;line-height:17.75px;letter-spacing:0.551px;-webkit-text-stroke:0.45px #000;color:#000;white-space:pre;transform:scaleX(1.18);transform-origin:0 0">Image</div><div style="position:absolute;left:295.82px;top:544.07px;font-family:'Liberation Sans';font-weight:bold;font-size:17.75px;line-height:17.75px;letter-spacing:1.661px;-webkit-text-stroke:0.45px #000;color:#000;white-space:pre;transform:scaleX(1.18);transform-origin:0 0">Path:</div><div style="position:absolute;left:381.32px;top:544.07px;font-family:'Liberation Sans';font-weight:bold;font-size:17.75px;line-height:17.75px;letter-spacing:1.758px;-webkit-text-stroke:0.45px #000;color:#000;white-space:pre;transform:scaleX(1.18);transform-origin:0 0">3n21:Feb</div><div style="position:absolute;left:498.82px;top:544.07px;font-family:'Liberation Sans';font-weight:bold;font-size:17.75px;line-height:17.75px;letter-spacing:2.644px;-webkit-text-stroke:0.45px #000;color:#000;white-space:pre;transform:scaleX(1.18);transform-origin:0 0">2022</div><div style="position:absolute;left:754.52px;top:544.07px;font-family:'Liberation Sans';font-weight:bold;font-size:17.75px;line-height:17.75px;letter-spacing:1.874px;-webkit-text-stroke:0.45px #000;color:#000;white-space:pre;transform:scaleX(1.18);transform-origin:0 0">Options...</div><div style="position:absolute;left:301.12px;top:579.57px;font-family:'Liberation Sans';font-weight:bold;font-size:17.75px;line-height:17.75px;letter-spacing:2.538px;-webkit-text-stroke:0.45px #000;color:#000;white-space:pre;transform:scaleX(1.18);transform-origin:0 0">File:</div><div style="position:absolute;left:382.50px;top:579.57px;font-family:'Liberation Sans';font-weight:bold;font-size:17.75px;line-height:17.75px;letter-spacing:1.102px;-webkit-text-stroke:0.45px #000;color:#000;white-space:pre;transform:scaleX(1.18);transform-origin:0 0">veiga</div><div style="position:absolute;left:355.00px;top:631.82px;font-family:'Liberation Sans';font-weight:bold;font-size:17.75px;line-height:17.75px;letter-spacing:0.712px;-webkit-text-stroke:0.45px #000;color:#000;white-space:pre;transform:scaleX(1.18);transform-origin:0 0">Volumes</div><div style="position:absolute;left:561.32px;top:632.32px;font-family:'Liberation Sans';font-weight:bold;font-size:17.75px;line-height:17.75px;letter-spacing:1.380px;-webkit-text-stroke:0.45px #000;color:#000;white-space:pre;transform:scaleX(1.18);transform-origin:0 0">Delete</div><div style="position:absolute;left:759.52px;top:632.07px;font-family:'Liberation Sans';font-weight:bold;font-size:17.75px;line-height:17.75px;letter-spacing:1.064px;-webkit-text-stroke:0.45px #000;color:#000;white-space:pre;transform:scaleX(1.18);transform-origin:0 0">Parent</div><div style="position:absolute;left:423.82px;top:687.57px;font-family:'Liberation Sans';font-weight:bold;font-size:17.75px;line-height:17.75px;letter-spacing:0.573px;-webkit-text-stroke:0.45px #000;color:#000;white-space:pre;transform:scaleX(1.18);transform-origin:0 0">Proceed</div><div style="position:absolute;left:691.12px;top:687.57px;font-family:'Liberation Sans';font-weight:bold;font-size:17.75px;line-height:17.75px;letter-spacing:0.563px;-webkit-text-stroke:0.45px #000;color:#000;white-space:pre;transform:scaleX(1.18);transform-origin:0 0">Cancel</div><div style="position:absolute;left:301px;top:256px;width:375.5px;height:273px;overflow:hidden"><div style="position:absolute;left:5.12px;top:4.82px;font-family:'Liberation Sans';font-weight:bold;font-size:17.75px;line-height:17.75px;letter-spacing:0.624px;-webkit-text-stroke:0.45px #000;color:#000;white-space:pre;transform:scaleX(1.18);transform-origin:0 0">Cruise</div><div style="position:absolute;left:89.70px;top:4.82px;font-family:'Liberation Sans';font-weight:bold;font-size:17.75px;line-height:17.75px;letter-spacing:1.263px;-webkit-text-stroke:0.45px #000;color:#000;white-space:pre;transform:scaleX(1.18);transform-origin:0 0">for</div><div style="position:absolute;left:132.52px;top:4.82px;font-family:'Liberation Sans';font-weight:bold;font-size:17.75px;line-height:17.75px;letter-spacing:0.900px;-webkit-text-stroke:0.45px #000;color:#000;white-space:pre;transform:scaleX(1.18);transform-origin:0 0">a</div><div style="position:absolute;left:157.57px;top:4.82px;font-family:'Liberation Sans';font-weight:bold;font-size:17.75px;line-height:17.75px;letter-spacing:0.110px;-webkit-text-stroke:0.45px #000;color:#000;white-space:pre;transform:scaleX(1.18);transform-origin:0 0">Corpse</div><div style="position:absolute;left:242.72px;top:4.82px;font-family:'Liberation Sans';font-weight:bold;font-size:17.75px;line-height:17.75px;letter-spacing:2.844px;-webkit-text-stroke:0.45px #000;color:#000;white-space:pre;transform:scaleX(1.18);transform-origin:0 0"><b class="p">(</b>1991<b class="p">)</b><b class="p">(</b>U.S.</div><div style="position:absolute;left:5.12px;top:22.32px;font-family:'Liberation Sans';font-weight:bold;font-size:17.75px;line-height:17.75px;letter-spacing:0.624px;-webkit-text-stroke:0.45px #000;color:#000;white-space:pre;transform:scaleX(1.18);transform-origin:0 0">Cruise</div><div style="position:absolute;left:89.70px;top:22.32px;font-family:'Liberation Sans';font-weight:bold;font-size:17.75px;line-height:17.75px;letter-spacing:1.263px;-webkit-text-stroke:0.45px #000;color:#000;white-space:pre;transform:scaleX(1.18);transform-origin:0 0">for</div><div style="position:absolute;left:132.52px;top:22.32px;font-family:'Liberation Sans';font-weight:bold;font-size:17.75px;line-height:17.75px;letter-spacing:0.900px;-webkit-text-stroke:0.45px #000;color:#000;white-space:pre;transform:scaleX(1.18);transform-origin:0 0">a</div><div style="position:absolute;left:157.57px;top:22.32px;font-family:'Liberation Sans';font-weight:bold;font-size:17.75px;line-height:17.75px;letter-spacing:0.110px;-webkit-text-stroke:0.45px #000;color:#000;white-space:pre;transform:scaleX(1.18);transform-origin:0 0">Corpse</div><div style="position:absolute;left:242.72px;top:22.32px;font-family:'Liberation Sans';font-weight:bold;font-size:17.75px;line-height:17.75px;letter-spacing:2.844px;-webkit-text-stroke:0.45px #000;color:#000;white-space:pre;transform:scaleX(1.18);transform-origin:0 0"><b class="p">(</b>1991<b class="p">)</b><b class="p">(</b>U.S.</div><div style="position:absolute;left:5.12px;top:39.82px;font-family:'Liberation Sans';font-weight:bold;font-size:17.75px;line-height:17.75px;letter-spacing:0.624px;-webkit-text-stroke:0.45px #000;color:#000;white-space:pre;transform:scaleX(1.18);transform-origin:0 0">Cruise</div><div style="position:absolute;left:89.70px;top:39.82px;font-family:'Liberation Sans';font-weight:bold;font-size:17.75px;line-height:17.75px;letter-spacing:1.263px;-webkit-text-stroke:0.45px #000;color:#000;white-space:pre;transform:scaleX(1.18);transform-origin:0 0">for</div><div style="position:absolute;left:132.52px;top:39.82px;font-family:'Liberation Sans';font-weight:bold;font-size:17.75px;line-height:17.75px;letter-spacing:0.900px;-webkit-text-stroke:0.45px #000;color:#000;white-space:pre;transform:scaleX(1.18);transform-origin:0 0">a</div><div style="position:absolute;left:157.57px;top:39.82px;font-family:'Liberation Sans';font-weight:bold;font-size:17.75px;line-height:17.75px;letter-spacing:0.110px;-webkit-text-stroke:0.45px #000;color:#000;white-space:pre;transform:scaleX(1.18);transform-origin:0 0">Corpse</div><div style="position:absolute;left:242.72px;top:39.82px;font-family:'Liberation Sans';font-weight:bold;font-size:17.75px;line-height:17.75px;letter-spacing:2.844px;-webkit-text-stroke:0.45px #000;color:#000;white-space:pre;transform:scaleX(1.18);transform-origin:0 0"><b class="p">(</b>1991<b class="p">)</b><b class="p">(</b>U.S.</div><div style="position:absolute;left:5.32px;top:57.32px;font-family:'Liberation Sans';font-weight:bold;font-size:17.75px;line-height:17.75px;letter-spacing:0.558px;-webkit-text-stroke:0.45px #000;color:#000;white-space:pre;transform:scaleX(1.18);transform-origin:0 0">Flashback</div><div style="position:absolute;left:125.22px;top:57.32px;font-family:'Liberation Sans';font-weight:bold;font-size:17.75px;line-height:17.75px;letter-spacing:2.979px;-webkit-text-stroke:0.45px #000;color:#000;white-space:pre;transform:scaleX(1.18);transform-origin:0 0"><b class="p">(</b>1992<b class="p">)</b><b class="p">(</b>U.S.</div><div style="position:absolute;left:284.02px;top:57.32px;font-family:'Liberation Sans';font-weight:bold;font-size:17.75px;line-height:17.75px;letter-spacing:1.576px;-webkit-text-stroke:0.45px #000;color:#000;white-space:pre;transform:scaleX(1.18);transform-origin:0 0">Gold<b class="p">)</b><b class="p">(</b>Delphine</div><div style="position:absolute;left:5.32px;top:74.82px;font-family:'Liberation Sans';font-weight:bold;font-size:17.75px;line-height:17.75px;letter-spacing:0.558px;-webkit-text-stroke:0.45px #000;color:#000;white-space:pre;transform:scaleX(1.18);transform-origin:0 0">Flashback</div><div style="position:absolute;left:125.22px;top:74.82px;font-family:'Liberation Sans';font-weight:bold;font-size:17.75px;line-height:17.75px;letter-spacing:2.979px;-webkit-text-stroke:0.45px #000;color:#000;white-space:pre;transform:scaleX(1.18);transform-origin:0 0"><b class="p">(</b>1992<b class="p">)</b><b class="p">(</b>U.S.</div><div style="position:absolute;left:284.02px;top:74.82px;font-family:'Liberation Sans';font-weight:bold;font-size:17.75px;line-height:17.75px;letter-spacing:1.576px;-webkit-text-stroke:0.45px #000;color:#000;white-space:pre;transform:scaleX(1.18);transform-origin:0 0">Gold<b class="p">)</b><b class="p">(</b>Delphine</div><div style="position:absolute;left:5.32px;top:92.32px;font-family:'Liberation Sans';font-weight:bold;font-size:17.75px;line-height:17.75px;letter-spacing:0.558px;-webkit-text-stroke:0.45px #000;color:#000;white-space:pre;transform:scaleX(1.18);transform-origin:0 0">Flashback</div><div style="position:absolute;left:125.22px;top:92.32px;font-family:'Liberation Sans';font-weight:bold;font-size:17.75px;line-height:17.75px;letter-spacing:2.979px;-webkit-text-stroke:0.45px #000;color:#000;white-space:pre;transform:scaleX(1.18);transform-origin:0 0"><b class="p">(</b>1992<b class="p">)</b><b class="p">(</b>U.S.</div><div style="position:absolute;left:284.02px;top:92.32px;font-family:'Liberation Sans';font-weight:bold;font-size:17.75px;line-height:17.75px;letter-spacing:1.576px;-webkit-text-stroke:0.45px #000;color:#000;white-space:pre;transform:scaleX(1.18);transform-origin:0 0">Gold<b class="p">)</b><b class="p">(</b>Delphine</div><div style="position:absolute;left:5.32px;top:109.82px;font-family:'Liberation Sans';font-weight:bold;font-size:17.75px;line-height:17.75px;letter-spacing:0.558px;-webkit-text-stroke:0.45px #000;color:#000;white-space:pre;transform:scaleX(1.18);transform-origin:0 0">Flashback</div><div style="position:absolute;left:125.22px;top:109.82px;font-family:'Liberation Sans';font-weight:bold;font-size:17.75px;line-height:17.75px;letter-spacing:2.979px;-webkit-text-stroke:0.45px #000;color:#000;white-space:pre;transform:scaleX(1.18);transform-origin:0 0"><b class="p">(</b>1992<b class="p">)</b><b class="p">(</b>U.S.</div><div style="position:absolute;left:284.02px;top:109.82px;font-family:'Liberation Sans';font-weight:bold;font-size:17.75px;line-height:17.75px;letter-spacing:1.576px;-webkit-text-stroke:0.45px #000;color:#000;white-space:pre;transform:scaleX(1.18);transform-origin:0 0">Gold<b class="p">)</b><b class="p">(</b>Delphine</div><div style="position:absolute;left:5.42px;top:127.32px;font-family:'Liberation Sans';font-weight:bold;font-size:17.75px;line-height:17.75px;letter-spacing:0.703px;-webkit-text-stroke:0.45px #000;color:#000;white-space:pre;transform:scaleX(1.18);transform-origin:0 0">Operation</div><div style="position:absolute;left:122.82px;top:127.32px;font-family:'Liberation Sans';font-weight:bold;font-size:17.75px;line-height:17.75px;letter-spacing:1.686px;-webkit-text-stroke:0.45px #000;color:#000;white-space:pre;transform:scaleX(1.18);transform-origin:0 0">Stealth</div><div style="position:absolute;left:215.32px;top:127.32px;font-family:'Liberation Sans';font-weight:bold;font-size:17.75px;line-height:17.75px;letter-spacing:2.992px;-webkit-text-stroke:0.45px #000;color:#000;white-space:pre;transform:scaleX(1.18);transform-origin:0 0"><b class="p">(</b>1990<b class="p">)</b><b class="p">(</b>U.S.</div><div style="position:absolute;left:5.42px;top:144.82px;font-family:'Liberation Sans';font-weight:bold;font-size:17.75px;line-height:17.75px;letter-spacing:0.703px;-webkit-text-stroke:0.45px #000;color:#000;white-space:pre;transform:scaleX(1.18);transform-origin:0 0">Operation</div><div style="position:absolute;left:122.82px;top:144.82px;font-family:'Liberation Sans';font-weight:bold;font-size:17.75px;line-height:17.75px;letter-spacing:1.686px;-webkit-text-stroke:0.45px #000;color:#000;white-space:pre;transform:scaleX(1.18);transform-origin:0 0">Stealth</div><div style="position:absolute;left:215.32px;top:144.82px;font-family:'Liberation Sans';font-weight:bold;font-size:17.75px;line-height:17.75px;letter-spacing:2.992px;-webkit-text-stroke:0.45px #000;color:#000;white-space:pre;transform:scaleX(1.18);transform-origin:0 0"><b class="p">(</b>1990<b class="p">)</b><b class="p">(</b>U.S.</div><div style="position:absolute;left:5.42px;top:162.32px;font-family:'Liberation Sans';font-weight:bold;font-size:17.75px;line-height:17.75px;letter-spacing:0.703px;-webkit-text-stroke:0.45px #000;color:#000;white-space:pre;transform:scaleX(1.18);transform-origin:0 0">Operation</div><div style="position:absolute;left:122.82px;top:162.32px;font-family:'Liberation Sans';font-weight:bold;font-size:17.75px;line-height:17.75px;letter-spacing:1.686px;-webkit-text-stroke:0.45px #000;color:#000;white-space:pre;transform:scaleX(1.18);transform-origin:0 0">Stealth</div><div style="position:absolute;left:215.32px;top:162.32px;font-family:'Liberation Sans';font-weight:bold;font-size:17.75px;line-height:17.75px;letter-spacing:2.992px;-webkit-text-stroke:0.45px #000;color:#000;white-space:pre;transform:scaleX(1.18);transform-origin:0 0"><b class="p">(</b>1990<b class="p">)</b><b class="p">(</b>U.S.</div><div style="position:absolute;left:6.50px;top:179.82px;font-family:'Liberation Sans';font-weight:bold;font-size:17.75px;line-height:17.75px;letter-spacing:1.144px;-webkit-text-stroke:0.45px #000;color:#000;white-space:pre;transform:scaleX(1.18);transform-origin:0 0">veiga</div><div style="position:absolute;left:302.82px;top:179.82px;font-family:'Liberation Sans';font-weight:bold;font-size:17.75px;line-height:17.75px;letter-spacing:2.619px;-webkit-text-stroke:0.45px #000;color:#000;white-space:pre;transform:scaleX(1.18);transform-origin:0 0">38570</div><div style="position:absolute;left:4.42px;top:197.32px;font-family:'Liberation Sans';font-weight:bold;font-size:17.75px;line-height:17.75px;letter-spacing:0.900px;-webkit-text-stroke:0.45px #888888;color:#888888;white-space:pre;transform:scaleX(1.18);transform-origin:0 0"><b class="p">(</b></div><div style="position:absolute;left:17.62px;top:197.32px;font-family:'Liberation Sans';font-weight:bold;font-size:17.75px;line-height:17.75px;letter-spacing:0.864px;-webkit-text-stroke:0.45px #888888;color:#888888;white-space:pre;transform:scaleX(1.18);transform-origin:0 0">dir</div><div style="position:absolute;left:53.00px;top:197.32px;font-family:'Liberation Sans';font-weight:bold;font-size:17.75px;line-height:17.75px;letter-spacing:0.900px;-webkit-text-stroke:0.45px #888888;color:#888888;white-space:pre;transform:scaleX(1.18);transform-origin:0 0"><b class="p">)</b></div><div style="position:absolute;left:88.82px;top:197.32px;font-family:'Liberation Sans';font-weight:bold;font-size:17.75px;line-height:17.75px;letter-spacing:0.864px;-webkit-text-stroke:0.45px #000;color:#000;white-space:pre;transform:scaleX(1.18);transform-origin:0 0">DPaint</div><div style="position:absolute;left:171.82px;top:197.32px;font-family:'Liberation Sans';font-weight:bold;font-size:17.75px;line-height:17.75px;letter-spacing:3.669px;-webkit-text-stroke:0.45px #000;color:#000;white-space:pre;transform:scaleX(1.18);transform-origin:0 0">III</div><div style="position:absolute;left:4.42px;top:214.82px;font-family:'Liberation Sans';font-weight:bold;font-size:17.75px;line-height:17.75px;letter-spacing:0.900px;-webkit-text-stroke:0.45px #888888;color:#888888;white-space:pre;transform:scaleX(1.18);transform-origin:0 0"><b class="p">(</b></div><div style="position:absolute;left:17.62px;top:214.82px;font-family:'Liberation Sans';font-weight:bold;font-size:17.75px;line-height:17.75px;letter-spacing:0.864px;-webkit-text-stroke:0.45px #888888;color:#888888;white-space:pre;transform:scaleX(1.18);transform-origin:0 0">dir</div><div style="position:absolute;left:53.00px;top:214.82px;font-family:'Liberation Sans';font-weight:bold;font-size:17.75px;line-height:17.75px;letter-spacing:0.900px;-webkit-text-stroke:0.45px #888888;color:#888888;white-space:pre;transform:scaleX(1.18);transform-origin:0 0"><b class="p">)</b></div><div style="position:absolute;left:88.82px;top:214.82px;font-family:'Liberation Sans';font-weight:bold;font-size:17.75px;line-height:17.75px;letter-spacing:2.178px;-webkit-text-stroke:0.45px #000;color:#000;white-space:pre;transform:scaleX(1.18);transform-origin:0 0">STATE</div><div style="position:absolute;left:4.42px;top:232.32px;font-family:'Liberation Sans';font-weight:bold;font-size:17.75px;line-height:17.75px;letter-spacing:0.900px;-webkit-text-stroke:0.45px #888888;color:#888888;white-space:pre;transform:scaleX(1.18);transform-origin:0 0"><b class="p">(</b></div><div style="position:absolute;left:17.62px;top:232.32px;font-family:'Liberation Sans';font-weight:bold;font-size:17.75px;line-height:17.75px;letter-spacing:0.864px;-webkit-text-stroke:0.45px #888888;color:#888888;white-space:pre;transform:scaleX(1.18);transform-origin:0 0">dir</div><div style="position:absolute;left:53.00px;top:232.32px;font-family:'Liberation Sans';font-weight:bold;font-size:17.75px;line-height:17.75px;letter-spacing:0.900px;-webkit-text-stroke:0.45px #888888;color:#888888;white-space:pre;transform:scaleX(1.18);transform-origin:0 0"><b class="p">)</b></div><div style="position:absolute;left:88.82px;top:232.32px;font-family:'Liberation Sans';font-weight:bold;font-size:17.75px;line-height:17.75px;letter-spacing:2.115px;-webkit-text-stroke:0.45px #000;color:#000;white-space:pre;transform:scaleX(1.18);transform-origin:0 0">STATE2</div><div style="position:absolute;left:4.42px;top:249.82px;font-family:'Liberation Sans';font-weight:bold;font-size:17.75px;line-height:17.75px;letter-spacing:0.900px;-webkit-text-stroke:0.45px #888888;color:#888888;white-space:pre;transform:scaleX(1.18);transform-origin:0 0"><b class="p">(</b></div><div style="position:absolute;left:17.62px;top:249.82px;font-family:'Liberation Sans';font-weight:bold;font-size:17.75px;line-height:17.75px;letter-spacing:0.864px;-webkit-text-stroke:0.45px #888888;color:#888888;white-space:pre;transform:scaleX(1.18);transform-origin:0 0">dir</div><div style="position:absolute;left:53.00px;top:249.82px;font-family:'Liberation Sans';font-weight:bold;font-size:17.75px;line-height:17.75px;letter-spacing:0.900px;-webkit-text-stroke:0.45px #888888;color:#888888;white-space:pre;transform:scaleX(1.18);transform-origin:0 0"><b class="p">)</b></div><div style="position:absolute;left:88.82px;top:249.82px;font-family:'Liberation Sans';font-weight:bold;font-size:17.75px;line-height:17.75px;letter-spacing:2.115px;-webkit-text-stroke:0.45px #000;color:#000;white-space:pre;transform:scaleX(1.18);transform-origin:0 0">STATE3</div></div><div style="position:absolute;left:735px;top:256px;width:123px;height:273px;overflow:hidden"><div style="position:absolute;left:5.52px;top:4.82px;font-family:'Liberation Sans';font-weight:bold;font-size:17.75px;line-height:17.75px;letter-spacing:1.107px;-webkit-text-stroke:0.45px #000;color:#000;white-space:pre;transform:scaleX(1.18);transform-origin:0 0">ILBM</div><div style="position:absolute;left:5.52px;top:22.32px;font-family:'Liberation Sans';font-weight:bold;font-size:17.75px;line-height:17.75px;letter-spacing:-0.576px;-webkit-text-stroke:0.45px #fff;color:#fff;white-space:pre;transform:scaleX(1.18);transform-origin:0 0">PNG</div><div style="position:absolute;left:5.52px;top:39.82px;font-family:'Liberation Sans';font-weight:bold;font-size:17.75px;line-height:17.75px;letter-spacing:0.449px;-webkit-text-stroke:0.45px #000;color:#000;white-space:pre;transform:scaleX(1.18);transform-origin:0 0">GIF</div><div style="position:absolute;left:5.52px;top:57.32px;font-family:'Liberation Sans';font-weight:bold;font-size:17.75px;line-height:17.75px;letter-spacing:-0.992px;-webkit-text-stroke:0.45px #000;color:#000;white-space:pre;transform:scaleX(1.18);transform-origin:0 0">BMP</div><div style="position:absolute;left:64.20px;top:57.32px;font-family:'Liberation Sans';font-weight:bold;font-size:17.75px;line-height:17.75px;letter-spacing:-0.331px;-webkit-text-stroke:0.45px #000;color:#000;white-space:pre;transform:scaleX(1.18);transform-origin:0 0">Win</div><div style="position:absolute;left:5.52px;top:74.82px;font-family:'Liberation Sans';font-weight:bold;font-size:17.75px;line-height:17.75px;letter-spacing:-0.992px;-webkit-text-stroke:0.45px #000;color:#000;white-space:pre;transform:scaleX(1.18);transform-origin:0 0">BMP</div><div style="position:absolute;left:63.02px;top:74.82px;font-family:'Liberation Sans';font-weight:bold;font-size:17.75px;line-height:17.75px;letter-spacing:2.989px;-webkit-text-stroke:0.45px #000;color:#000;white-space:pre;transform:scaleX(1.18);transform-origin:0 0">OS/2</div><div style="position:absolute;left:5.52px;top:92.32px;font-family:'Liberation Sans';font-weight:bold;font-size:17.75px;line-height:17.75px;letter-spacing:0.424px;-webkit-text-stroke:0.45px #000;color:#000;white-space:pre;transform:scaleX(1.18);transform-origin:0 0">PCX</div><div style="position:absolute;left:5.52px;top:109.82px;font-family:'Liberation Sans';font-weight:bold;font-size:17.75px;line-height:17.75px;letter-spacing:-0.051px;-webkit-text-stroke:0.45px #000;color:#000;white-space:pre;transform:scaleX(1.18);transform-origin:0 0">ACBM</div><div style="position:absolute;left:5.52px;top:127.32px;font-family:'Liberation Sans';font-weight:bold;font-size:17.75px;line-height:17.75px;letter-spacing:0.250px;-webkit-text-stroke:0.45px #000;color:#000;white-space:pre;transform:scaleX(1.18);transform-origin:0 0">CRYPT</div><div style="position:absolute;left:5.52px;top:144.82px;font-family:'Liberation Sans';font-weight:bold;font-size:17.75px;line-height:17.75px;letter-spacing:0.186px;-webkit-text-stroke:0.45px #000;color:#000;white-space:pre;transform:scaleX(1.18);transform-origin:0 0">PBM</div><div style="position:absolute;left:5.12px;top:162.32px;font-family:'Liberation Sans';font-weight:bold;font-size:17.75px;line-height:17.75px;letter-spacing:0.900px;-webkit-text-stroke:0.45px #000;color:#000;white-space:pre;transform:scaleX(1.18);transform-origin:0 0">C</div><div style="position:absolute;left:31.82px;top:162.32px;font-family:'Liberation Sans';font-weight:bold;font-size:17.75px;line-height:17.75px;letter-spacing:1.203px;-webkit-text-stroke:0.45px #000;color:#000;white-space:pre;transform:scaleX(1.18);transform-origin:0 0">Src</div><div style="position:absolute;left:5.52px;top:179.82px;font-family:'Liberation Sans';font-weight:bold;font-size:17.75px;line-height:17.75px;letter-spacing:-0.839px;-webkit-text-stroke:0.45px #000;color:#000;white-space:pre;transform:scaleX(1.18);transform-origin:0 0">Raw</div><div style="position:absolute;left:5.52px;top:197.32px;font-family:'Liberation Sans';font-weight:bold;font-size:17.75px;line-height:17.75px;letter-spacing:1.102px;-webkit-text-stroke:0.45px #000;color:#000;white-space:pre;transform:scaleX(1.18);transform-origin:0 0">ASCII</div><div style="position:absolute;left:5.12px;top:214.82px;font-family:'Liberation Sans';font-weight:bold;font-size:17.75px;line-height:17.75px;letter-spacing:0.627px;-webkit-text-stroke:0.45px #000;color:#000;white-space:pre;transform:scaleX(1.18);transform-origin:0 0">SV</div><div style="position:absolute;left:46.92px;top:214.82px;font-family:'Liberation Sans';font-weight:bold;font-size:17.75px;line-height:17.75px;letter-spacing:0.910px;-webkit-text-stroke:0.45px #000;color:#000;white-space:pre;transform:scaleX(1.18);transform-origin:0 0">ILBM</div><div style="position:absolute;left:113.62px;top:214.82px;font-family:'Liberation Sans';font-weight:bold;font-size:17.75px;line-height:17.75px;letter-spacing:0.900px;-webkit-text-stroke:0.45px #000;color:#000;white-space:pre;transform:scaleX(1.18);transform-origin:0 0">N</div><div style="position:absolute;left:5.12px;top:232.32px;font-family:'Liberation Sans';font-weight:bold;font-size:17.75px;line-height:17.75px;letter-spacing:0.627px;-webkit-text-stroke:0.45px #000;color:#000;white-space:pre;transform:scaleX(1.18);transform-origin:0 0">SV</div><div style="position:absolute;left:46.92px;top:232.32px;font-family:'Liberation Sans';font-weight:bold;font-size:17.75px;line-height:17.75px;letter-spacing:0.910px;-webkit-text-stroke:0.45px #000;color:#000;white-space:pre;transform:scaleX(1.18);transform-origin:0 0">ILBM</div><div style="position:absolute;left:113.62px;top:232.32px;font-family:'Liberation Sans';font-weight:bold;font-size:17.75px;line-height:17.75px;letter-spacing:0.900px;-webkit-text-stroke:0.45px #000;color:#000;white-space:pre;transform:scaleX(1.18);transform-origin:0 0">C</div><div style="position:absolute;left:5.12px;top:249.82px;font-family:'Liberation Sans';font-weight:bold;font-size:17.75px;line-height:17.75px;letter-spacing:0.627px;-webkit-text-stroke:0.45px #000;color:#000;white-space:pre;transform:scaleX(1.18);transform-origin:0 0">SV</div><div style="position:absolute;left:46.02px;top:249.82px;font-family:'Liberation Sans';font-weight:bold;font-size:17.75px;line-height:17.75px;letter-spacing:0.322px;-webkit-text-stroke:0.45px #000;color:#000;white-space:pre;transform:scaleX(1.18);transform-origin:0 0">GIF</div><div style="position:absolute;left:94.02px;top:249.82px;font-family:'Liberation Sans';font-weight:bold;font-size:17.75px;line-height:17.75px;letter-spacing:0.900px;-webkit-text-stroke:0.45px #000;color:#000;white-space:pre;transform:scaleX(1.18);transform-origin:0 0">87a</div></div><div style="position:absolute;left:16.2px;top:846.2px;width:31.5px;height:31.5px;border:1px solid #e8e8e8;border-radius:5px;font-family:'Liberation Sans',sans-serif;font-size:28px;line-height:33px;color:#fff;text-align:center"><span style="display:inline-block;transform:scaleX(0.78);-webkit-text-stroke:0.35px #fff">C</span></div><div style="position:absolute;left:52.2px;top:846.2px;width:31.5px;height:31.5px;border:1px solid #e8e8e8;border-radius:5px;font-family:'Liberation Sans',sans-serif;font-size:28px;line-height:33px;color:#fff;text-align:center"><span style="display:inline-block;transform:scaleX(0.78);-webkit-text-stroke:0.35px #fff">O</span></div><div style="position:absolute;left:88.2px;top:846.2px;width:31.5px;height:31.5px;border:1px solid #e8e8e8;border-radius:5px;font-family:'Liberation Sans',sans-serif;font-size:28px;line-height:33px;color:#fff;text-align:center"><span style="display:inline-block;transform:scaleX(0.78);-webkit-text-stroke:0.35px #fff">M</span></div><div style="position:absolute;left:124.2px;top:846.2px;width:31.5px;height:31.5px;border:1px solid #e8e8e8;border-radius:5px;font-family:'Liberation Sans',sans-serif;font-size:28px;line-height:33px;color:#fff;text-align:center"><span style="display:inline-block;transform:scaleX(0.78);-webkit-text-stroke:0.35px #fff">M</span></div><div style="position:absolute;left:160.2px;top:846.2px;width:31.5px;height:31.5px;border:1px solid #e8e8e8;border-radius:5px;font-family:'Liberation Sans',sans-serif;font-size:28px;line-height:33px;color:#fff;text-align:center"><span style="display:inline-block;transform:scaleX(0.78);-webkit-text-stroke:0.35px #fff">O</span></div><div style="position:absolute;left:196.2px;top:846.2px;width:31.5px;height:31.5px;border:1px solid #e8e8e8;border-radius:5px;font-family:'Liberation Sans',sans-serif;font-size:28px;line-height:33px;color:#fff;text-align:center"><span style="display:inline-block;transform:scaleX(0.78);-webkit-text-stroke:0.35px #fff">D</span></div><div style="position:absolute;left:232.2px;top:846.2px;width:31.5px;height:31.5px;border:1px solid #e8e8e8;border-radius:5px;font-family:'Liberation Sans',sans-serif;font-size:28px;line-height:33px;color:#fff;text-align:center"><span style="display:inline-block;transform:scaleX(0.78);-webkit-text-stroke:0.35px #fff">O</span></div><div style="position:absolute;left:268.2px;top:846.2px;width:31.5px;height:31.5px;border:1px solid #e8e8e8;border-radius:5px;font-family:'Liberation Sans',sans-serif;font-size:28px;line-height:33px;color:#fff;text-align:center"><span style="display:inline-block;transform:scaleX(0.78);-webkit-text-stroke:0.35px #fff">R</span></div><div style="position:absolute;left:304.2px;top:846.2px;width:31.5px;height:31.5px;border:1px solid #e8e8e8;border-radius:5px;font-family:'Liberation Sans',sans-serif;font-size:28px;line-height:33px;color:#fff;text-align:center"><span style="display:inline-block;transform:scaleX(0.78);-webkit-text-stroke:0.35px #fff">E</span></div><div style="position:absolute;left:358.4px;top:846.2px;width:31.5px;height:31.5px;border:1px solid #e8e8e8;border-radius:5px;font-family:'Liberation Sans',sans-serif;font-size:28px;line-height:33px;color:#fff;text-align:center"><span style="display:inline-block;transform:scaleX(0.78);-webkit-text-stroke:0.35px #fff">A</span></div><div style="position:absolute;left:394.4px;top:846.2px;width:31.5px;height:31.5px;border:1px solid #e8e8e8;border-radius:5px;font-family:'Liberation Sans',sans-serif;font-size:28px;line-height:33px;color:#fff;text-align:center"><span style="display:inline-block;transform:scaleX(0.78);-webkit-text-stroke:0.35px #fff">M</span></div><div style="position:absolute;left:430.4px;top:846.2px;width:31.5px;height:31.5px;border:1px solid #e8e8e8;border-radius:5px;font-family:'Liberation Sans',sans-serif;font-size:28px;line-height:33px;color:#fff;text-align:center"><span style="display:inline-block;transform:scaleX(0.78);-webkit-text-stroke:0.35px #fff">I</span></div><div style="position:absolute;left:466.4px;top:846.2px;width:31.5px;height:31.5px;border:1px solid #e8e8e8;border-radius:5px;font-family:'Liberation Sans',sans-serif;font-size:28px;line-height:33px;color:#fff;text-align:center"><span style="display:inline-block;transform:scaleX(0.78);-webkit-text-stroke:0.35px #fff">G</span></div><div style="position:absolute;left:502.4px;top:846.2px;width:31.5px;height:31.5px;border:1px solid #e8e8e8;border-radius:5px;font-family:'Liberation Sans',sans-serif;font-size:28px;line-height:33px;color:#fff;text-align:center"><span style="display:inline-block;transform:scaleX(0.78);-webkit-text-stroke:0.35px #fff">A</span></div><div style="position:absolute;left:556.6px;top:846.2px;width:31.5px;height:31.5px;border:1px solid #e8e8e8;border-radius:5px;font-family:'Liberation Sans',sans-serif;font-size:28px;line-height:33px;color:#fff;text-align:center"><span style="display:inline-block;transform:scaleX(0.78);-webkit-text-stroke:0.35px #fff">R</span></div><div style="position:absolute;left:592.6px;top:846.2px;width:31.5px;height:31.5px;border:1px solid #e8e8e8;border-radius:5px;font-family:'Liberation Sans',sans-serif;font-size:28px;line-height:33px;color:#fff;text-align:center"><span style="display:inline-block;transform:scaleX(0.78);-webkit-text-stroke:0.35px #fff">E</span></div><div style="position:absolute;left:628.6px;top:846.2px;width:31.5px;height:31.5px;border:1px solid #e8e8e8;border-radius:5px;font-family:'Liberation Sans',sans-serif;font-size:28px;line-height:33px;color:#fff;text-align:center"><span style="display:inline-block;transform:scaleX(0.78);-webkit-text-stroke:0.35px #fff">T</span></div><div style="position:absolute;left:664.6px;top:846.2px;width:31.5px;height:31.5px;border:1px solid #e8e8e8;border-radius:5px;font-family:'Liberation Sans',sans-serif;font-size:28px;line-height:33px;color:#fff;text-align:center"><span style="display:inline-block;transform:scaleX(0.78);-webkit-text-stroke:0.35px #fff">R</span></div><div style="position:absolute;left:700.6px;top:846.2px;width:31.5px;height:31.5px;border:1px solid #e8e8e8;border-radius:5px;font-family:'Liberation Sans',sans-serif;font-size:28px;line-height:33px;color:#fff;text-align:center"><span style="display:inline-block;transform:scaleX(0.78);-webkit-text-stroke:0.35px #fff">O</span></div>
</body></html>
